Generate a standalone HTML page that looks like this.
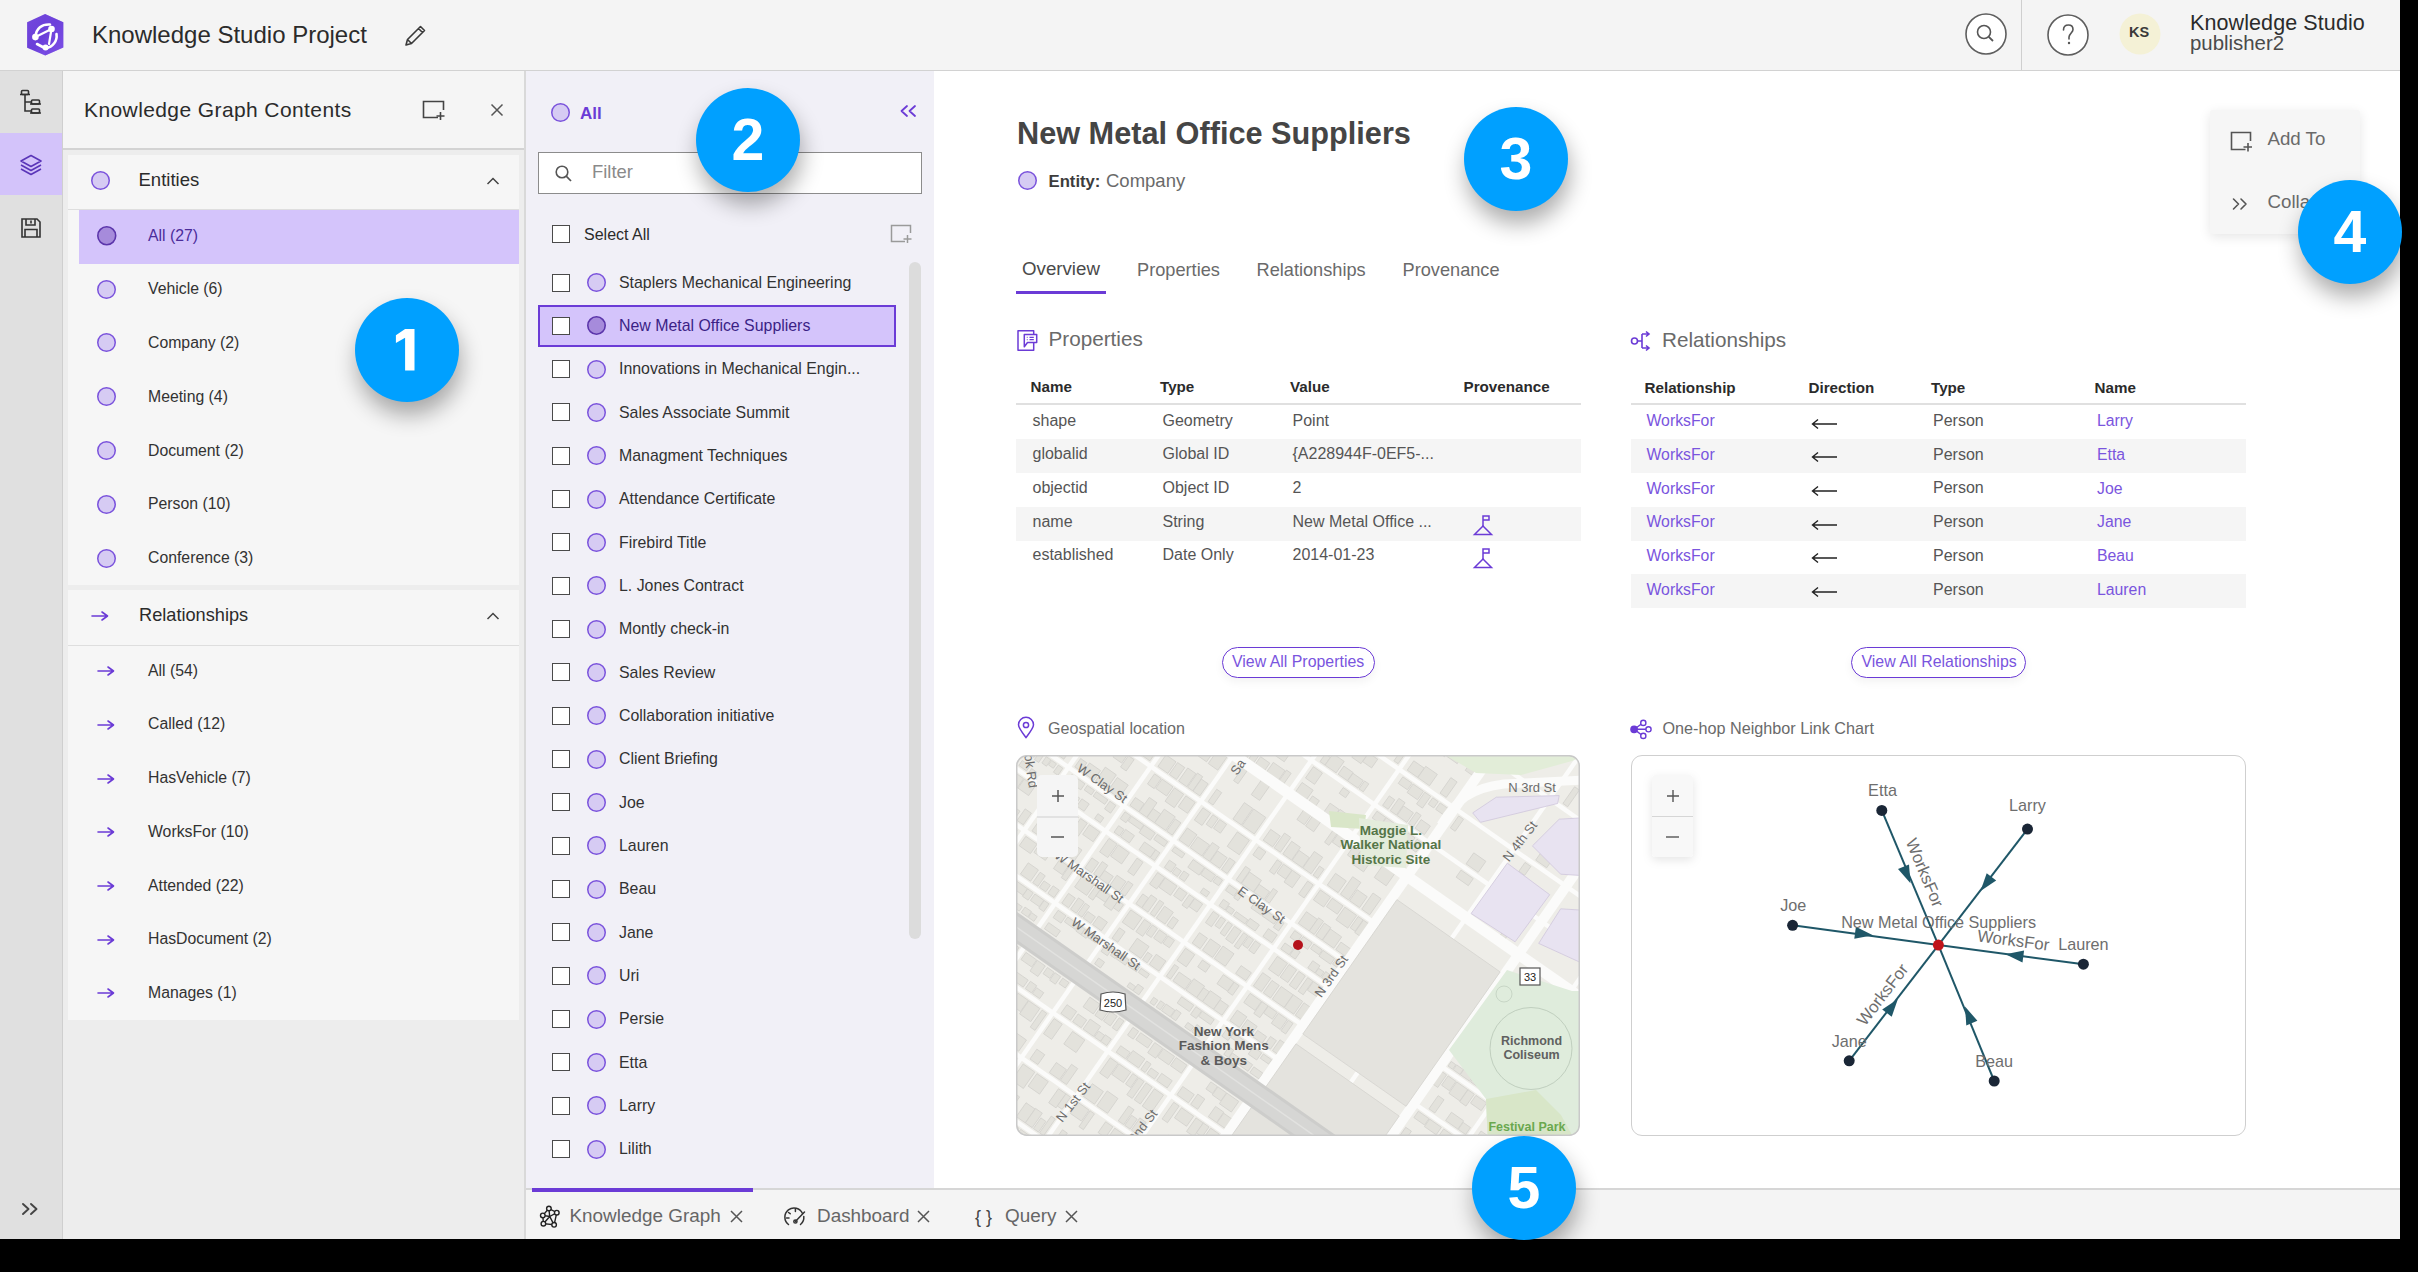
<!DOCTYPE html>
<html><head><meta charset="utf-8">
<style>
*{box-sizing:border-box;margin:0;padding:0}
html,body{width:2418px;height:1272px;overflow:hidden;background:#000;font-family:"Liberation Sans",sans-serif;color:#323232}
.a{position:absolute}
.t{position:absolute;white-space:nowrap;line-height:1}
svg.a{overflow:visible}
#app{position:absolute;left:0;top:0;width:2400px;height:1239px;background:#fff;overflow:hidden}
.badge{position:absolute;width:104px;height:104px;border-radius:52px;background:#00a0ff;color:#fff;font-weight:bold;font-size:59px;text-align:center;line-height:105px;box-shadow:2px 13px 22px rgba(0,0,0,.32)}
</style></head><body>
<div id="app">

<div class="a" style="left:0px;top:0px;width:2400px;height:70px;background:#f4f4f4;"></div>
<div class="a" style="left:0px;top:70px;width:2400px;height:1px;background:#d2d2d2;"></div>
<div class="a" style="left:0px;top:71px;width:62px;height:1168px;background:#e0e0e0;"></div>
<div class="a" style="left:62px;top:71px;width:1px;height:1168px;background:#cfcfcf;"></div>
<div class="a" style="left:63px;top:71px;width:461px;height:1168px;background:#ededed;"></div>
<div class="a" style="left:524px;top:71px;width:2px;height:1168px;background:#d9d9d9;"></div>
<div class="a" style="left:526px;top:71px;width:408px;height:1117px;background:#f1f0f7;"></div>
<div class="a" style="left:526px;top:1188px;width:1874px;height:2px;background:#d6d6d6;"></div>
<div class="a" style="left:526px;top:1190px;width:1874px;height:49px;background:#f4f4f4;"></div>
<svg class="a" style="left:26px;top:13px;" width="39" height="45" viewBox="0 0 39 45"><defs><linearGradient id="lg" x1="0" y1="0" x2="1" y2="1"><stop offset="0" stop-color="#7448dc"/><stop offset="0.5" stop-color="#6a3fd9"/><stop offset="1" stop-color="#8a5cf2"/></linearGradient></defs>
<polygon points="19,0.9 37.3,9.2 37.3,34.4 19.2,42.6 1.1,34.8 1.1,9.2" fill="url(#lg)"/>
<polygon points="19,0.9 37.3,9.2 37.3,34.4 19.2,42.6 19.2,12" fill="#6f44dc" opacity="0.5"/>
<path d="M9.5,24 C10,15 16,11 24,11.5" stroke="#fff" stroke-width="2.6" fill="none" stroke-linecap="round"/>
<path d="M30.5,21 C31.5,28 27,34 19.6,35.5 L11,31" stroke="#fff" stroke-width="2.6" fill="none" stroke-linecap="round" stroke-linejoin="round"/>
<path d="M9.5,24 L25.5,16 L23,31" stroke="#fff" stroke-width="2.2" fill="none" stroke-linecap="round" stroke-linejoin="round"/>
<circle cx="9.4" cy="24.1" r="3.3" fill="#fff"/><circle cx="25.5" cy="16" r="3.3" fill="#fff"/><circle cx="19.6" cy="34.6" r="3" fill="#fff"/></svg>
<div class="t" style="left:92.0px;top:22.5px;font-size:24px;color:#2b2b2b">Knowledge Studio Project</div>
<svg class="a" style="left:403px;top:24px;" width="24" height="24" viewBox="0 0 24 24"><path d="M3,21 L4.5,15.5 L17.5,2.5 L21.5,6.5 L8.5,19.5 Z M4.5,15.5 L8.5,19.5 M15.5,4.5 L19.5,8.5" stroke="#3a3a3a" stroke-width="1.6" fill="none" stroke-linejoin="round"/></svg>
<svg class="a" style="left:1964px;top:12px;" width="44" height="44" viewBox="0 0 44 44"><circle cx="22" cy="22" r="20" fill="#fff" stroke="#5e5e5e" stroke-width="1.6"/><circle cx="20" cy="20" r="6.5" fill="none" stroke="#555" stroke-width="1.6"/><path d="M24.8,24.8 L29,29" stroke="#555" stroke-width="1.8"/></svg>
<div class="a" style="left:2021px;top:0px;width:1px;height:70px;background:#cfcfcf;"></div>
<svg class="a" style="left:2046px;top:13px;" width="44" height="44" viewBox="0 0 44 44"><circle cx="22" cy="22" r="20" fill="#fff" stroke="#5e5e5e" stroke-width="1.6"/><path d="M17.5,17 C17.5,13.5 20,12 22.5,12 C25.5,12 27,14 27,16.5 C27,19.5 23.5,20.5 23,24 L23,26" stroke="#555" stroke-width="1.6" fill="none" stroke-linecap="round"/><circle cx="23" cy="30" r="1.2" fill="#555"/></svg>
<svg class="a" style="left:2119px;top:13px;" width="42" height="42" viewBox="0 0 42 42"><circle cx="21" cy="21" r="20.5" fill="#f4f1d6"/></svg>
<div class="t" style="left:2129.0px;top:25.0px;font-size:14.5px;color:#3a3a3a;font-weight:700">KS</div>
<div class="t" style="left:2190.0px;top:12.5px;font-size:21.5px;color:#2b2b2b;letter-spacing:0.1px">Knowledge Studio</div>
<div class="t" style="left:2190.0px;top:32.9px;font-size:20.4px;color:#4a4a4a">publisher2</div>
<svg class="a" style="left:18px;top:88px;" width="28" height="28" viewBox="0 0 28 28"><g stroke="#333" stroke-width="1.6" fill="none"><rect x="3.5" y="2.5" width="7" height="4" rx="1"/><rect x="13.5" y="12" width="8" height="4" rx="1"/><rect x="13.5" y="21" width="8" height="4" rx="1"/><path d="M7,6.5 V23 H13.5 M7,14 H13.5"/><path d="M2,6.5 H12 M12,16 H23 M12,25 H23"/></g></svg>
<div class="a" style="left:0px;top:133px;width:62px;height:62px;background:#d3c3fa;"></div>
<svg class="a" style="left:17px;top:151px;" width="28" height="28" viewBox="0 0 28 28"><g stroke="#5a35b8" stroke-width="1.6" fill="none" stroke-linejoin="round"><path d="M14,4.5 L24,10 L14,15.5 L4,10 Z"/><path d="M4,14 L14,19.5 L24,14"/><path d="M4,18 L14,23.5 L24,18"/></g></svg>
<svg class="a" style="left:20px;top:217px;" width="22" height="22" viewBox="0 0 22 22"><g stroke="#333" stroke-width="1.6" fill="none"><path d="M2,2 H17 L20,5 V20 H2 Z"/><path d="M6,2 V8 H15 V2"/><path d="M11,3.5 V6.5"/><path d="M5,20 V12.5 H17 V20"/></g></svg>
<svg class="a" style="left:20px;top:1201px;" width="22" height="16" viewBox="0 0 22 16"><path d="M3,3 L8.5,8 L3,13 M11,3 L16.5,8 L11,13" stroke="#444" stroke-width="1.9" fill="none" stroke-linecap="round" stroke-linejoin="round"/></svg>
<div class="a" style="left:63px;top:71px;width:461px;height:78px;background:#f5f5f5;"></div>
<div class="a" style="left:63px;top:148px;width:461px;height:2px;background:#d3d3d3;"></div>
<div class="t" style="left:84.0px;top:98.8px;font-size:21px;color:#2b2b2b;letter-spacing:0.4px">Knowledge Graph Contents</div>
<svg class="a" style="left:421px;top:99px;" width="26" height="22" viewBox="0 0 26 22"><g stroke="#444" stroke-width="1.6" fill="none"><path d="M17,18.5 H2.5 V2.5 H22.5 V11"/><path d="M19.5,13 V21 M15.5,17 H23.5"/></g></svg>
<svg class="a" style="left:490px;top:103px;" width="14" height="14" viewBox="0 0 14 14"><path d="M1.5,1.5 L12.5,12.5 M12.5,1.5 L1.5,12.5" stroke="#555" stroke-width="1.5"/></svg>
<div class="a" style="left:68px;top:155px;width:451px;height:430px;background:#f6f6f6;"></div>
<div class="a" style="left:68px;top:209px;width:451px;height:1px;background:#dedede;"></div>
<svg class="a" style="left:89.5px;top:170.0px;" width="21" height="21" viewBox="0 0 21 21"><circle cx="10.5" cy="10.5" r="8.75" fill="#d6cbf3" stroke="#7a52dc" stroke-width="1.5"/></svg>
<div class="t" style="left:138.5px;top:170.9px;font-size:18.5px;color:#2b2b2b">Entities</div>
<svg class="a" style="left:486px;top:176px;" width="14" height="10" viewBox="0 0 14 10"><path d="M1.5,8 L7,2.5 L12.5,8" stroke="#444" stroke-width="1.5" fill="none"/></svg>
<div class="a" style="left:79px;top:210px;width:440px;height:54px;background:#d4c4fb;"></div>
<svg class="a" style="left:95.75px;top:224.85px;" width="21.5" height="21.5" viewBox="0 0 21.5 21.5"><circle cx="10.75" cy="10.75" r="8.95" fill="#a68bdb" stroke="#5b35ab" stroke-width="1.6"/></svg>
<div class="t" style="left:148.0px;top:227.6px;font-size:15.8px;color:#4b2c9a">All (27)</div>
<svg class="a" style="left:96.0px;top:278.5px;" width="21" height="21" viewBox="0 0 21 21"><circle cx="10.5" cy="10.5" r="8.75" fill="#d6cbf3" stroke="#7a52dc" stroke-width="1.5"/></svg>
<div class="t" style="left:148.0px;top:281.2px;font-size:15.8px;color:#323232">Vehicle (6)</div>
<svg class="a" style="left:96.0px;top:332.3px;" width="21" height="21" viewBox="0 0 21 21"><circle cx="10.5" cy="10.5" r="8.75" fill="#d6cbf3" stroke="#7a52dc" stroke-width="1.5"/></svg>
<div class="t" style="left:148.0px;top:335.0px;font-size:15.8px;color:#323232">Company (2)</div>
<svg class="a" style="left:96.0px;top:386.1px;" width="21" height="21" viewBox="0 0 21 21"><circle cx="10.5" cy="10.5" r="8.75" fill="#d6cbf3" stroke="#7a52dc" stroke-width="1.5"/></svg>
<div class="t" style="left:148.0px;top:388.8px;font-size:15.8px;color:#323232">Meeting (4)</div>
<svg class="a" style="left:96.0px;top:439.9px;" width="21" height="21" viewBox="0 0 21 21"><circle cx="10.5" cy="10.5" r="8.75" fill="#d6cbf3" stroke="#7a52dc" stroke-width="1.5"/></svg>
<div class="t" style="left:148.0px;top:442.6px;font-size:15.8px;color:#323232">Document (2)</div>
<svg class="a" style="left:96.0px;top:493.7px;" width="21" height="21" viewBox="0 0 21 21"><circle cx="10.5" cy="10.5" r="8.75" fill="#d6cbf3" stroke="#7a52dc" stroke-width="1.5"/></svg>
<div class="t" style="left:148.0px;top:496.4px;font-size:15.8px;color:#323232">Person (10)</div>
<svg class="a" style="left:96.0px;top:547.5px;" width="21" height="21" viewBox="0 0 21 21"><circle cx="10.5" cy="10.5" r="8.75" fill="#d6cbf3" stroke="#7a52dc" stroke-width="1.5"/></svg>
<div class="t" style="left:148.0px;top:550.2px;font-size:15.8px;color:#323232">Conference (3)</div>
<div class="a" style="left:68px;top:590px;width:451px;height:430px;background:#f6f6f6;"></div>
<div class="a" style="left:68px;top:645px;width:451px;height:1px;background:#dedede;"></div>
<svg class="a" style="left:91px;top:609.5px;" width="19" height="12" viewBox="0 0 19 12"><path d="M1,6 H16.5 M11,2 L16.5,6 L11,10" stroke="#6b3bd6" stroke-width="1.6" fill="none" stroke-linecap="round" stroke-linejoin="round"/></svg>
<div class="t" style="left:139.0px;top:606.3px;font-size:18.2px;color:#2b2b2b">Relationships</div>
<svg class="a" style="left:486px;top:611px;" width="14" height="10" viewBox="0 0 14 10"><path d="M1.5,8 L7,2.5 L12.5,8" stroke="#444" stroke-width="1.5" fill="none"/></svg>
<svg class="a" style="left:97.2px;top:665.1px;" width="19" height="12" viewBox="0 0 19 12"><path d="M1,6 H16.5 M11,2 L16.5,6 L11,10" stroke="#6b3bd6" stroke-width="1.6" fill="none" stroke-linecap="round" stroke-linejoin="round"/></svg>
<div class="t" style="left:148.0px;top:662.7px;font-size:15.8px;color:#323232">All (54)</div>
<svg class="a" style="left:97.2px;top:718.8000000000001px;" width="19" height="12" viewBox="0 0 19 12"><path d="M1,6 H16.5 M11,2 L16.5,6 L11,10" stroke="#6b3bd6" stroke-width="1.6" fill="none" stroke-linecap="round" stroke-linejoin="round"/></svg>
<div class="t" style="left:148.0px;top:716.4px;font-size:15.8px;color:#323232">Called (12)</div>
<svg class="a" style="left:97.2px;top:772.5px;" width="19" height="12" viewBox="0 0 19 12"><path d="M1,6 H16.5 M11,2 L16.5,6 L11,10" stroke="#6b3bd6" stroke-width="1.6" fill="none" stroke-linecap="round" stroke-linejoin="round"/></svg>
<div class="t" style="left:148.0px;top:770.1px;font-size:15.8px;color:#323232">HasVehicle (7)</div>
<svg class="a" style="left:97.2px;top:826.2px;" width="19" height="12" viewBox="0 0 19 12"><path d="M1,6 H16.5 M11,2 L16.5,6 L11,10" stroke="#6b3bd6" stroke-width="1.6" fill="none" stroke-linecap="round" stroke-linejoin="round"/></svg>
<div class="t" style="left:148.0px;top:823.8px;font-size:15.8px;color:#323232">WorksFor (10)</div>
<svg class="a" style="left:97.2px;top:879.9px;" width="19" height="12" viewBox="0 0 19 12"><path d="M1,6 H16.5 M11,2 L16.5,6 L11,10" stroke="#6b3bd6" stroke-width="1.6" fill="none" stroke-linecap="round" stroke-linejoin="round"/></svg>
<div class="t" style="left:148.0px;top:877.5px;font-size:15.8px;color:#323232">Attended (22)</div>
<svg class="a" style="left:97.2px;top:933.6px;" width="19" height="12" viewBox="0 0 19 12"><path d="M1,6 H16.5 M11,2 L16.5,6 L11,10" stroke="#6b3bd6" stroke-width="1.6" fill="none" stroke-linecap="round" stroke-linejoin="round"/></svg>
<div class="t" style="left:148.0px;top:931.2px;font-size:15.8px;color:#323232">HasDocument (2)</div>
<svg class="a" style="left:97.2px;top:987.3000000000001px;" width="19" height="12" viewBox="0 0 19 12"><path d="M1,6 H16.5 M11,2 L16.5,6 L11,10" stroke="#6b3bd6" stroke-width="1.6" fill="none" stroke-linecap="round" stroke-linejoin="round"/></svg>
<div class="t" style="left:148.0px;top:984.9px;font-size:15.8px;color:#323232">Manages (1)</div>
<svg class="a" style="left:549.5px;top:101.8px;" width="21" height="21" viewBox="0 0 21 21"><circle cx="10.5" cy="10.5" r="8.75" fill="#d6cbf3" stroke="#7a52dc" stroke-width="1.5"/></svg>
<div class="t" style="left:580.0px;top:104.6px;font-size:17px;color:#6b3bd6;font-weight:700">All</div>
<svg class="a" style="left:898px;top:103px;" width="20" height="16" viewBox="0 0 20 16"><path d="M9,3 L3.5,8 L9,13 M17,3 L11.5,8 L17,13" stroke="#6b3bd6" stroke-width="1.8" fill="none" stroke-linecap="round" stroke-linejoin="round"/></svg>
<div class="a" style="left:538px;top:152px;width:384px;height:42px;background:#fff;border:1.3px solid #8c8c8c"></div>
<svg class="a" style="left:554px;top:164px;" width="20" height="20" viewBox="0 0 20 20"><circle cx="8" cy="8" r="5.8" fill="none" stroke="#555" stroke-width="1.6"/><path d="M12.2,12.2 L17,17" stroke="#555" stroke-width="1.7"/></svg>
<div class="t" style="left:592.0px;top:163.4px;font-size:18.4px;color:#8a8a8a">Filter</div>
<div class="a" style="left:552px;top:225px;width:18px;height:18px;background:#fff;border:1.6px solid #4a4a4a"></div>
<div class="t" style="left:584.0px;top:226.5px;font-size:16px;color:#2b2b2b">Select All</div>
<svg class="a" style="left:889px;top:223px;" width="26" height="22" viewBox="0 0 26 22"><g stroke="#9a9a9a" stroke-width="1.5" fill="none"><path d="M16,18.5 H2.5 V2.5 H21.5 V10"/><path d="M18.5,12 V20 M14.5,16 H22.5"/></g></svg>
<div class="a" style="left:909px;top:262px;width:12px;height:677px;background:#dcdcdc;border-radius:6px"></div>
<div class="a" style="left:552px;top:273.5px;width:18px;height:18px;background:#fff;border:1.6px solid #4a4a4a"></div>
<svg class="a" style="left:585.5px;top:272.0px;" width="21" height="21" viewBox="0 0 21 21"><circle cx="10.5" cy="10.5" r="8.75" fill="#d6cbf3" stroke="#7a52dc" stroke-width="1.5"/></svg>
<div class="t" style="left:619.0px;top:274.5px;font-size:15.9px;color:#323232">Staplers Mechanical Engineering</div>
<div class="a" style="left:538px;top:305px;width:358px;height:42px;background:#d4c4fb;border:2.4px solid #6b3bd6"></div>
<div class="a" style="left:552px;top:316.83px;width:18px;height:18px;background:#fff;border:1.6px solid #4a4a4a"></div>
<svg class="a" style="left:585.5px;top:315.33px;" width="21" height="21" viewBox="0 0 21 21"><circle cx="10.5" cy="10.5" r="8.7" fill="#a68bdb" stroke="#5b35ab" stroke-width="1.6"/></svg>
<div class="t" style="left:619.0px;top:317.9px;font-size:15.9px;color:#3b1f86">New Metal Office Suppliers</div>
<div class="a" style="left:552px;top:360.15999999999997px;width:18px;height:18px;background:#fff;border:1.6px solid #4a4a4a"></div>
<svg class="a" style="left:585.5px;top:358.65999999999997px;" width="21" height="21" viewBox="0 0 21 21"><circle cx="10.5" cy="10.5" r="8.75" fill="#d6cbf3" stroke="#7a52dc" stroke-width="1.5"/></svg>
<div class="t" style="left:619.0px;top:361.2px;font-size:15.9px;color:#323232">Innovations in Mechanical Engin...</div>
<div class="a" style="left:552px;top:403.49px;width:18px;height:18px;background:#fff;border:1.6px solid #4a4a4a"></div>
<svg class="a" style="left:585.5px;top:401.99px;" width="21" height="21" viewBox="0 0 21 21"><circle cx="10.5" cy="10.5" r="8.75" fill="#d6cbf3" stroke="#7a52dc" stroke-width="1.5"/></svg>
<div class="t" style="left:619.0px;top:404.5px;font-size:15.9px;color:#323232">Sales Associate Summit</div>
<div class="a" style="left:552px;top:446.82px;width:18px;height:18px;background:#fff;border:1.6px solid #4a4a4a"></div>
<svg class="a" style="left:585.5px;top:445.32px;" width="21" height="21" viewBox="0 0 21 21"><circle cx="10.5" cy="10.5" r="8.75" fill="#d6cbf3" stroke="#7a52dc" stroke-width="1.5"/></svg>
<div class="t" style="left:619.0px;top:447.9px;font-size:15.9px;color:#323232">Managment Techniques</div>
<div class="a" style="left:552px;top:490.15px;width:18px;height:18px;background:#fff;border:1.6px solid #4a4a4a"></div>
<svg class="a" style="left:585.5px;top:488.65px;" width="21" height="21" viewBox="0 0 21 21"><circle cx="10.5" cy="10.5" r="8.75" fill="#d6cbf3" stroke="#7a52dc" stroke-width="1.5"/></svg>
<div class="t" style="left:619.0px;top:491.2px;font-size:15.9px;color:#323232">Attendance Certificate</div>
<div class="a" style="left:552px;top:533.48px;width:18px;height:18px;background:#fff;border:1.6px solid #4a4a4a"></div>
<svg class="a" style="left:585.5px;top:531.98px;" width="21" height="21" viewBox="0 0 21 21"><circle cx="10.5" cy="10.5" r="8.75" fill="#d6cbf3" stroke="#7a52dc" stroke-width="1.5"/></svg>
<div class="t" style="left:619.0px;top:534.5px;font-size:15.9px;color:#323232">Firebird Title</div>
<div class="a" style="left:552px;top:576.81px;width:18px;height:18px;background:#fff;border:1.6px solid #4a4a4a"></div>
<svg class="a" style="left:585.5px;top:575.31px;" width="21" height="21" viewBox="0 0 21 21"><circle cx="10.5" cy="10.5" r="8.75" fill="#d6cbf3" stroke="#7a52dc" stroke-width="1.5"/></svg>
<div class="t" style="left:619.0px;top:577.9px;font-size:15.9px;color:#323232">L. Jones Contract</div>
<div class="a" style="left:552px;top:620.14px;width:18px;height:18px;background:#fff;border:1.6px solid #4a4a4a"></div>
<svg class="a" style="left:585.5px;top:618.64px;" width="21" height="21" viewBox="0 0 21 21"><circle cx="10.5" cy="10.5" r="8.75" fill="#d6cbf3" stroke="#7a52dc" stroke-width="1.5"/></svg>
<div class="t" style="left:619.0px;top:621.2px;font-size:15.9px;color:#323232">Montly check-in</div>
<div class="a" style="left:552px;top:663.47px;width:18px;height:18px;background:#fff;border:1.6px solid #4a4a4a"></div>
<svg class="a" style="left:585.5px;top:661.97px;" width="21" height="21" viewBox="0 0 21 21"><circle cx="10.5" cy="10.5" r="8.75" fill="#d6cbf3" stroke="#7a52dc" stroke-width="1.5"/></svg>
<div class="t" style="left:619.0px;top:664.5px;font-size:15.9px;color:#323232">Sales Review</div>
<div class="a" style="left:552px;top:706.8px;width:18px;height:18px;background:#fff;border:1.6px solid #4a4a4a"></div>
<svg class="a" style="left:585.5px;top:705.3px;" width="21" height="21" viewBox="0 0 21 21"><circle cx="10.5" cy="10.5" r="8.75" fill="#d6cbf3" stroke="#7a52dc" stroke-width="1.5"/></svg>
<div class="t" style="left:619.0px;top:707.8px;font-size:15.9px;color:#323232">Collaboration initiative</div>
<div class="a" style="left:552px;top:750.13px;width:18px;height:18px;background:#fff;border:1.6px solid #4a4a4a"></div>
<svg class="a" style="left:585.5px;top:748.63px;" width="21" height="21" viewBox="0 0 21 21"><circle cx="10.5" cy="10.5" r="8.75" fill="#d6cbf3" stroke="#7a52dc" stroke-width="1.5"/></svg>
<div class="t" style="left:619.0px;top:751.2px;font-size:15.9px;color:#323232">Client Briefing</div>
<div class="a" style="left:552px;top:793.46px;width:18px;height:18px;background:#fff;border:1.6px solid #4a4a4a"></div>
<svg class="a" style="left:585.5px;top:791.96px;" width="21" height="21" viewBox="0 0 21 21"><circle cx="10.5" cy="10.5" r="8.75" fill="#d6cbf3" stroke="#7a52dc" stroke-width="1.5"/></svg>
<div class="t" style="left:619.0px;top:794.5px;font-size:15.9px;color:#323232">Joe</div>
<div class="a" style="left:552px;top:836.79px;width:18px;height:18px;background:#fff;border:1.6px solid #4a4a4a"></div>
<svg class="a" style="left:585.5px;top:835.29px;" width="21" height="21" viewBox="0 0 21 21"><circle cx="10.5" cy="10.5" r="8.75" fill="#d6cbf3" stroke="#7a52dc" stroke-width="1.5"/></svg>
<div class="t" style="left:619.0px;top:837.8px;font-size:15.9px;color:#323232">Lauren</div>
<div class="a" style="left:552px;top:880.12px;width:18px;height:18px;background:#fff;border:1.6px solid #4a4a4a"></div>
<svg class="a" style="left:585.5px;top:878.62px;" width="21" height="21" viewBox="0 0 21 21"><circle cx="10.5" cy="10.5" r="8.75" fill="#d6cbf3" stroke="#7a52dc" stroke-width="1.5"/></svg>
<div class="t" style="left:619.0px;top:881.2px;font-size:15.9px;color:#323232">Beau</div>
<div class="a" style="left:552px;top:923.4499999999999px;width:18px;height:18px;background:#fff;border:1.6px solid #4a4a4a"></div>
<svg class="a" style="left:585.5px;top:921.9499999999999px;" width="21" height="21" viewBox="0 0 21 21"><circle cx="10.5" cy="10.5" r="8.75" fill="#d6cbf3" stroke="#7a52dc" stroke-width="1.5"/></svg>
<div class="t" style="left:619.0px;top:924.5px;font-size:15.9px;color:#323232">Jane</div>
<div class="a" style="left:552px;top:966.78px;width:18px;height:18px;background:#fff;border:1.6px solid #4a4a4a"></div>
<svg class="a" style="left:585.5px;top:965.28px;" width="21" height="21" viewBox="0 0 21 21"><circle cx="10.5" cy="10.5" r="8.75" fill="#d6cbf3" stroke="#7a52dc" stroke-width="1.5"/></svg>
<div class="t" style="left:619.0px;top:967.8px;font-size:15.9px;color:#323232">Uri</div>
<div class="a" style="left:552px;top:1010.11px;width:18px;height:18px;background:#fff;border:1.6px solid #4a4a4a"></div>
<svg class="a" style="left:585.5px;top:1008.61px;" width="21" height="21" viewBox="0 0 21 21"><circle cx="10.5" cy="10.5" r="8.75" fill="#d6cbf3" stroke="#7a52dc" stroke-width="1.5"/></svg>
<div class="t" style="left:619.0px;top:1011.2px;font-size:15.9px;color:#323232">Persie</div>
<div class="a" style="left:552px;top:1053.44px;width:18px;height:18px;background:#fff;border:1.6px solid #4a4a4a"></div>
<svg class="a" style="left:585.5px;top:1051.94px;" width="21" height="21" viewBox="0 0 21 21"><circle cx="10.5" cy="10.5" r="8.75" fill="#d6cbf3" stroke="#7a52dc" stroke-width="1.5"/></svg>
<div class="t" style="left:619.0px;top:1054.5px;font-size:15.9px;color:#323232">Etta</div>
<div class="a" style="left:552px;top:1096.77px;width:18px;height:18px;background:#fff;border:1.6px solid #4a4a4a"></div>
<svg class="a" style="left:585.5px;top:1095.27px;" width="21" height="21" viewBox="0 0 21 21"><circle cx="10.5" cy="10.5" r="8.75" fill="#d6cbf3" stroke="#7a52dc" stroke-width="1.5"/></svg>
<div class="t" style="left:619.0px;top:1097.8px;font-size:15.9px;color:#323232">Larry</div>
<div class="a" style="left:552px;top:1140.1px;width:18px;height:18px;background:#fff;border:1.6px solid #4a4a4a"></div>
<svg class="a" style="left:585.5px;top:1138.6px;" width="21" height="21" viewBox="0 0 21 21"><circle cx="10.5" cy="10.5" r="8.75" fill="#d6cbf3" stroke="#7a52dc" stroke-width="1.5"/></svg>
<div class="t" style="left:619.0px;top:1141.1px;font-size:15.9px;color:#323232">Lilith</div>
<div class="a" style="left:532px;top:1188px;width:221px;height:4px;background:#6b3bd6;"></div>
<svg class="a" style="left:538px;top:1205px;" width="24" height="24" viewBox="0 0 24 24"><g stroke="#222" stroke-width="1.4" fill="#f4f4f4"><path d="M10.9,3.5 L18.8,7.7 L16.1,19.8 L5.4,18.7 L4.8,10.4 Z M10.9,3.5 L11.7,11.5 L18.8,7.7 M4.8,10.4 L11.7,11.5 L16.1,19.8 M5.4,18.7 L11.7,11.5" fill="none"/><circle cx="10.9" cy="3.5" r="2.3"/><circle cx="18.8" cy="7.7" r="2.3"/><circle cx="4.8" cy="10.4" r="2.3"/><circle cx="5.4" cy="18.7" r="2.3"/><circle cx="16.1" cy="19.8" r="2.3"/></g></svg>
<div class="t" style="left:569.5px;top:1206.6px;font-size:18.9px;color:#666">Knowledge Graph</div>
<svg class="a" style="left:729px;top:1209px;" width="16" height="16" viewBox="0 0 16 16"><path d="M2,2 L13,13 M13,2 L2,13" stroke="#555" stroke-width="1.5"/></svg>
<svg class="a" style="left:784px;top:1204px;" width="24" height="24" viewBox="0 0 24 24"><g stroke="#333" stroke-width="1.5" fill="none" stroke-linecap="round"><path d="M4.5,20.5 A9.2,9.2 0 1 1 18.5,9.5"/><path d="M19.8,12.5 A9.2,9.2 0 0 1 16.5,20.5"/><path d="M11.4,4.8 V7.5 M4.5,8.5 L6.2,9.7 M2.5,14 H5"/><path d="M11.4,17.5 L20.5,8"/><circle cx="11.4" cy="17.5" r="1.6"/></g></svg>
<div class="t" style="left:817.0px;top:1206.6px;font-size:18.9px;color:#666">Dashboard</div>
<svg class="a" style="left:916px;top:1209px;" width="16" height="16" viewBox="0 0 16 16"><path d="M2,2 L13,13 M13,2 L2,13" stroke="#555" stroke-width="1.5"/></svg>
<div class="t" style="left:975.0px;top:1207.8px;font-size:18px;color:#444">{ }</div>
<div class="t" style="left:1005.0px;top:1206.6px;font-size:18.9px;color:#666">Query</div>
<svg class="a" style="left:1064px;top:1209px;" width="16" height="16" viewBox="0 0 16 16"><path d="M2,2 L13,13 M13,2 L2,13" stroke="#555" stroke-width="1.5"/></svg>
<div class="t" style="left:1017.0px;top:119.0px;font-size:30.7px;color:#454545;font-weight:700">New Metal Office Suppliers</div>
<svg class="a" style="left:1016.5px;top:170.0px;" width="21" height="21" viewBox="0 0 21 21"><circle cx="10.5" cy="10.5" r="8.75" fill="#d6cbf3" stroke="#7a52dc" stroke-width="1.5"/></svg>
<div class="t" style="left:1048.5px;top:173.9px;font-size:16.7px;color:#3c3c3c;font-weight:700">Entity:</div>
<div class="t" style="left:1106.0px;top:172.3px;font-size:18.5px;color:#6a6a6a">Company</div>
<div class="t" style="left:1022.0px;top:260.4px;font-size:18.7px;color:#4a4a4a">Overview</div>
<div class="t" style="left:1137.0px;top:260.8px;font-size:18.2px;color:#6a6a6a">Properties</div>
<div class="t" style="left:1256.5px;top:260.8px;font-size:18.2px;color:#6a6a6a">Relationships</div>
<div class="t" style="left:1402.5px;top:260.8px;font-size:18.2px;color:#6a6a6a">Provenance</div>
<div class="a" style="left:1016px;top:291px;width:90px;height:3px;background:#6b3bd6;"></div>
<svg class="a" style="left:1015px;top:328px;" width="24" height="24" viewBox="0 0 24 24"><g stroke="#6b3bd6" stroke-width="1.5" fill="none" stroke-linejoin="round"><path d="M18.7,6.5 V2.8 H3 V22.3 H18.7 V14.5"/><path d="M9.3,6.5 H21.7 V14.5 H12.5 L9.3,18.8 Z" fill="#fff"/><path d="M14.5,9.3 H18.8 M14.5,11.6 H18.8 M11.8,9.3 H12.6 M11.8,11.6 H12.6" stroke-width="1.3"/></g></svg>
<div class="t" style="left:1048.5px;top:329.3px;font-size:20.7px;color:#6a6a6a">Properties</div>
<div class="t" style="left:1030.5px;top:379.3px;font-size:15.2px;color:#2b2b2b;font-weight:700">Name</div>
<div class="t" style="left:1160.0px;top:379.3px;font-size:15.2px;color:#2b2b2b;font-weight:700">Type</div>
<div class="t" style="left:1290.0px;top:379.3px;font-size:15.2px;color:#2b2b2b;font-weight:700">Value</div>
<div class="t" style="left:1463.5px;top:379.3px;font-size:15.2px;color:#2b2b2b;font-weight:700">Provenance</div>
<div class="a" style="left:1016px;top:403px;width:565px;height:2px;background:#e0e0e0;"></div>
<div class="t" style="left:1032.5px;top:412.5px;font-size:16px;color:#555">shape</div>
<div class="t" style="left:1162.5px;top:412.5px;font-size:16px;color:#555">Geometry</div>
<div class="t" style="left:1292.5px;top:412.5px;font-size:16px;color:#555">Point</div>
<div class="a" style="left:1016px;top:439px;width:565px;height:34px;background:#f5f5f5;"></div>
<div class="t" style="left:1032.5px;top:446.2px;font-size:16px;color:#555">globalid</div>
<div class="t" style="left:1162.5px;top:446.2px;font-size:16px;color:#555">Global ID</div>
<div class="t" style="left:1292.5px;top:446.2px;font-size:16px;color:#555">{A228944F-0EF5-...</div>
<div class="t" style="left:1032.5px;top:479.9px;font-size:16px;color:#555">objectid</div>
<div class="t" style="left:1162.5px;top:479.9px;font-size:16px;color:#555">Object ID</div>
<div class="t" style="left:1292.5px;top:479.9px;font-size:16px;color:#555">2</div>
<div class="a" style="left:1016px;top:507px;width:565px;height:34px;background:#f5f5f5;"></div>
<div class="t" style="left:1032.5px;top:513.6px;font-size:16px;color:#555">name</div>
<div class="t" style="left:1162.5px;top:513.6px;font-size:16px;color:#555">String</div>
<div class="t" style="left:1292.5px;top:513.6px;font-size:16px;color:#555">New Metal Office ...</div>
<svg class="a" style="left:1472px;top:513.6px;" width="22" height="22" viewBox="0 0 22 22"><g stroke="#6b3bd6" stroke-width="1.5" fill="none"><path d="M11,12 L11,2 H17 V6 H11"/><path d="M11,12 L2.5,20.5 H19.5 Z"/></g></svg>
<div class="t" style="left:1032.5px;top:547.3px;font-size:16px;color:#555">established</div>
<div class="t" style="left:1162.5px;top:547.3px;font-size:16px;color:#555">Date Only</div>
<div class="t" style="left:1292.5px;top:547.3px;font-size:16px;color:#555">2014-01-23</div>
<svg class="a" style="left:1472px;top:547.3px;" width="22" height="22" viewBox="0 0 22 22"><g stroke="#6b3bd6" stroke-width="1.5" fill="none"><path d="M11,12 L11,2 H17 V6 H11"/><path d="M11,12 L2.5,20.5 H19.5 Z"/></g></svg>
<div class="a" style="left:1222px;top:647px;width:153px;height:31px;border:1.6px solid #6b3bd6;border-radius:16px;background:#fff;box-shadow:0 4px 10px rgba(0,0,0,.05)"></div>
<div class="t" style="left:1232.0px;top:653.5px;font-size:15.9px;color:#7a55de">View All Properties</div>
<svg class="a" style="left:1630px;top:330px;" width="24" height="22" viewBox="0 0 24 22"><g stroke="#6b3bd6" stroke-width="1.6" fill="none"><circle cx="4.5" cy="11" r="3"/><path d="M7.5,11 H12 M12,4 V18 M12,4 H19 M12,18 H19 M16,1.5 L19,4 L16,6.5 M16,15.5 L19,18 L16,20.5"/></g></svg>
<div class="t" style="left:1662.0px;top:330.2px;font-size:20.7px;color:#6a6a6a">Relationships</div>
<div class="t" style="left:1644.5px;top:379.9px;font-size:15.2px;color:#2b2b2b;font-weight:700">Relationship</div>
<div class="t" style="left:1808.5px;top:379.9px;font-size:15.2px;color:#2b2b2b;font-weight:700">Direction</div>
<div class="t" style="left:1931.0px;top:379.9px;font-size:15.2px;color:#2b2b2b;font-weight:700">Type</div>
<div class="t" style="left:2094.5px;top:379.9px;font-size:15.2px;color:#2b2b2b;font-weight:700">Name</div>
<div class="a" style="left:1631px;top:403px;width:615px;height:2px;background:#e0e0e0;"></div>
<div class="t" style="left:1646.5px;top:413.1px;font-size:15.8px;color:#7a55de">WorksFor</div>
<svg class="a" style="left:1810px;top:416.5px;" width="28" height="12" viewBox="0 0 28 12"><path d="M27,7 H3 M8,2.5 L2.5,7 L8,11.5" stroke="#222" stroke-width="1.4" fill="none"/></svg>
<div class="t" style="left:1933.0px;top:413.0px;font-size:16px;color:#555">Person</div>
<div class="t" style="left:2097.0px;top:413.1px;font-size:15.8px;color:#7a55de">Larry</div>
<div class="a" style="left:1631px;top:439px;width:615px;height:34px;background:#f5f5f5;"></div>
<div class="t" style="left:1646.5px;top:446.8px;font-size:15.8px;color:#7a55de">WorksFor</div>
<svg class="a" style="left:1810px;top:450.2px;" width="28" height="12" viewBox="0 0 28 12"><path d="M27,7 H3 M8,2.5 L2.5,7 L8,11.5" stroke="#222" stroke-width="1.4" fill="none"/></svg>
<div class="t" style="left:1933.0px;top:446.7px;font-size:16px;color:#555">Person</div>
<div class="t" style="left:2097.0px;top:446.8px;font-size:15.8px;color:#7a55de">Etta</div>
<div class="t" style="left:1646.5px;top:480.5px;font-size:15.8px;color:#7a55de">WorksFor</div>
<svg class="a" style="left:1810px;top:483.9px;" width="28" height="12" viewBox="0 0 28 12"><path d="M27,7 H3 M8,2.5 L2.5,7 L8,11.5" stroke="#222" stroke-width="1.4" fill="none"/></svg>
<div class="t" style="left:1933.0px;top:480.4px;font-size:16px;color:#555">Person</div>
<div class="t" style="left:2097.0px;top:480.5px;font-size:15.8px;color:#7a55de">Joe</div>
<div class="a" style="left:1631px;top:507px;width:615px;height:34px;background:#f5f5f5;"></div>
<div class="t" style="left:1646.5px;top:514.2px;font-size:15.8px;color:#7a55de">WorksFor</div>
<svg class="a" style="left:1810px;top:517.6px;" width="28" height="12" viewBox="0 0 28 12"><path d="M27,7 H3 M8,2.5 L2.5,7 L8,11.5" stroke="#222" stroke-width="1.4" fill="none"/></svg>
<div class="t" style="left:1933.0px;top:514.1px;font-size:16px;color:#555">Person</div>
<div class="t" style="left:2097.0px;top:514.2px;font-size:15.8px;color:#7a55de">Jane</div>
<div class="t" style="left:1646.5px;top:547.9px;font-size:15.8px;color:#7a55de">WorksFor</div>
<svg class="a" style="left:1810px;top:551.3px;" width="28" height="12" viewBox="0 0 28 12"><path d="M27,7 H3 M8,2.5 L2.5,7 L8,11.5" stroke="#222" stroke-width="1.4" fill="none"/></svg>
<div class="t" style="left:1933.0px;top:547.8px;font-size:16px;color:#555">Person</div>
<div class="t" style="left:2097.0px;top:547.9px;font-size:15.8px;color:#7a55de">Beau</div>
<div class="a" style="left:1631px;top:574px;width:615px;height:34px;background:#f5f5f5;"></div>
<div class="t" style="left:1646.5px;top:581.6px;font-size:15.8px;color:#7a55de">WorksFor</div>
<svg class="a" style="left:1810px;top:585.0px;" width="28" height="12" viewBox="0 0 28 12"><path d="M27,7 H3 M8,2.5 L2.5,7 L8,11.5" stroke="#222" stroke-width="1.4" fill="none"/></svg>
<div class="t" style="left:1933.0px;top:581.5px;font-size:16px;color:#555">Person</div>
<div class="t" style="left:2097.0px;top:581.6px;font-size:15.8px;color:#7a55de">Lauren</div>
<div class="a" style="left:1851px;top:647px;width:175px;height:31px;border:1.6px solid #6b3bd6;border-radius:16px;background:#fff;box-shadow:0 4px 10px rgba(0,0,0,.05)"></div>
<div class="t" style="left:1861.5px;top:653.5px;font-size:15.9px;color:#7a55de">View All Relationships</div>
<svg class="a" style="left:1016px;top:717px;" width="20" height="22" viewBox="0 0 20 22"><g stroke="#6b3bd6" stroke-width="1.5" fill="none"><path d="M10,20.5 C5,14 2.5,11 2.5,7.8 A7.5,7.5 0 0 1 17.5,7.8 C17.5,11 15,14 10,20.5 Z"/><circle cx="10" cy="8" r="2.6"/></g></svg>
<div class="t" style="left:1048.0px;top:720.0px;font-size:16.1px;color:#6a6a6a">Geospatial location</div>
<svg class="a" style="left:1629px;top:717px;" width="26" height="24" viewBox="0 0 26 24"><g stroke="#6b3bd6" stroke-width="1.4" fill="none"><circle cx="5.1" cy="12.3" r="3.2" fill="#6b3bd6"/><circle cx="14.3" cy="5.9" r="2.6"/><circle cx="19.5" cy="12.3" r="2.6"/><circle cx="14.3" cy="18.9" r="2.6"/><path d="M7,11 L12,7.2 M7,12.3 H16.9 M7,13.6 L12,17.5"/></g></svg>
<div class="t" style="left:1662.5px;top:719.9px;font-size:16.2px;color:#6a6a6a">One-hop Neighbor Link Chart</div>
<svg class="a" style="left:1016px;top:755px" width="564" height="381" viewBox="0 0 564 381">
<defs><clipPath id="mc"><rect x="0.5" y="0.5" width="563" height="380" rx="10" ry="10"/></clipPath></defs>
<g clip-path="url(#mc)">
<rect width="564" height="381" fill="#eeede8"/>
<g transform="rotate(35)">
<rect x="-34.7" y="-326.0" width="6.5" height="18.2" fill="#e3e2dc" stroke="#d4d3ce" stroke-width="0.8"/>
<rect x="-26.6" y="-326.0" width="8.7" height="11.6" fill="#e3e2dc" stroke="#d4d3ce" stroke-width="0.8"/>
<rect x="-17.8" y="-326.0" width="9.3" height="11.8" fill="#e3e2dc" stroke="#d4d3ce" stroke-width="0.8"/>
<rect x="-7.2" y="-326.0" width="13.3" height="12.4" fill="#e3e2dc" stroke="#d4d3ce" stroke-width="0.8"/>
<rect x="7.9" y="-326.0" width="14.5" height="17.3" fill="#e3e2dc" stroke="#d4d3ce" stroke-width="0.8"/>
<rect x="25.3" y="-326.0" width="5.5" height="20.4" fill="#e3e2dc" stroke="#d4d3ce" stroke-width="0.8"/>
<rect x="31.2" y="-326.0" width="6.2" height="14.4" fill="#e3e2dc" stroke="#d4d3ce" stroke-width="0.8"/>
<rect x="38.0" y="-326.0" width="8.0" height="18.0" fill="#e3e2dc" stroke="#d4d3ce" stroke-width="0.8"/>
<rect x="-35.7" y="-287.3" width="5.6" height="13.3" fill="#e3e2dc" stroke="#d4d3ce" stroke-width="0.8"/>
<rect x="-28.9" y="-291.4" width="8.1" height="17.4" fill="#e3e2dc" stroke="#d4d3ce" stroke-width="0.8"/>
<rect x="-19.8" y="-292.7" width="12.9" height="18.7" fill="#e3e2dc" stroke="#d4d3ce" stroke-width="0.8"/>
<rect x="-5.2" y="-294.6" width="10.3" height="20.6" fill="#e3e2dc" stroke="#d4d3ce" stroke-width="0.8"/>
<rect x="6.0" y="-286.3" width="14.8" height="12.3" fill="#e3e2dc" stroke="#d4d3ce" stroke-width="0.8"/>
<rect x="23.0" y="-290.4" width="6.5" height="16.4" fill="#e3e2dc" stroke="#d4d3ce" stroke-width="0.8"/>
<rect x="56.8" y="-326.0" width="10.9" height="17.4" fill="#e3e2dc" stroke="#d4d3ce" stroke-width="0.8"/>
<rect x="70.2" y="-326.0" width="14.4" height="16.2" fill="#e3e2dc" stroke="#d4d3ce" stroke-width="0.8"/>
<rect x="99.4" y="-326.0" width="7.8" height="15.2" fill="#e3e2dc" stroke="#d4d3ce" stroke-width="0.8"/>
<rect x="107.3" y="-326.0" width="5.7" height="12.8" fill="#e3e2dc" stroke="#d4d3ce" stroke-width="0.8"/>
<rect x="57.1" y="-287.7" width="6.3" height="13.7" fill="#e3e2dc" stroke="#d4d3ce" stroke-width="0.8"/>
<rect x="66.0" y="-289.9" width="5.8" height="15.9" fill="#e3e2dc" stroke="#d4d3ce" stroke-width="0.8"/>
<rect x="74.4" y="-294.5" width="13.2" height="20.5" fill="#e3e2dc" stroke="#d4d3ce" stroke-width="0.8"/>
<rect x="97.9" y="-287.6" width="6.8" height="13.6" fill="#e3e2dc" stroke="#d4d3ce" stroke-width="0.8"/>
<rect x="106.1" y="-287.9" width="6.9" height="13.9" fill="#e3e2dc" stroke="#d4d3ce" stroke-width="0.8"/>
<rect x="122.5" y="-326.0" width="10.7" height="21.5" fill="#e3e2dc" stroke="#d4d3ce" stroke-width="0.8"/>
<rect x="134.7" y="-326.0" width="11.2" height="18.4" fill="#e3e2dc" stroke="#d4d3ce" stroke-width="0.8"/>
<rect x="148.6" y="-326.0" width="12.8" height="20.6" fill="#e3e2dc" stroke="#d4d3ce" stroke-width="0.8"/>
<rect x="162.5" y="-326.0" width="9.0" height="12.1" fill="#e3e2dc" stroke="#d4d3ce" stroke-width="0.8"/>
<rect x="121.3" y="-286.8" width="7.1" height="12.8" fill="#e3e2dc" stroke="#d4d3ce" stroke-width="0.8"/>
<rect x="128.5" y="-286.7" width="5.0" height="12.7" fill="#e3e2dc" stroke="#d4d3ce" stroke-width="0.8"/>
<rect x="134.6" y="-294.6" width="5.3" height="20.6" fill="#e3e2dc" stroke="#d4d3ce" stroke-width="0.8"/>
<rect x="140.3" y="-288.8" width="7.5" height="14.8" fill="#e3e2dc" stroke="#d4d3ce" stroke-width="0.8"/>
<rect x="148.2" y="-295.9" width="13.5" height="21.9" fill="#e3e2dc" stroke="#d4d3ce" stroke-width="0.8"/>
<rect x="163.1" y="-286.1" width="5.9" height="12.1" fill="#e3e2dc" stroke="#d4d3ce" stroke-width="0.8"/>
<rect x="193.5" y="-326.0" width="6.5" height="17.0" fill="#e3e2dc" stroke="#d4d3ce" stroke-width="0.8"/>
<rect x="201.6" y="-326.0" width="14.8" height="20.5" fill="#e3e2dc" stroke="#d4d3ce" stroke-width="0.8"/>
<rect x="217.1" y="-326.0" width="8.7" height="12.8" fill="#e3e2dc" stroke="#d4d3ce" stroke-width="0.8"/>
<rect x="227.4" y="-326.0" width="12.8" height="14.6" fill="#e3e2dc" stroke="#d4d3ce" stroke-width="0.8"/>
<rect x="185.9" y="-293.9" width="13.5" height="19.9" fill="#e3e2dc" stroke="#d4d3ce" stroke-width="0.8"/>
<rect x="201.7" y="-290.7" width="7.3" height="16.7" fill="#e3e2dc" stroke="#d4d3ce" stroke-width="0.8"/>
<rect x="209.0" y="-288.1" width="5.3" height="14.1" fill="#e3e2dc" stroke="#d4d3ce" stroke-width="0.8"/>
<rect x="233.9" y="-289.0" width="7.1" height="15.0" fill="#e3e2dc" stroke="#d4d3ce" stroke-width="0.8"/>
<rect x="259.4" y="-326.0" width="9.8" height="18.2" fill="#e3e2dc" stroke="#d4d3ce" stroke-width="0.8"/>
<rect x="269.4" y="-326.0" width="11.6" height="21.0" fill="#e3e2dc" stroke="#d4d3ce" stroke-width="0.8"/>
<rect x="283.3" y="-326.0" width="9.8" height="13.0" fill="#e3e2dc" stroke="#d4d3ce" stroke-width="0.8"/>
<rect x="294.0" y="-326.0" width="13.0" height="21.7" fill="#e3e2dc" stroke="#d4d3ce" stroke-width="0.8"/>
<rect x="308.2" y="-326.0" width="9.8" height="19.0" fill="#e3e2dc" stroke="#d4d3ce" stroke-width="0.8"/>
<rect x="249.6" y="-293.9" width="14.0" height="19.9" fill="#e3e2dc" stroke="#d4d3ce" stroke-width="0.8"/>
<rect x="266.1" y="-292.2" width="14.8" height="18.2" fill="#e3e2dc" stroke="#d4d3ce" stroke-width="0.8"/>
<rect x="290.8" y="-295.3" width="10.3" height="21.3" fill="#e3e2dc" stroke="#d4d3ce" stroke-width="0.8"/>
<rect x="303.7" y="-287.3" width="13.3" height="13.3" fill="#e3e2dc" stroke="#d4d3ce" stroke-width="0.8"/>
<rect x="327.0" y="-326.0" width="10.9" height="13.9" fill="#e3e2dc" stroke="#d4d3ce" stroke-width="0.8"/>
<rect x="338.2" y="-326.0" width="14.1" height="14.9" fill="#e3e2dc" stroke="#d4d3ce" stroke-width="0.8"/>
<rect x="369.6" y="-326.0" width="10.3" height="16.8" fill="#e3e2dc" stroke="#d4d3ce" stroke-width="0.8"/>
<rect x="326.7" y="-293.8" width="5.0" height="19.8" fill="#e3e2dc" stroke="#d4d3ce" stroke-width="0.8"/>
<rect x="333.2" y="-291.1" width="12.3" height="17.1" fill="#e3e2dc" stroke="#d4d3ce" stroke-width="0.8"/>
<rect x="347.0" y="-293.6" width="10.6" height="19.6" fill="#e3e2dc" stroke="#d4d3ce" stroke-width="0.8"/>
<rect x="359.2" y="-288.0" width="7.5" height="14.0" fill="#e3e2dc" stroke="#d4d3ce" stroke-width="0.8"/>
<rect x="380.2" y="-290.6" width="5.8" height="16.6" fill="#e3e2dc" stroke="#d4d3ce" stroke-width="0.8"/>
<rect x="516.3" y="-326.0" width="5.7" height="12.0" fill="#e3e2dc" stroke="#d4d3ce" stroke-width="0.8"/>
<rect x="475.8" y="-294.4" width="5.8" height="20.4" fill="#e3e2dc" stroke="#d4d3ce" stroke-width="0.8"/>
<rect x="505.0" y="-286.8" width="6.1" height="12.8" fill="#e3e2dc" stroke="#d4d3ce" stroke-width="0.8"/>
<rect x="532.0" y="-326.0" width="6.8" height="14.8" fill="#e3e2dc" stroke="#d4d3ce" stroke-width="0.8"/>
<rect x="545.3" y="-326.0" width="9.7" height="21.3" fill="#e3e2dc" stroke="#d4d3ce" stroke-width="0.8"/>
<rect x="531.4" y="-286.4" width="5.5" height="12.4" fill="#e3e2dc" stroke="#d4d3ce" stroke-width="0.8"/>
<rect x="539.2" y="-286.8" width="7.6" height="12.8" fill="#e3e2dc" stroke="#d4d3ce" stroke-width="0.8"/>
<rect x="629.4" y="-326.0" width="9.0" height="11.5" fill="#e3e2dc" stroke="#d4d3ce" stroke-width="0.8"/>
<rect x="706.6" y="-326.0" width="9.4" height="16.4" fill="#e3e2dc" stroke="#d4d3ce" stroke-width="0.8"/>
<rect x="667.2" y="-287.8" width="12.4" height="13.8" fill="#e3e2dc" stroke="#d4d3ce" stroke-width="0.8"/>
<rect x="-35.4" y="-266.0" width="7.5" height="19.2" fill="#e3e2dc" stroke="#d4d3ce" stroke-width="0.8"/>
<rect x="-26.2" y="-266.0" width="5.1" height="11.7" fill="#e3e2dc" stroke="#d4d3ce" stroke-width="0.8"/>
<rect x="-19.0" y="-266.0" width="11.9" height="18.4" fill="#e3e2dc" stroke="#d4d3ce" stroke-width="0.8"/>
<rect x="-5.6" y="-266.0" width="9.6" height="16.1" fill="#e3e2dc" stroke="#d4d3ce" stroke-width="0.8"/>
<rect x="33.1" y="-266.0" width="10.8" height="12.6" fill="#e3e2dc" stroke="#d4d3ce" stroke-width="0.8"/>
<rect x="-20.2" y="-232.9" width="7.3" height="20.9" fill="#e3e2dc" stroke="#d4d3ce" stroke-width="0.8"/>
<rect x="-12.8" y="-228.4" width="5.0" height="16.4" fill="#e3e2dc" stroke="#d4d3ce" stroke-width="0.8"/>
<rect x="-6.8" y="-226.8" width="6.4" height="14.8" fill="#e3e2dc" stroke="#d4d3ce" stroke-width="0.8"/>
<rect x="2.1" y="-231.3" width="5.0" height="19.3" fill="#e3e2dc" stroke="#d4d3ce" stroke-width="0.8"/>
<rect x="33.1" y="-227.7" width="8.6" height="15.7" fill="#e3e2dc" stroke="#d4d3ce" stroke-width="0.8"/>
<rect x="68.5" y="-266.0" width="7.7" height="16.6" fill="#e3e2dc" stroke="#d4d3ce" stroke-width="0.8"/>
<rect x="77.3" y="-266.0" width="14.6" height="20.7" fill="#e3e2dc" stroke="#d4d3ce" stroke-width="0.8"/>
<rect x="93.7" y="-266.0" width="14.1" height="21.3" fill="#e3e2dc" stroke="#d4d3ce" stroke-width="0.8"/>
<rect x="54.2" y="-228.0" width="12.3" height="16.0" fill="#e3e2dc" stroke="#d4d3ce" stroke-width="0.8"/>
<rect x="76.7" y="-226.8" width="9.7" height="14.8" fill="#e3e2dc" stroke="#d4d3ce" stroke-width="0.8"/>
<rect x="88.6" y="-225.9" width="14.8" height="13.9" fill="#e3e2dc" stroke="#d4d3ce" stroke-width="0.8"/>
<rect x="104.3" y="-227.3" width="8.7" height="15.3" fill="#e3e2dc" stroke="#d4d3ce" stroke-width="0.8"/>
<rect x="121.8" y="-266.0" width="14.1" height="16.5" fill="#e3e2dc" stroke="#d4d3ce" stroke-width="0.8"/>
<rect x="138.6" y="-266.0" width="15.0" height="15.9" fill="#e3e2dc" stroke="#d4d3ce" stroke-width="0.8"/>
<rect x="154.2" y="-266.0" width="5.9" height="14.8" fill="#e3e2dc" stroke="#d4d3ce" stroke-width="0.8"/>
<rect x="122.7" y="-228.8" width="9.1" height="16.8" fill="#e3e2dc" stroke="#d4d3ce" stroke-width="0.8"/>
<rect x="149.5" y="-225.7" width="7.7" height="13.7" fill="#e3e2dc" stroke="#d4d3ce" stroke-width="0.8"/>
<rect x="182.1" y="-266.0" width="12.1" height="20.9" fill="#e3e2dc" stroke="#d4d3ce" stroke-width="0.8"/>
<rect x="203.5" y="-266.0" width="13.6" height="21.7" fill="#e3e2dc" stroke="#d4d3ce" stroke-width="0.8"/>
<rect x="217.3" y="-266.0" width="6.5" height="16.7" fill="#e3e2dc" stroke="#d4d3ce" stroke-width="0.8"/>
<rect x="226.7" y="-266.0" width="12.2" height="18.1" fill="#e3e2dc" stroke="#d4d3ce" stroke-width="0.8"/>
<rect x="184.2" y="-231.6" width="5.4" height="19.6" fill="#e3e2dc" stroke="#d4d3ce" stroke-width="0.8"/>
<rect x="192.4" y="-226.3" width="11.5" height="14.3" fill="#e3e2dc" stroke="#d4d3ce" stroke-width="0.8"/>
<rect x="204.6" y="-230.7" width="11.4" height="18.7" fill="#e3e2dc" stroke="#d4d3ce" stroke-width="0.8"/>
<rect x="216.1" y="-229.4" width="10.2" height="17.4" fill="#e3e2dc" stroke="#d4d3ce" stroke-width="0.8"/>
<rect x="227.1" y="-223.1" width="11.0" height="11.1" fill="#e3e2dc" stroke="#d4d3ce" stroke-width="0.8"/>
<rect x="252.8" y="-266.0" width="11.4" height="20.7" fill="#e3e2dc" stroke="#d4d3ce" stroke-width="0.8"/>
<rect x="265.0" y="-266.0" width="7.5" height="21.6" fill="#e3e2dc" stroke="#d4d3ce" stroke-width="0.8"/>
<rect x="273.4" y="-266.0" width="5.2" height="16.5" fill="#e3e2dc" stroke="#d4d3ce" stroke-width="0.8"/>
<rect x="288.1" y="-266.0" width="5.3" height="14.7" fill="#e3e2dc" stroke="#d4d3ce" stroke-width="0.8"/>
<rect x="295.5" y="-266.0" width="7.0" height="19.8" fill="#e3e2dc" stroke="#d4d3ce" stroke-width="0.8"/>
<rect x="304.0" y="-266.0" width="7.1" height="21.7" fill="#e3e2dc" stroke="#d4d3ce" stroke-width="0.8"/>
<rect x="249.9" y="-231.4" width="7.2" height="19.4" fill="#e3e2dc" stroke="#d4d3ce" stroke-width="0.8"/>
<rect x="260.0" y="-225.1" width="10.0" height="13.1" fill="#e3e2dc" stroke="#d4d3ce" stroke-width="0.8"/>
<rect x="271.2" y="-233.4" width="11.7" height="21.4" fill="#e3e2dc" stroke="#d4d3ce" stroke-width="0.8"/>
<rect x="284.0" y="-233.7" width="7.1" height="21.7" fill="#e3e2dc" stroke="#d4d3ce" stroke-width="0.8"/>
<rect x="312.9" y="-233.3" width="5.1" height="21.3" fill="#e3e2dc" stroke="#d4d3ce" stroke-width="0.8"/>
<rect x="328.7" y="-266.0" width="8.8" height="15.1" fill="#e3e2dc" stroke="#d4d3ce" stroke-width="0.8"/>
<rect x="338.0" y="-266.0" width="5.0" height="14.1" fill="#e3e2dc" stroke="#d4d3ce" stroke-width="0.8"/>
<rect x="345.8" y="-266.0" width="6.2" height="21.6" fill="#e3e2dc" stroke="#d4d3ce" stroke-width="0.8"/>
<rect x="353.2" y="-266.0" width="13.2" height="20.0" fill="#e3e2dc" stroke="#d4d3ce" stroke-width="0.8"/>
<rect x="376.8" y="-266.0" width="8.6" height="20.9" fill="#e3e2dc" stroke="#d4d3ce" stroke-width="0.8"/>
<rect x="329.2" y="-223.4" width="12.7" height="11.4" fill="#e3e2dc" stroke="#d4d3ce" stroke-width="0.8"/>
<rect x="342.1" y="-225.8" width="14.2" height="13.8" fill="#e3e2dc" stroke="#d4d3ce" stroke-width="0.8"/>
<rect x="369.2" y="-230.9" width="7.6" height="18.9" fill="#e3e2dc" stroke="#d4d3ce" stroke-width="0.8"/>
<rect x="486.0" y="-233.1" width="13.4" height="21.1" fill="#e3e2dc" stroke="#d4d3ce" stroke-width="0.8"/>
<rect x="531.0" y="-266.0" width="12.8" height="21.4" fill="#e3e2dc" stroke="#d4d3ce" stroke-width="0.8"/>
<rect x="702.5" y="-266.0" width="5.4" height="20.2" fill="#e3e2dc" stroke="#d4d3ce" stroke-width="0.8"/>
<rect x="-34.0" y="-204.0" width="5.5" height="11.7" fill="#e3e2dc" stroke="#d4d3ce" stroke-width="0.8"/>
<rect x="-2.4" y="-204.0" width="14.6" height="14.8" fill="#e3e2dc" stroke="#d4d3ce" stroke-width="0.8"/>
<rect x="14.6" y="-204.0" width="14.3" height="8.3" fill="#e3e2dc" stroke="#d4d3ce" stroke-width="0.8"/>
<rect x="31.1" y="-204.0" width="6.6" height="14.7" fill="#e3e2dc" stroke="#d4d3ce" stroke-width="0.8"/>
<rect x="-34.9" y="-179.2" width="10.1" height="10.2" fill="#e3e2dc" stroke="#d4d3ce" stroke-width="0.8"/>
<rect x="-24.3" y="-184.0" width="6.6" height="15.0" fill="#e3e2dc" stroke="#d4d3ce" stroke-width="0.8"/>
<rect x="-15.0" y="-182.8" width="6.7" height="13.8" fill="#e3e2dc" stroke="#d4d3ce" stroke-width="0.8"/>
<rect x="6.3" y="-183.6" width="10.8" height="14.6" fill="#e3e2dc" stroke="#d4d3ce" stroke-width="0.8"/>
<rect x="20.0" y="-179.8" width="11.3" height="10.8" fill="#e3e2dc" stroke="#d4d3ce" stroke-width="0.8"/>
<rect x="32.1" y="-181.2" width="13.9" height="12.2" fill="#e3e2dc" stroke="#d4d3ce" stroke-width="0.8"/>
<rect x="55.8" y="-204.0" width="6.8" height="13.5" fill="#e3e2dc" stroke="#d4d3ce" stroke-width="0.8"/>
<rect x="74.3" y="-204.0" width="11.6" height="10.2" fill="#e3e2dc" stroke="#d4d3ce" stroke-width="0.8"/>
<rect x="86.0" y="-204.0" width="6.5" height="12.5" fill="#e3e2dc" stroke="#d4d3ce" stroke-width="0.8"/>
<rect x="94.1" y="-204.0" width="14.0" height="8.8" fill="#e3e2dc" stroke="#d4d3ce" stroke-width="0.8"/>
<rect x="54.1" y="-179.5" width="5.0" height="10.5" fill="#e3e2dc" stroke="#d4d3ce" stroke-width="0.8"/>
<rect x="60.2" y="-181.3" width="7.2" height="12.3" fill="#e3e2dc" stroke="#d4d3ce" stroke-width="0.8"/>
<rect x="68.0" y="-180.4" width="11.2" height="11.4" fill="#e3e2dc" stroke="#d4d3ce" stroke-width="0.8"/>
<rect x="82.1" y="-177.9" width="7.4" height="8.9" fill="#e3e2dc" stroke="#d4d3ce" stroke-width="0.8"/>
<rect x="91.4" y="-182.8" width="13.7" height="13.8" fill="#e3e2dc" stroke="#d4d3ce" stroke-width="0.8"/>
<rect x="105.9" y="-181.7" width="5.1" height="12.7" fill="#e3e2dc" stroke="#d4d3ce" stroke-width="0.8"/>
<rect x="123.6" y="-204.0" width="9.4" height="15.0" fill="#e3e2dc" stroke="#d4d3ce" stroke-width="0.8"/>
<rect x="133.8" y="-204.0" width="14.0" height="8.1" fill="#e3e2dc" stroke="#d4d3ce" stroke-width="0.8"/>
<rect x="149.0" y="-204.0" width="7.4" height="8.2" fill="#e3e2dc" stroke="#d4d3ce" stroke-width="0.8"/>
<rect x="156.4" y="-204.0" width="10.5" height="15.0" fill="#e3e2dc" stroke="#d4d3ce" stroke-width="0.8"/>
<rect x="167.5" y="-204.0" width="6.5" height="11.7" fill="#e3e2dc" stroke="#d4d3ce" stroke-width="0.8"/>
<rect x="121.7" y="-179.1" width="8.1" height="10.1" fill="#e3e2dc" stroke="#d4d3ce" stroke-width="0.8"/>
<rect x="132.5" y="-182.3" width="12.8" height="13.3" fill="#e3e2dc" stroke="#d4d3ce" stroke-width="0.8"/>
<rect x="147.8" y="-180.4" width="12.5" height="11.4" fill="#e3e2dc" stroke="#d4d3ce" stroke-width="0.8"/>
<rect x="161.6" y="-177.6" width="7.3" height="8.6" fill="#e3e2dc" stroke="#d4d3ce" stroke-width="0.8"/>
<rect x="183.3" y="-204.0" width="12.5" height="13.1" fill="#e3e2dc" stroke="#d4d3ce" stroke-width="0.8"/>
<rect x="198.0" y="-204.0" width="7.7" height="12.0" fill="#e3e2dc" stroke="#d4d3ce" stroke-width="0.8"/>
<rect x="208.0" y="-204.0" width="10.2" height="9.8" fill="#e3e2dc" stroke="#d4d3ce" stroke-width="0.8"/>
<rect x="221.1" y="-204.0" width="7.2" height="14.6" fill="#e3e2dc" stroke="#d4d3ce" stroke-width="0.8"/>
<rect x="183.3" y="-179.3" width="13.8" height="10.3" fill="#e3e2dc" stroke="#d4d3ce" stroke-width="0.8"/>
<rect x="199.8" y="-182.1" width="11.3" height="13.1" fill="#e3e2dc" stroke="#d4d3ce" stroke-width="0.8"/>
<rect x="214.1" y="-183.3" width="9.7" height="14.3" fill="#e3e2dc" stroke="#d4d3ce" stroke-width="0.8"/>
<rect x="226.3" y="-182.4" width="9.4" height="13.4" fill="#e3e2dc" stroke="#d4d3ce" stroke-width="0.8"/>
<rect x="267.8" y="-204.0" width="6.4" height="8.0" fill="#e3e2dc" stroke="#d4d3ce" stroke-width="0.8"/>
<rect x="276.3" y="-204.0" width="11.3" height="13.2" fill="#e3e2dc" stroke="#d4d3ce" stroke-width="0.8"/>
<rect x="287.8" y="-204.0" width="10.9" height="10.6" fill="#e3e2dc" stroke="#d4d3ce" stroke-width="0.8"/>
<rect x="252.8" y="-178.3" width="6.1" height="9.3" fill="#e3e2dc" stroke="#d4d3ce" stroke-width="0.8"/>
<rect x="259.0" y="-183.0" width="13.5" height="14.0" fill="#e3e2dc" stroke="#d4d3ce" stroke-width="0.8"/>
<rect x="274.9" y="-179.0" width="11.3" height="10.0" fill="#e3e2dc" stroke="#d4d3ce" stroke-width="0.8"/>
<rect x="286.5" y="-178.3" width="12.6" height="9.3" fill="#e3e2dc" stroke="#d4d3ce" stroke-width="0.8"/>
<rect x="300.4" y="-178.7" width="5.2" height="9.7" fill="#e3e2dc" stroke="#d4d3ce" stroke-width="0.8"/>
<rect x="329.4" y="-204.0" width="11.2" height="8.0" fill="#e3e2dc" stroke="#d4d3ce" stroke-width="0.8"/>
<rect x="341.9" y="-204.0" width="12.7" height="10.4" fill="#e3e2dc" stroke="#d4d3ce" stroke-width="0.8"/>
<rect x="356.2" y="-204.0" width="7.2" height="14.4" fill="#e3e2dc" stroke="#d4d3ce" stroke-width="0.8"/>
<rect x="365.9" y="-204.0" width="6.7" height="7.8" fill="#e3e2dc" stroke="#d4d3ce" stroke-width="0.8"/>
<rect x="374.9" y="-204.0" width="11.1" height="7.8" fill="#e3e2dc" stroke="#d4d3ce" stroke-width="0.8"/>
<rect x="329.2" y="-180.6" width="6.8" height="11.6" fill="#e3e2dc" stroke="#d4d3ce" stroke-width="0.8"/>
<rect x="338.5" y="-184.1" width="7.6" height="15.1" fill="#e3e2dc" stroke="#d4d3ce" stroke-width="0.8"/>
<rect x="346.8" y="-180.6" width="12.0" height="11.6" fill="#e3e2dc" stroke="#d4d3ce" stroke-width="0.8"/>
<rect x="360.7" y="-182.9" width="5.8" height="13.9" fill="#e3e2dc" stroke="#d4d3ce" stroke-width="0.8"/>
<rect x="368.9" y="-179.5" width="11.3" height="10.5" fill="#e3e2dc" stroke="#d4d3ce" stroke-width="0.8"/>
<rect x="397.6" y="-204.0" width="5.9" height="14.6" fill="#e3e2dc" stroke="#d4d3ce" stroke-width="0.8"/>
<rect x="431.1" y="-182.4" width="14.8" height="13.4" fill="#e3e2dc" stroke="#d4d3ce" stroke-width="0.8"/>
<rect x="478.6" y="-204.0" width="7.1" height="10.8" fill="#e3e2dc" stroke="#d4d3ce" stroke-width="0.8"/>
<rect x="576.5" y="-179.8" width="7.7" height="10.8" fill="#e3e2dc" stroke="#d4d3ce" stroke-width="0.8"/>
<rect x="-34.2" y="-161.0" width="13.8" height="10.9" fill="#e3e2dc" stroke="#d4d3ce" stroke-width="0.8"/>
<rect x="-19.7" y="-161.0" width="6.4" height="10.5" fill="#e3e2dc" stroke="#d4d3ce" stroke-width="0.8"/>
<rect x="-11.9" y="-161.0" width="6.4" height="10.4" fill="#e3e2dc" stroke="#d4d3ce" stroke-width="0.8"/>
<rect x="-3.9" y="-161.0" width="13.6" height="7.0" fill="#e3e2dc" stroke="#d4d3ce" stroke-width="0.8"/>
<rect x="11.2" y="-161.0" width="10.6" height="11.7" fill="#e3e2dc" stroke="#d4d3ce" stroke-width="0.8"/>
<rect x="22.9" y="-161.0" width="9.2" height="13.7" fill="#e3e2dc" stroke="#d4d3ce" stroke-width="0.8"/>
<rect x="34.0" y="-161.0" width="11.4" height="7.2" fill="#e3e2dc" stroke="#d4d3ce" stroke-width="0.8"/>
<rect x="-32.3" y="-142.9" width="8.3" height="13.9" fill="#e3e2dc" stroke="#d4d3ce" stroke-width="0.8"/>
<rect x="-22.5" y="-136.2" width="14.0" height="7.2" fill="#e3e2dc" stroke="#d4d3ce" stroke-width="0.8"/>
<rect x="-6.7" y="-142.0" width="8.4" height="13.0" fill="#e3e2dc" stroke="#d4d3ce" stroke-width="0.8"/>
<rect x="3.1" y="-141.4" width="10.3" height="12.4" fill="#e3e2dc" stroke="#d4d3ce" stroke-width="0.8"/>
<rect x="14.7" y="-139.9" width="9.2" height="10.9" fill="#e3e2dc" stroke="#d4d3ce" stroke-width="0.8"/>
<rect x="24.8" y="-138.8" width="13.3" height="9.8" fill="#e3e2dc" stroke="#d4d3ce" stroke-width="0.8"/>
<rect x="38.9" y="-142.8" width="7.1" height="13.8" fill="#e3e2dc" stroke="#d4d3ce" stroke-width="0.8"/>
<rect x="55.3" y="-161.0" width="8.2" height="9.1" fill="#e3e2dc" stroke="#d4d3ce" stroke-width="0.8"/>
<rect x="65.4" y="-161.0" width="12.8" height="7.3" fill="#e3e2dc" stroke="#d4d3ce" stroke-width="0.8"/>
<rect x="80.9" y="-161.0" width="10.5" height="7.3" fill="#e3e2dc" stroke="#d4d3ce" stroke-width="0.8"/>
<rect x="91.4" y="-161.0" width="6.9" height="13.5" fill="#e3e2dc" stroke="#d4d3ce" stroke-width="0.8"/>
<rect x="100.2" y="-161.0" width="12.8" height="13.4" fill="#e3e2dc" stroke="#d4d3ce" stroke-width="0.8"/>
<rect x="56.5" y="-140.2" width="12.0" height="11.2" fill="#e3e2dc" stroke="#d4d3ce" stroke-width="0.8"/>
<rect x="69.1" y="-139.2" width="11.7" height="10.2" fill="#e3e2dc" stroke="#d4d3ce" stroke-width="0.8"/>
<rect x="81.1" y="-136.3" width="6.8" height="7.3" fill="#e3e2dc" stroke="#d4d3ce" stroke-width="0.8"/>
<rect x="90.6" y="-138.6" width="11.6" height="9.6" fill="#e3e2dc" stroke="#d4d3ce" stroke-width="0.8"/>
<rect x="104.6" y="-137.8" width="8.4" height="8.8" fill="#e3e2dc" stroke="#d4d3ce" stroke-width="0.8"/>
<rect x="131.7" y="-161.0" width="10.7" height="7.3" fill="#e3e2dc" stroke="#d4d3ce" stroke-width="0.8"/>
<rect x="144.9" y="-161.0" width="10.8" height="13.4" fill="#e3e2dc" stroke="#d4d3ce" stroke-width="0.8"/>
<rect x="167.5" y="-161.0" width="6.5" height="9.9" fill="#e3e2dc" stroke="#d4d3ce" stroke-width="0.8"/>
<rect x="121.8" y="-136.1" width="6.5" height="7.1" fill="#e3e2dc" stroke="#d4d3ce" stroke-width="0.8"/>
<rect x="130.4" y="-142.8" width="6.2" height="13.8" fill="#e3e2dc" stroke="#d4d3ce" stroke-width="0.8"/>
<rect x="139.2" y="-136.1" width="6.3" height="7.1" fill="#e3e2dc" stroke="#d4d3ce" stroke-width="0.8"/>
<rect x="146.3" y="-137.3" width="12.3" height="8.3" fill="#e3e2dc" stroke="#d4d3ce" stroke-width="0.8"/>
<rect x="160.9" y="-142.0" width="12.1" height="13.0" fill="#e3e2dc" stroke="#d4d3ce" stroke-width="0.8"/>
<rect x="197.4" y="-161.0" width="14.6" height="12.0" fill="#e3e2dc" stroke="#d4d3ce" stroke-width="0.8"/>
<rect x="212.1" y="-161.0" width="11.5" height="12.7" fill="#e3e2dc" stroke="#d4d3ce" stroke-width="0.8"/>
<rect x="182.2" y="-140.0" width="8.7" height="11.0" fill="#e3e2dc" stroke="#d4d3ce" stroke-width="0.8"/>
<rect x="192.9" y="-141.6" width="6.4" height="12.6" fill="#e3e2dc" stroke="#d4d3ce" stroke-width="0.8"/>
<rect x="201.3" y="-138.9" width="11.3" height="9.9" fill="#e3e2dc" stroke="#d4d3ce" stroke-width="0.8"/>
<rect x="215.0" y="-141.5" width="14.4" height="12.5" fill="#e3e2dc" stroke="#d4d3ce" stroke-width="0.8"/>
<rect x="230.3" y="-142.8" width="5.6" height="13.8" fill="#e3e2dc" stroke="#d4d3ce" stroke-width="0.8"/>
<rect x="250.3" y="-161.0" width="11.1" height="13.8" fill="#e3e2dc" stroke="#d4d3ce" stroke-width="0.8"/>
<rect x="286.7" y="-161.0" width="7.8" height="7.0" fill="#e3e2dc" stroke="#d4d3ce" stroke-width="0.8"/>
<rect x="250.1" y="-141.6" width="13.5" height="12.6" fill="#e3e2dc" stroke="#d4d3ce" stroke-width="0.8"/>
<rect x="266.3" y="-136.6" width="8.5" height="7.6" fill="#e3e2dc" stroke="#d4d3ce" stroke-width="0.8"/>
<rect x="284.9" y="-140.7" width="11.1" height="11.7" fill="#e3e2dc" stroke="#d4d3ce" stroke-width="0.8"/>
<rect x="296.6" y="-141.3" width="7.5" height="12.3" fill="#e3e2dc" stroke="#d4d3ce" stroke-width="0.8"/>
<rect x="305.5" y="-141.6" width="5.9" height="12.6" fill="#e3e2dc" stroke="#d4d3ce" stroke-width="0.8"/>
<rect x="327.9" y="-161.0" width="10.9" height="8.3" fill="#e3e2dc" stroke="#d4d3ce" stroke-width="0.8"/>
<rect x="339.3" y="-161.0" width="12.0" height="9.5" fill="#e3e2dc" stroke="#d4d3ce" stroke-width="0.8"/>
<rect x="352.6" y="-161.0" width="10.2" height="8.0" fill="#e3e2dc" stroke="#d4d3ce" stroke-width="0.8"/>
<rect x="365.7" y="-161.0" width="8.7" height="7.7" fill="#e3e2dc" stroke="#d4d3ce" stroke-width="0.8"/>
<rect x="376.8" y="-161.0" width="6.6" height="11.2" fill="#e3e2dc" stroke="#d4d3ce" stroke-width="0.8"/>
<rect x="332.9" y="-137.8" width="10.7" height="8.8" fill="#e3e2dc" stroke="#d4d3ce" stroke-width="0.8"/>
<rect x="344.8" y="-141.4" width="14.5" height="12.4" fill="#e3e2dc" stroke="#d4d3ce" stroke-width="0.8"/>
<rect x="362.2" y="-136.3" width="7.5" height="7.3" fill="#e3e2dc" stroke="#d4d3ce" stroke-width="0.8"/>
<rect x="370.3" y="-136.4" width="5.8" height="7.4" fill="#e3e2dc" stroke="#d4d3ce" stroke-width="0.8"/>
<rect x="430.6" y="-161.0" width="14.9" height="8.6" fill="#e3e2dc" stroke="#d4d3ce" stroke-width="0.8"/>
<rect x="500.1" y="-142.9" width="6.1" height="13.9" fill="#e3e2dc" stroke="#d4d3ce" stroke-width="0.8"/>
<rect x="596.8" y="-141.3" width="8.8" height="12.3" fill="#e3e2dc" stroke="#d4d3ce" stroke-width="0.8"/>
<rect x="697.8" y="-141.9" width="13.2" height="12.9" fill="#e3e2dc" stroke="#d4d3ce" stroke-width="0.8"/>
<rect x="-32.2" y="-121.0" width="14.3" height="13.7" fill="#e3e2dc" stroke="#d4d3ce" stroke-width="0.8"/>
<rect x="-15.9" y="-121.0" width="8.6" height="16.8" fill="#e3e2dc" stroke="#d4d3ce" stroke-width="0.8"/>
<rect x="-6.0" y="-121.0" width="10.0" height="11.2" fill="#e3e2dc" stroke="#d4d3ce" stroke-width="0.8"/>
<rect x="7.0" y="-121.0" width="12.8" height="21.3" fill="#e3e2dc" stroke="#d4d3ce" stroke-width="0.8"/>
<rect x="22.2" y="-121.0" width="13.8" height="20.7" fill="#e3e2dc" stroke="#d4d3ce" stroke-width="0.8"/>
<rect x="37.9" y="-121.0" width="7.7" height="18.5" fill="#e3e2dc" stroke="#d4d3ce" stroke-width="0.8"/>
<rect x="-32.3" y="-85.8" width="11.2" height="13.8" fill="#e3e2dc" stroke="#d4d3ce" stroke-width="0.8"/>
<rect x="-19.8" y="-86.2" width="14.5" height="14.2" fill="#e3e2dc" stroke="#d4d3ce" stroke-width="0.8"/>
<rect x="4.4" y="-88.1" width="7.7" height="16.1" fill="#e3e2dc" stroke="#d4d3ce" stroke-width="0.8"/>
<rect x="12.5" y="-84.4" width="6.2" height="12.4" fill="#e3e2dc" stroke="#d4d3ce" stroke-width="0.8"/>
<rect x="20.0" y="-85.7" width="7.9" height="13.7" fill="#e3e2dc" stroke="#d4d3ce" stroke-width="0.8"/>
<rect x="29.5" y="-89.7" width="13.4" height="17.7" fill="#e3e2dc" stroke="#d4d3ce" stroke-width="0.8"/>
<rect x="54.8" y="-121.0" width="12.1" height="16.1" fill="#e3e2dc" stroke="#d4d3ce" stroke-width="0.8"/>
<rect x="68.7" y="-121.0" width="9.7" height="14.4" fill="#e3e2dc" stroke="#d4d3ce" stroke-width="0.8"/>
<rect x="79.1" y="-121.0" width="10.1" height="15.2" fill="#e3e2dc" stroke="#d4d3ce" stroke-width="0.8"/>
<rect x="89.3" y="-121.0" width="8.5" height="20.5" fill="#e3e2dc" stroke="#d4d3ce" stroke-width="0.8"/>
<rect x="65.0" y="-87.3" width="5.6" height="15.3" fill="#e3e2dc" stroke="#d4d3ce" stroke-width="0.8"/>
<rect x="81.1" y="-86.7" width="6.5" height="14.7" fill="#e3e2dc" stroke="#d4d3ce" stroke-width="0.8"/>
<rect x="89.7" y="-92.3" width="11.2" height="20.3" fill="#e3e2dc" stroke="#d4d3ce" stroke-width="0.8"/>
<rect x="102.4" y="-91.2" width="10.6" height="19.2" fill="#e3e2dc" stroke="#d4d3ce" stroke-width="0.8"/>
<rect x="124.1" y="-121.0" width="12.1" height="21.1" fill="#e3e2dc" stroke="#d4d3ce" stroke-width="0.8"/>
<rect x="138.8" y="-121.0" width="5.0" height="19.4" fill="#e3e2dc" stroke="#d4d3ce" stroke-width="0.8"/>
<rect x="145.4" y="-121.0" width="14.6" height="17.3" fill="#e3e2dc" stroke="#d4d3ce" stroke-width="0.8"/>
<rect x="162.4" y="-121.0" width="11.6" height="17.7" fill="#e3e2dc" stroke="#d4d3ce" stroke-width="0.8"/>
<rect x="122.8" y="-86.2" width="12.2" height="14.2" fill="#e3e2dc" stroke="#d4d3ce" stroke-width="0.8"/>
<rect x="136.7" y="-86.5" width="8.8" height="14.5" fill="#e3e2dc" stroke="#d4d3ce" stroke-width="0.8"/>
<rect x="148.1" y="-87.9" width="10.0" height="15.9" fill="#e3e2dc" stroke="#d4d3ce" stroke-width="0.8"/>
<rect x="159.0" y="-89.3" width="6.4" height="17.3" fill="#e3e2dc" stroke="#d4d3ce" stroke-width="0.8"/>
<rect x="165.7" y="-86.6" width="8.3" height="14.6" fill="#e3e2dc" stroke="#d4d3ce" stroke-width="0.8"/>
<rect x="192.9" y="-121.0" width="5.5" height="17.2" fill="#e3e2dc" stroke="#d4d3ce" stroke-width="0.8"/>
<rect x="215.4" y="-121.0" width="10.2" height="18.5" fill="#e3e2dc" stroke="#d4d3ce" stroke-width="0.8"/>
<rect x="184.1" y="-87.1" width="6.0" height="15.1" fill="#e3e2dc" stroke="#d4d3ce" stroke-width="0.8"/>
<rect x="214.4" y="-92.0" width="10.3" height="20.0" fill="#e3e2dc" stroke="#d4d3ce" stroke-width="0.8"/>
<rect x="225.7" y="-92.1" width="14.8" height="20.1" fill="#e3e2dc" stroke="#d4d3ce" stroke-width="0.8"/>
<rect x="267.1" y="-121.0" width="9.2" height="12.7" fill="#e3e2dc" stroke="#d4d3ce" stroke-width="0.8"/>
<rect x="277.9" y="-121.0" width="10.0" height="13.1" fill="#e3e2dc" stroke="#d4d3ce" stroke-width="0.8"/>
<rect x="302.8" y="-121.0" width="5.4" height="15.5" fill="#e3e2dc" stroke="#d4d3ce" stroke-width="0.8"/>
<rect x="309.1" y="-121.0" width="8.9" height="11.0" fill="#e3e2dc" stroke="#d4d3ce" stroke-width="0.8"/>
<rect x="251.3" y="-85.2" width="11.7" height="13.2" fill="#e3e2dc" stroke="#d4d3ce" stroke-width="0.8"/>
<rect x="264.7" y="-90.1" width="7.7" height="18.1" fill="#e3e2dc" stroke="#d4d3ce" stroke-width="0.8"/>
<rect x="275.3" y="-87.5" width="10.7" height="15.5" fill="#e3e2dc" stroke="#d4d3ce" stroke-width="0.8"/>
<rect x="286.6" y="-84.2" width="12.6" height="12.2" fill="#e3e2dc" stroke="#d4d3ce" stroke-width="0.8"/>
<rect x="299.7" y="-92.1" width="10.2" height="20.1" fill="#e3e2dc" stroke="#d4d3ce" stroke-width="0.8"/>
<rect x="312.3" y="-83.1" width="5.6" height="11.1" fill="#e3e2dc" stroke="#d4d3ce" stroke-width="0.8"/>
<rect x="328.9" y="-121.0" width="8.5" height="12.9" fill="#e3e2dc" stroke="#d4d3ce" stroke-width="0.8"/>
<rect x="337.7" y="-121.0" width="14.0" height="17.4" fill="#e3e2dc" stroke="#d4d3ce" stroke-width="0.8"/>
<rect x="363.7" y="-121.0" width="14.6" height="15.8" fill="#e3e2dc" stroke="#d4d3ce" stroke-width="0.8"/>
<rect x="329.6" y="-86.3" width="13.2" height="14.3" fill="#e3e2dc" stroke="#d4d3ce" stroke-width="0.8"/>
<rect x="345.6" y="-93.4" width="10.0" height="21.4" fill="#e3e2dc" stroke="#d4d3ce" stroke-width="0.8"/>
<rect x="356.8" y="-85.4" width="12.2" height="13.4" fill="#e3e2dc" stroke="#d4d3ce" stroke-width="0.8"/>
<rect x="371.6" y="-91.7" width="9.8" height="19.7" fill="#e3e2dc" stroke="#d4d3ce" stroke-width="0.8"/>
<rect x="628.8" y="-86.0" width="6.3" height="14.0" fill="#e3e2dc" stroke="#d4d3ce" stroke-width="0.8"/>
<rect x="675.2" y="-121.0" width="12.1" height="11.4" fill="#e3e2dc" stroke="#d4d3ce" stroke-width="0.8"/>
<rect x="677.2" y="-85.7" width="5.5" height="13.7" fill="#e3e2dc" stroke="#d4d3ce" stroke-width="0.8"/>
<rect x="-32.3" y="-64.0" width="11.9" height="15.6" fill="#e3e2dc" stroke="#d4d3ce" stroke-width="0.8"/>
<rect x="-18.5" y="-64.0" width="9.5" height="9.5" fill="#e3e2dc" stroke="#d4d3ce" stroke-width="0.8"/>
<rect x="-7.7" y="-64.0" width="10.1" height="17.4" fill="#e3e2dc" stroke="#d4d3ce" stroke-width="0.8"/>
<rect x="4.7" y="-64.0" width="5.4" height="15.3" fill="#e3e2dc" stroke="#d4d3ce" stroke-width="0.8"/>
<rect x="11.0" y="-64.0" width="10.5" height="17.7" fill="#e3e2dc" stroke="#d4d3ce" stroke-width="0.8"/>
<rect x="23.1" y="-64.0" width="7.5" height="9.5" fill="#e3e2dc" stroke="#d4d3ce" stroke-width="0.8"/>
<rect x="31.8" y="-64.0" width="7.0" height="11.8" fill="#e3e2dc" stroke="#d4d3ce" stroke-width="0.8"/>
<rect x="40.9" y="-64.0" width="5.1" height="11.1" fill="#e3e2dc" stroke="#d4d3ce" stroke-width="0.8"/>
<rect x="-34.2" y="-36.2" width="14.4" height="12.2" fill="#e3e2dc" stroke="#d4d3ce" stroke-width="0.8"/>
<rect x="-17.2" y="-38.1" width="6.4" height="14.1" fill="#e3e2dc" stroke="#d4d3ce" stroke-width="0.8"/>
<rect x="-8.3" y="-39.8" width="10.5" height="15.8" fill="#e3e2dc" stroke="#d4d3ce" stroke-width="0.8"/>
<rect x="4.1" y="-37.2" width="11.0" height="13.2" fill="#e3e2dc" stroke="#d4d3ce" stroke-width="0.8"/>
<rect x="17.6" y="-35.6" width="6.1" height="11.6" fill="#e3e2dc" stroke="#d4d3ce" stroke-width="0.8"/>
<rect x="24.4" y="-35.5" width="5.6" height="11.5" fill="#e3e2dc" stroke="#d4d3ce" stroke-width="0.8"/>
<rect x="32.1" y="-34.0" width="9.5" height="10.0" fill="#e3e2dc" stroke="#d4d3ce" stroke-width="0.8"/>
<rect x="55.5" y="-64.0" width="6.7" height="9.6" fill="#e3e2dc" stroke="#d4d3ce" stroke-width="0.8"/>
<rect x="65.1" y="-64.0" width="12.5" height="9.8" fill="#e3e2dc" stroke="#d4d3ce" stroke-width="0.8"/>
<rect x="80.6" y="-64.0" width="10.6" height="10.0" fill="#e3e2dc" stroke="#d4d3ce" stroke-width="0.8"/>
<rect x="92.5" y="-64.0" width="6.9" height="13.9" fill="#e3e2dc" stroke="#d4d3ce" stroke-width="0.8"/>
<rect x="55.0" y="-34.2" width="7.5" height="10.2" fill="#e3e2dc" stroke="#d4d3ce" stroke-width="0.8"/>
<rect x="64.8" y="-35.7" width="13.4" height="11.7" fill="#e3e2dc" stroke="#d4d3ce" stroke-width="0.8"/>
<rect x="80.1" y="-41.3" width="13.5" height="17.3" fill="#e3e2dc" stroke="#d4d3ce" stroke-width="0.8"/>
<rect x="95.9" y="-39.7" width="13.3" height="15.7" fill="#e3e2dc" stroke="#d4d3ce" stroke-width="0.8"/>
<rect x="124.3" y="-64.0" width="8.2" height="12.3" fill="#e3e2dc" stroke="#d4d3ce" stroke-width="0.8"/>
<rect x="133.6" y="-64.0" width="13.3" height="11.2" fill="#e3e2dc" stroke="#d4d3ce" stroke-width="0.8"/>
<rect x="148.6" y="-64.0" width="11.3" height="16.4" fill="#e3e2dc" stroke="#d4d3ce" stroke-width="0.8"/>
<rect x="162.6" y="-64.0" width="11.4" height="13.4" fill="#e3e2dc" stroke="#d4d3ce" stroke-width="0.8"/>
<rect x="122.2" y="-33.7" width="10.8" height="9.7" fill="#e3e2dc" stroke="#d4d3ce" stroke-width="0.8"/>
<rect x="133.5" y="-41.7" width="9.4" height="17.7" fill="#e3e2dc" stroke="#d4d3ce" stroke-width="0.8"/>
<rect x="143.1" y="-34.7" width="9.4" height="10.7" fill="#e3e2dc" stroke="#d4d3ce" stroke-width="0.8"/>
<rect x="152.5" y="-40.7" width="13.4" height="16.7" fill="#e3e2dc" stroke="#d4d3ce" stroke-width="0.8"/>
<rect x="167.1" y="-39.0" width="6.9" height="15.0" fill="#e3e2dc" stroke="#d4d3ce" stroke-width="0.8"/>
<rect x="183.4" y="-64.0" width="9.4" height="15.0" fill="#e3e2dc" stroke="#d4d3ce" stroke-width="0.8"/>
<rect x="195.5" y="-64.0" width="6.6" height="11.7" fill="#e3e2dc" stroke="#d4d3ce" stroke-width="0.8"/>
<rect x="203.8" y="-64.0" width="8.5" height="10.8" fill="#e3e2dc" stroke="#d4d3ce" stroke-width="0.8"/>
<rect x="225.4" y="-64.0" width="14.7" height="17.7" fill="#e3e2dc" stroke="#d4d3ce" stroke-width="0.8"/>
<rect x="182.2" y="-38.5" width="11.8" height="14.5" fill="#e3e2dc" stroke="#d4d3ce" stroke-width="0.8"/>
<rect x="195.7" y="-37.3" width="14.5" height="13.3" fill="#e3e2dc" stroke="#d4d3ce" stroke-width="0.8"/>
<rect x="211.1" y="-41.0" width="8.4" height="17.0" fill="#e3e2dc" stroke="#d4d3ce" stroke-width="0.8"/>
<rect x="220.1" y="-37.0" width="11.8" height="13.0" fill="#e3e2dc" stroke="#d4d3ce" stroke-width="0.8"/>
<rect x="233.9" y="-38.2" width="7.1" height="14.2" fill="#e3e2dc" stroke="#d4d3ce" stroke-width="0.8"/>
<rect x="251.3" y="-64.0" width="9.0" height="10.0" fill="#e3e2dc" stroke="#d4d3ce" stroke-width="0.8"/>
<rect x="274.1" y="-64.0" width="5.9" height="13.8" fill="#e3e2dc" stroke="#d4d3ce" stroke-width="0.8"/>
<rect x="281.6" y="-64.0" width="10.5" height="11.0" fill="#e3e2dc" stroke="#d4d3ce" stroke-width="0.8"/>
<rect x="292.4" y="-64.0" width="10.1" height="14.3" fill="#e3e2dc" stroke="#d4d3ce" stroke-width="0.8"/>
<rect x="311.2" y="-64.0" width="6.8" height="15.8" fill="#e3e2dc" stroke="#d4d3ce" stroke-width="0.8"/>
<rect x="251.9" y="-40.5" width="6.0" height="16.5" fill="#e3e2dc" stroke="#d4d3ce" stroke-width="0.8"/>
<rect x="258.4" y="-38.1" width="14.6" height="14.1" fill="#e3e2dc" stroke="#d4d3ce" stroke-width="0.8"/>
<rect x="273.4" y="-33.5" width="12.8" height="9.5" fill="#e3e2dc" stroke="#d4d3ce" stroke-width="0.8"/>
<rect x="287.3" y="-38.3" width="5.2" height="14.3" fill="#e3e2dc" stroke="#d4d3ce" stroke-width="0.8"/>
<rect x="326.7" y="-64.0" width="12.5" height="12.1" fill="#e3e2dc" stroke="#d4d3ce" stroke-width="0.8"/>
<rect x="341.2" y="-64.0" width="13.3" height="10.1" fill="#e3e2dc" stroke="#d4d3ce" stroke-width="0.8"/>
<rect x="356.6" y="-64.0" width="14.5" height="15.5" fill="#e3e2dc" stroke="#d4d3ce" stroke-width="0.8"/>
<rect x="372.9" y="-64.0" width="6.0" height="13.9" fill="#e3e2dc" stroke="#d4d3ce" stroke-width="0.8"/>
<rect x="379.3" y="-64.0" width="6.7" height="15.1" fill="#e3e2dc" stroke="#d4d3ce" stroke-width="0.8"/>
<rect x="327.8" y="-38.2" width="13.4" height="14.2" fill="#e3e2dc" stroke="#d4d3ce" stroke-width="0.8"/>
<rect x="341.2" y="-40.2" width="6.1" height="16.2" fill="#e3e2dc" stroke="#d4d3ce" stroke-width="0.8"/>
<rect x="349.0" y="-39.2" width="7.9" height="15.2" fill="#e3e2dc" stroke="#d4d3ce" stroke-width="0.8"/>
<rect x="357.3" y="-37.8" width="13.8" height="13.8" fill="#e3e2dc" stroke="#d4d3ce" stroke-width="0.8"/>
<rect x="373.5" y="-33.1" width="12.5" height="9.1" fill="#e3e2dc" stroke="#d4d3ce" stroke-width="0.8"/>
<rect x="532.0" y="-64.0" width="13.7" height="16.2" fill="#e3e2dc" stroke="#d4d3ce" stroke-width="0.8"/>
<rect x="546.3" y="-64.0" width="13.2" height="15.1" fill="#e3e2dc" stroke="#d4d3ce" stroke-width="0.8"/>
<rect x="560.9" y="-64.0" width="6.6" height="16.6" fill="#e3e2dc" stroke="#d4d3ce" stroke-width="0.8"/>
<rect x="570.1" y="-64.0" width="11.1" height="9.7" fill="#e3e2dc" stroke="#d4d3ce" stroke-width="0.8"/>
<rect x="533.6" y="-33.4" width="10.9" height="9.4" fill="#e3e2dc" stroke="#d4d3ce" stroke-width="0.8"/>
<rect x="545.6" y="-38.2" width="9.7" height="14.2" fill="#e3e2dc" stroke="#d4d3ce" stroke-width="0.8"/>
<rect x="556.3" y="-38.2" width="5.1" height="14.2" fill="#e3e2dc" stroke="#d4d3ce" stroke-width="0.8"/>
<rect x="561.4" y="-41.9" width="9.6" height="17.9" fill="#e3e2dc" stroke="#d4d3ce" stroke-width="0.8"/>
<rect x="571.4" y="-35.5" width="11.7" height="11.5" fill="#e3e2dc" stroke="#d4d3ce" stroke-width="0.8"/>
<rect x="608.7" y="-64.0" width="5.3" height="14.0" fill="#e3e2dc" stroke="#d4d3ce" stroke-width="0.8"/>
<rect x="616.7" y="-64.0" width="12.7" height="14.7" fill="#e3e2dc" stroke="#d4d3ce" stroke-width="0.8"/>
<rect x="596.7" y="-39.9" width="8.0" height="15.9" fill="#e3e2dc" stroke="#d4d3ce" stroke-width="0.8"/>
<rect x="606.3" y="-36.2" width="11.4" height="12.2" fill="#e3e2dc" stroke="#d4d3ce" stroke-width="0.8"/>
<rect x="618.9" y="-36.0" width="5.6" height="12.0" fill="#e3e2dc" stroke="#d4d3ce" stroke-width="0.8"/>
<rect x="627.4" y="-36.3" width="9.8" height="12.3" fill="#e3e2dc" stroke="#d4d3ce" stroke-width="0.8"/>
<rect x="638.0" y="-34.2" width="8.0" height="10.2" fill="#e3e2dc" stroke="#d4d3ce" stroke-width="0.8"/>
<rect x="655.8" y="-64.0" width="9.5" height="14.1" fill="#e3e2dc" stroke="#d4d3ce" stroke-width="0.8"/>
<rect x="665.8" y="-64.0" width="5.7" height="11.7" fill="#e3e2dc" stroke="#d4d3ce" stroke-width="0.8"/>
<rect x="673.6" y="-64.0" width="10.5" height="17.4" fill="#e3e2dc" stroke="#d4d3ce" stroke-width="0.8"/>
<rect x="686.9" y="-64.0" width="10.8" height="9.7" fill="#e3e2dc" stroke="#d4d3ce" stroke-width="0.8"/>
<rect x="699.5" y="-64.0" width="14.9" height="12.2" fill="#e3e2dc" stroke="#d4d3ce" stroke-width="0.8"/>
<rect x="664.0" y="-33.2" width="7.6" height="9.2" fill="#e3e2dc" stroke="#d4d3ce" stroke-width="0.8"/>
<rect x="672.4" y="-35.0" width="12.0" height="11.0" fill="#e3e2dc" stroke="#d4d3ce" stroke-width="0.8"/>
<rect x="685.0" y="-40.8" width="11.0" height="16.8" fill="#e3e2dc" stroke="#d4d3ce" stroke-width="0.8"/>
<rect x="696.6" y="-41.7" width="12.3" height="17.7" fill="#e3e2dc" stroke="#d4d3ce" stroke-width="0.8"/>
<rect x="709.2" y="-40.9" width="6.8" height="16.9" fill="#e3e2dc" stroke="#d4d3ce" stroke-width="0.8"/>
<rect x="-35.2" y="-16.0" width="10.4" height="8.9" fill="#e3e2dc" stroke="#d4d3ce" stroke-width="0.8"/>
<rect x="-22.1" y="-16.0" width="7.1" height="6.3" fill="#e3e2dc" stroke="#d4d3ce" stroke-width="0.8"/>
<rect x="-13.0" y="-16.0" width="9.1" height="8.0" fill="#e3e2dc" stroke="#d4d3ce" stroke-width="0.8"/>
<rect x="-3.8" y="-16.0" width="9.1" height="5.0" fill="#e3e2dc" stroke="#d4d3ce" stroke-width="0.8"/>
<rect x="6.3" y="-16.0" width="9.9" height="7.6" fill="#e3e2dc" stroke="#d4d3ce" stroke-width="0.8"/>
<rect x="17.7" y="-16.0" width="5.1" height="9.1" fill="#e3e2dc" stroke="#d4d3ce" stroke-width="0.8"/>
<rect x="25.8" y="-16.0" width="5.6" height="7.7" fill="#e3e2dc" stroke="#d4d3ce" stroke-width="0.8"/>
<rect x="32.3" y="-16.0" width="5.9" height="5.5" fill="#e3e2dc" stroke="#d4d3ce" stroke-width="0.8"/>
<rect x="40.5" y="-16.0" width="5.5" height="8.6" fill="#e3e2dc" stroke="#d4d3ce" stroke-width="0.8"/>
<rect x="-33.6" y="-0.9" width="10.5" height="7.9" fill="#e3e2dc" stroke="#d4d3ce" stroke-width="0.8"/>
<rect x="-22.1" y="1.0" width="12.4" height="6.0" fill="#e3e2dc" stroke="#d4d3ce" stroke-width="0.8"/>
<rect x="-7.4" y="0.8" width="12.8" height="6.2" fill="#e3e2dc" stroke="#d4d3ce" stroke-width="0.8"/>
<rect x="8.3" y="0.9" width="9.5" height="6.1" fill="#e3e2dc" stroke="#d4d3ce" stroke-width="0.8"/>
<rect x="20.6" y="2.2" width="6.3" height="4.8" fill="#e3e2dc" stroke="#d4d3ce" stroke-width="0.8"/>
<rect x="57.0" y="-16.0" width="5.9" height="4.9" fill="#e3e2dc" stroke="#d4d3ce" stroke-width="0.8"/>
<rect x="63.1" y="-16.0" width="10.0" height="7.4" fill="#e3e2dc" stroke="#d4d3ce" stroke-width="0.8"/>
<rect x="75.9" y="-16.0" width="8.7" height="5.5" fill="#e3e2dc" stroke="#d4d3ce" stroke-width="0.8"/>
<rect x="86.8" y="-16.0" width="14.2" height="5.5" fill="#e3e2dc" stroke="#d4d3ce" stroke-width="0.8"/>
<rect x="103.4" y="-16.0" width="7.4" height="9.4" fill="#e3e2dc" stroke="#d4d3ce" stroke-width="0.8"/>
<rect x="55.4" y="0.1" width="13.0" height="6.9" fill="#e3e2dc" stroke="#d4d3ce" stroke-width="0.8"/>
<rect x="71.1" y="-1.2" width="6.1" height="8.2" fill="#e3e2dc" stroke="#d4d3ce" stroke-width="0.8"/>
<rect x="79.1" y="-1.9" width="9.0" height="8.9" fill="#e3e2dc" stroke="#d4d3ce" stroke-width="0.8"/>
<rect x="100.8" y="1.1" width="7.2" height="5.9" fill="#e3e2dc" stroke="#d4d3ce" stroke-width="0.8"/>
<rect x="121.9" y="-16.0" width="7.0" height="8.4" fill="#e3e2dc" stroke="#d4d3ce" stroke-width="0.8"/>
<rect x="129.9" y="-16.0" width="14.9" height="5.8" fill="#e3e2dc" stroke="#d4d3ce" stroke-width="0.8"/>
<rect x="145.3" y="-16.0" width="13.6" height="8.9" fill="#e3e2dc" stroke="#d4d3ce" stroke-width="0.8"/>
<rect x="161.2" y="-16.0" width="12.8" height="6.1" fill="#e3e2dc" stroke="#d4d3ce" stroke-width="0.8"/>
<rect x="124.6" y="-1.0" width="6.6" height="8.0" fill="#e3e2dc" stroke="#d4d3ce" stroke-width="0.8"/>
<rect x="132.5" y="-1.9" width="10.8" height="8.9" fill="#e3e2dc" stroke="#d4d3ce" stroke-width="0.8"/>
<rect x="155.1" y="-2.5" width="13.6" height="9.5" fill="#e3e2dc" stroke="#d4d3ce" stroke-width="0.8"/>
<rect x="168.8" y="-2.4" width="5.2" height="9.4" fill="#e3e2dc" stroke="#d4d3ce" stroke-width="0.8"/>
<rect x="182.6" y="-16.0" width="12.4" height="5.2" fill="#e3e2dc" stroke="#d4d3ce" stroke-width="0.8"/>
<rect x="205.1" y="-16.0" width="13.8" height="9.4" fill="#e3e2dc" stroke="#d4d3ce" stroke-width="0.8"/>
<rect x="219.6" y="-16.0" width="12.9" height="8.0" fill="#e3e2dc" stroke="#d4d3ce" stroke-width="0.8"/>
<rect x="234.0" y="-16.0" width="7.0" height="6.8" fill="#e3e2dc" stroke="#d4d3ce" stroke-width="0.8"/>
<rect x="186.0" y="-1.9" width="8.2" height="8.9" fill="#e3e2dc" stroke="#d4d3ce" stroke-width="0.8"/>
<rect x="195.6" y="0.2" width="6.4" height="6.8" fill="#e3e2dc" stroke="#d4d3ce" stroke-width="0.8"/>
<rect x="204.0" y="-1.3" width="6.5" height="8.3" fill="#e3e2dc" stroke="#d4d3ce" stroke-width="0.8"/>
<rect x="229.8" y="1.4" width="7.7" height="5.6" fill="#e3e2dc" stroke="#d4d3ce" stroke-width="0.8"/>
<rect x="249.2" y="-16.0" width="10.1" height="6.7" fill="#e3e2dc" stroke="#d4d3ce" stroke-width="0.8"/>
<rect x="260.3" y="-16.0" width="5.1" height="8.0" fill="#e3e2dc" stroke="#d4d3ce" stroke-width="0.8"/>
<rect x="280.2" y="-16.0" width="12.2" height="6.6" fill="#e3e2dc" stroke="#d4d3ce" stroke-width="0.8"/>
<rect x="293.6" y="-16.0" width="14.7" height="6.6" fill="#e3e2dc" stroke="#d4d3ce" stroke-width="0.8"/>
<rect x="309.6" y="-16.0" width="6.4" height="9.5" fill="#e3e2dc" stroke="#d4d3ce" stroke-width="0.8"/>
<rect x="252.7" y="-0.7" width="7.5" height="7.7" fill="#e3e2dc" stroke="#d4d3ce" stroke-width="0.8"/>
<rect x="261.0" y="1.7" width="7.0" height="5.3" fill="#e3e2dc" stroke="#d4d3ce" stroke-width="0.8"/>
<rect x="270.3" y="2.0" width="14.1" height="5.0" fill="#e3e2dc" stroke="#d4d3ce" stroke-width="0.8"/>
<rect x="285.4" y="-0.4" width="11.5" height="7.4" fill="#e3e2dc" stroke="#d4d3ce" stroke-width="0.8"/>
<rect x="306.3" y="-2.5" width="10.9" height="9.5" fill="#e3e2dc" stroke="#d4d3ce" stroke-width="0.8"/>
<rect x="329.0" y="-16.0" width="8.8" height="8.1" fill="#e3e2dc" stroke="#d4d3ce" stroke-width="0.8"/>
<rect x="339.3" y="-16.0" width="11.1" height="8.0" fill="#e3e2dc" stroke="#d4d3ce" stroke-width="0.8"/>
<rect x="352.4" y="-16.0" width="10.4" height="5.8" fill="#e3e2dc" stroke="#d4d3ce" stroke-width="0.8"/>
<rect x="363.6" y="-16.0" width="14.1" height="7.0" fill="#e3e2dc" stroke="#d4d3ce" stroke-width="0.8"/>
<rect x="379.2" y="-16.0" width="6.8" height="5.8" fill="#e3e2dc" stroke="#d4d3ce" stroke-width="0.8"/>
<rect x="328.1" y="-0.3" width="10.2" height="7.3" fill="#e3e2dc" stroke="#d4d3ce" stroke-width="0.8"/>
<rect x="339.1" y="-1.7" width="6.7" height="8.7" fill="#e3e2dc" stroke="#d4d3ce" stroke-width="0.8"/>
<rect x="361.1" y="-1.7" width="8.8" height="8.7" fill="#e3e2dc" stroke="#d4d3ce" stroke-width="0.8"/>
<rect x="370.3" y="1.1" width="6.5" height="5.9" fill="#e3e2dc" stroke="#d4d3ce" stroke-width="0.8"/>
<rect x="377.9" y="-0.2" width="8.1" height="7.2" fill="#e3e2dc" stroke="#d4d3ce" stroke-width="0.8"/>
<rect x="531.6" y="-16.0" width="15.0" height="8.1" fill="#e3e2dc" stroke="#d4d3ce" stroke-width="0.8"/>
<rect x="548.0" y="-16.0" width="13.0" height="8.4" fill="#e3e2dc" stroke="#d4d3ce" stroke-width="0.8"/>
<rect x="563.0" y="-16.0" width="8.7" height="7.2" fill="#e3e2dc" stroke="#d4d3ce" stroke-width="0.8"/>
<rect x="572.8" y="-16.0" width="8.4" height="6.6" fill="#e3e2dc" stroke="#d4d3ce" stroke-width="0.8"/>
<rect x="532.3" y="1.4" width="5.6" height="5.6" fill="#e3e2dc" stroke="#d4d3ce" stroke-width="0.8"/>
<rect x="538.7" y="1.1" width="8.2" height="5.9" fill="#e3e2dc" stroke="#d4d3ce" stroke-width="0.8"/>
<rect x="547.2" y="-1.8" width="11.4" height="8.8" fill="#e3e2dc" stroke="#d4d3ce" stroke-width="0.8"/>
<rect x="559.8" y="-0.7" width="12.9" height="7.7" fill="#e3e2dc" stroke="#d4d3ce" stroke-width="0.8"/>
<rect x="572.9" y="0.5" width="9.4" height="6.5" fill="#e3e2dc" stroke="#d4d3ce" stroke-width="0.8"/>
<rect x="595.6" y="-16.0" width="11.5" height="8.6" fill="#e3e2dc" stroke="#d4d3ce" stroke-width="0.8"/>
<rect x="608.3" y="-16.0" width="10.8" height="9.1" fill="#e3e2dc" stroke="#d4d3ce" stroke-width="0.8"/>
<rect x="622.0" y="-16.0" width="12.1" height="6.5" fill="#e3e2dc" stroke="#d4d3ce" stroke-width="0.8"/>
<rect x="635.1" y="-16.0" width="5.7" height="8.3" fill="#e3e2dc" stroke="#d4d3ce" stroke-width="0.8"/>
<rect x="596.0" y="-1.3" width="14.0" height="8.3" fill="#e3e2dc" stroke="#d4d3ce" stroke-width="0.8"/>
<rect x="611.8" y="0.1" width="9.6" height="6.9" fill="#e3e2dc" stroke="#d4d3ce" stroke-width="0.8"/>
<rect x="622.6" y="-2.0" width="9.7" height="9.0" fill="#e3e2dc" stroke="#d4d3ce" stroke-width="0.8"/>
<rect x="633.9" y="-1.7" width="10.1" height="8.7" fill="#e3e2dc" stroke="#d4d3ce" stroke-width="0.8"/>
<rect x="655.6" y="-16.0" width="5.4" height="8.0" fill="#e3e2dc" stroke="#d4d3ce" stroke-width="0.8"/>
<rect x="663.3" y="-16.0" width="12.7" height="5.3" fill="#e3e2dc" stroke="#d4d3ce" stroke-width="0.8"/>
<rect x="676.3" y="-16.0" width="13.2" height="5.2" fill="#e3e2dc" stroke="#d4d3ce" stroke-width="0.8"/>
<rect x="691.7" y="-16.0" width="10.6" height="5.0" fill="#e3e2dc" stroke="#d4d3ce" stroke-width="0.8"/>
<rect x="704.5" y="-16.0" width="9.8" height="5.0" fill="#e3e2dc" stroke="#d4d3ce" stroke-width="0.8"/>
<rect x="671.8" y="-0.2" width="8.3" height="7.2" fill="#e3e2dc" stroke="#d4d3ce" stroke-width="0.8"/>
<rect x="683.1" y="1.0" width="7.7" height="6.0" fill="#e3e2dc" stroke="#d4d3ce" stroke-width="0.8"/>
<rect x="691.6" y="-0.4" width="13.6" height="7.4" fill="#e3e2dc" stroke="#d4d3ce" stroke-width="0.8"/>
<rect x="-32.6" y="15.0" width="7.6" height="10.2" fill="#e3e2dc" stroke="#d4d3ce" stroke-width="0.8"/>
<rect x="-23.4" y="15.0" width="8.7" height="12.4" fill="#e3e2dc" stroke="#d4d3ce" stroke-width="0.8"/>
<rect x="-12.9" y="15.0" width="8.7" height="15.3" fill="#e3e2dc" stroke="#d4d3ce" stroke-width="0.8"/>
<rect x="-1.5" y="15.0" width="10.6" height="8.9" fill="#e3e2dc" stroke="#d4d3ce" stroke-width="0.8"/>
<rect x="10.7" y="15.0" width="9.1" height="13.3" fill="#e3e2dc" stroke="#d4d3ce" stroke-width="0.8"/>
<rect x="20.6" y="15.0" width="13.0" height="11.0" fill="#e3e2dc" stroke="#d4d3ce" stroke-width="0.8"/>
<rect x="-32.5" y="40.8" width="5.6" height="12.2" fill="#e3e2dc" stroke="#d4d3ce" stroke-width="0.8"/>
<rect x="-26.8" y="43.9" width="13.6" height="9.1" fill="#e3e2dc" stroke="#d4d3ce" stroke-width="0.8"/>
<rect x="-12.6" y="39.7" width="14.2" height="13.3" fill="#e3e2dc" stroke="#d4d3ce" stroke-width="0.8"/>
<rect x="3.1" y="38.8" width="11.7" height="14.2" fill="#e3e2dc" stroke="#d4d3ce" stroke-width="0.8"/>
<rect x="29.5" y="43.7" width="6.0" height="9.3" fill="#e3e2dc" stroke="#d4d3ce" stroke-width="0.8"/>
<rect x="38.4" y="38.9" width="7.6" height="14.1" fill="#e3e2dc" stroke="#d4d3ce" stroke-width="0.8"/>
<rect x="56.7" y="15.0" width="6.5" height="9.0" fill="#e3e2dc" stroke="#d4d3ce" stroke-width="0.8"/>
<rect x="63.4" y="15.0" width="13.4" height="11.0" fill="#e3e2dc" stroke="#d4d3ce" stroke-width="0.8"/>
<rect x="78.5" y="15.0" width="8.2" height="13.3" fill="#e3e2dc" stroke="#d4d3ce" stroke-width="0.8"/>
<rect x="89.4" y="15.0" width="8.2" height="15.7" fill="#e3e2dc" stroke="#d4d3ce" stroke-width="0.8"/>
<rect x="100.1" y="15.0" width="12.9" height="11.8" fill="#e3e2dc" stroke="#d4d3ce" stroke-width="0.8"/>
<rect x="56.6" y="39.9" width="7.2" height="13.1" fill="#e3e2dc" stroke="#d4d3ce" stroke-width="0.8"/>
<rect x="65.2" y="40.8" width="12.3" height="12.2" fill="#e3e2dc" stroke="#d4d3ce" stroke-width="0.8"/>
<rect x="94.1" y="40.0" width="14.4" height="13.0" fill="#e3e2dc" stroke="#d4d3ce" stroke-width="0.8"/>
<rect x="124.0" y="15.0" width="10.0" height="16.4" fill="#e3e2dc" stroke="#d4d3ce" stroke-width="0.8"/>
<rect x="135.4" y="15.0" width="13.6" height="13.6" fill="#e3e2dc" stroke="#d4d3ce" stroke-width="0.8"/>
<rect x="158.3" y="15.0" width="7.3" height="16.4" fill="#e3e2dc" stroke="#d4d3ce" stroke-width="0.8"/>
<rect x="121.2" y="40.7" width="8.3" height="12.3" fill="#e3e2dc" stroke="#d4d3ce" stroke-width="0.8"/>
<rect x="131.8" y="37.8" width="6.8" height="15.2" fill="#e3e2dc" stroke="#d4d3ce" stroke-width="0.8"/>
<rect x="138.8" y="43.7" width="10.6" height="9.3" fill="#e3e2dc" stroke="#d4d3ce" stroke-width="0.8"/>
<rect x="151.7" y="40.6" width="11.0" height="12.4" fill="#e3e2dc" stroke="#d4d3ce" stroke-width="0.8"/>
<rect x="164.2" y="39.0" width="6.0" height="14.0" fill="#e3e2dc" stroke="#d4d3ce" stroke-width="0.8"/>
<rect x="183.4" y="15.0" width="8.7" height="14.1" fill="#e3e2dc" stroke="#d4d3ce" stroke-width="0.8"/>
<rect x="192.7" y="15.0" width="14.4" height="11.3" fill="#e3e2dc" stroke="#d4d3ce" stroke-width="0.8"/>
<rect x="209.7" y="15.0" width="9.8" height="9.8" fill="#e3e2dc" stroke="#d4d3ce" stroke-width="0.8"/>
<rect x="222.1" y="15.0" width="6.2" height="12.7" fill="#e3e2dc" stroke="#d4d3ce" stroke-width="0.8"/>
<rect x="228.7" y="15.0" width="9.7" height="9.9" fill="#e3e2dc" stroke="#d4d3ce" stroke-width="0.8"/>
<rect x="183.5" y="41.1" width="7.0" height="11.9" fill="#e3e2dc" stroke="#d4d3ce" stroke-width="0.8"/>
<rect x="190.8" y="37.1" width="7.4" height="15.9" fill="#e3e2dc" stroke="#d4d3ce" stroke-width="0.8"/>
<rect x="200.9" y="36.5" width="5.2" height="16.5" fill="#e3e2dc" stroke="#d4d3ce" stroke-width="0.8"/>
<rect x="208.4" y="38.6" width="10.7" height="14.4" fill="#e3e2dc" stroke="#d4d3ce" stroke-width="0.8"/>
<rect x="221.4" y="42.3" width="6.5" height="10.7" fill="#e3e2dc" stroke="#d4d3ce" stroke-width="0.8"/>
<rect x="251.3" y="15.0" width="7.3" height="13.6" fill="#e3e2dc" stroke="#d4d3ce" stroke-width="0.8"/>
<rect x="260.8" y="15.0" width="5.6" height="10.6" fill="#e3e2dc" stroke="#d4d3ce" stroke-width="0.8"/>
<rect x="269.4" y="15.0" width="5.4" height="13.8" fill="#e3e2dc" stroke="#d4d3ce" stroke-width="0.8"/>
<rect x="277.2" y="15.0" width="8.4" height="15.4" fill="#e3e2dc" stroke="#d4d3ce" stroke-width="0.8"/>
<rect x="288.4" y="15.0" width="5.1" height="16.5" fill="#e3e2dc" stroke="#d4d3ce" stroke-width="0.8"/>
<rect x="294.7" y="15.0" width="5.9" height="10.6" fill="#e3e2dc" stroke="#d4d3ce" stroke-width="0.8"/>
<rect x="302.6" y="15.0" width="6.5" height="11.4" fill="#e3e2dc" stroke="#d4d3ce" stroke-width="0.8"/>
<rect x="252.2" y="40.3" width="9.8" height="12.7" fill="#e3e2dc" stroke="#d4d3ce" stroke-width="0.8"/>
<rect x="264.7" y="39.1" width="12.5" height="13.9" fill="#e3e2dc" stroke="#d4d3ce" stroke-width="0.8"/>
<rect x="279.1" y="37.8" width="13.5" height="15.2" fill="#e3e2dc" stroke="#d4d3ce" stroke-width="0.8"/>
<rect x="305.2" y="43.4" width="12.5" height="9.6" fill="#e3e2dc" stroke="#d4d3ce" stroke-width="0.8"/>
<rect x="329.6" y="15.0" width="12.4" height="15.6" fill="#e3e2dc" stroke="#d4d3ce" stroke-width="0.8"/>
<rect x="343.8" y="15.0" width="9.4" height="15.5" fill="#e3e2dc" stroke="#d4d3ce" stroke-width="0.8"/>
<rect x="355.8" y="15.0" width="8.0" height="16.7" fill="#e3e2dc" stroke="#d4d3ce" stroke-width="0.8"/>
<rect x="366.6" y="15.0" width="6.2" height="16.7" fill="#e3e2dc" stroke="#d4d3ce" stroke-width="0.8"/>
<rect x="373.5" y="15.0" width="12.5" height="10.5" fill="#e3e2dc" stroke="#d4d3ce" stroke-width="0.8"/>
<rect x="326.9" y="36.8" width="9.9" height="16.2" fill="#e3e2dc" stroke="#d4d3ce" stroke-width="0.8"/>
<rect x="339.0" y="37.8" width="8.9" height="15.2" fill="#e3e2dc" stroke="#d4d3ce" stroke-width="0.8"/>
<rect x="350.0" y="37.5" width="14.4" height="15.5" fill="#e3e2dc" stroke="#d4d3ce" stroke-width="0.8"/>
<rect x="364.7" y="37.4" width="11.5" height="15.6" fill="#e3e2dc" stroke="#d4d3ce" stroke-width="0.8"/>
<rect x="378.0" y="37.8" width="8.0" height="15.2" fill="#e3e2dc" stroke="#d4d3ce" stroke-width="0.8"/>
<rect x="530.1" y="15.0" width="6.1" height="15.4" fill="#e3e2dc" stroke="#d4d3ce" stroke-width="0.8"/>
<rect x="538.0" y="15.0" width="9.6" height="11.4" fill="#e3e2dc" stroke="#d4d3ce" stroke-width="0.8"/>
<rect x="548.6" y="15.0" width="13.4" height="13.8" fill="#e3e2dc" stroke="#d4d3ce" stroke-width="0.8"/>
<rect x="562.3" y="15.0" width="7.7" height="14.5" fill="#e3e2dc" stroke="#d4d3ce" stroke-width="0.8"/>
<rect x="572.0" y="15.0" width="13.1" height="9.5" fill="#e3e2dc" stroke="#d4d3ce" stroke-width="0.8"/>
<rect x="541.2" y="36.9" width="7.2" height="16.1" fill="#e3e2dc" stroke="#d4d3ce" stroke-width="0.8"/>
<rect x="561.6" y="42.9" width="14.9" height="10.1" fill="#e3e2dc" stroke="#d4d3ce" stroke-width="0.8"/>
<rect x="577.0" y="44.5" width="9.0" height="8.5" fill="#e3e2dc" stroke="#d4d3ce" stroke-width="0.8"/>
<rect x="595.8" y="15.0" width="13.1" height="10.6" fill="#e3e2dc" stroke="#d4d3ce" stroke-width="0.8"/>
<rect x="609.2" y="15.0" width="10.5" height="15.8" fill="#e3e2dc" stroke="#d4d3ce" stroke-width="0.8"/>
<rect x="620.9" y="15.0" width="14.3" height="16.1" fill="#e3e2dc" stroke="#d4d3ce" stroke-width="0.8"/>
<rect x="596.6" y="41.3" width="11.3" height="11.7" fill="#e3e2dc" stroke="#d4d3ce" stroke-width="0.8"/>
<rect x="610.0" y="40.3" width="14.1" height="12.7" fill="#e3e2dc" stroke="#d4d3ce" stroke-width="0.8"/>
<rect x="627.0" y="37.4" width="5.6" height="15.6" fill="#e3e2dc" stroke="#d4d3ce" stroke-width="0.8"/>
<rect x="657.0" y="15.0" width="5.4" height="11.3" fill="#e3e2dc" stroke="#d4d3ce" stroke-width="0.8"/>
<rect x="665.2" y="15.0" width="13.9" height="9.7" fill="#e3e2dc" stroke="#d4d3ce" stroke-width="0.8"/>
<rect x="680.9" y="15.0" width="5.5" height="11.8" fill="#e3e2dc" stroke="#d4d3ce" stroke-width="0.8"/>
<rect x="688.2" y="15.0" width="7.8" height="15.0" fill="#e3e2dc" stroke="#d4d3ce" stroke-width="0.8"/>
<rect x="697.7" y="15.0" width="9.2" height="16.8" fill="#e3e2dc" stroke="#d4d3ce" stroke-width="0.8"/>
<rect x="656.8" y="43.1" width="7.8" height="9.9" fill="#e3e2dc" stroke="#d4d3ce" stroke-width="0.8"/>
<rect x="667.0" y="41.5" width="12.9" height="11.5" fill="#e3e2dc" stroke="#d4d3ce" stroke-width="0.8"/>
<rect x="681.5" y="43.1" width="13.8" height="9.9" fill="#e3e2dc" stroke="#d4d3ce" stroke-width="0.8"/>
<rect x="695.8" y="44.0" width="8.1" height="9.0" fill="#e3e2dc" stroke="#d4d3ce" stroke-width="0.8"/>
<rect x="705.1" y="36.3" width="10.9" height="16.7" fill="#e3e2dc" stroke="#d4d3ce" stroke-width="0.8"/>
<rect x="-32.2" y="61.0" width="7.0" height="9.9" fill="#e3e2dc" stroke="#d4d3ce" stroke-width="0.8"/>
<rect x="-24.9" y="61.0" width="7.6" height="10.5" fill="#e3e2dc" stroke="#d4d3ce" stroke-width="0.8"/>
<rect x="-5.4" y="61.0" width="13.4" height="12.3" fill="#e3e2dc" stroke="#d4d3ce" stroke-width="0.8"/>
<rect x="8.9" y="61.0" width="6.5" height="13.2" fill="#e3e2dc" stroke="#d4d3ce" stroke-width="0.8"/>
<rect x="17.1" y="61.0" width="11.7" height="13.1" fill="#e3e2dc" stroke="#d4d3ce" stroke-width="0.8"/>
<rect x="29.9" y="61.0" width="14.2" height="11.5" fill="#e3e2dc" stroke="#d4d3ce" stroke-width="0.8"/>
<rect x="-35.0" y="87.2" width="12.7" height="7.8" fill="#e3e2dc" stroke="#d4d3ce" stroke-width="0.8"/>
<rect x="-20.5" y="80.5" width="8.5" height="14.5" fill="#e3e2dc" stroke="#d4d3ce" stroke-width="0.8"/>
<rect x="-11.3" y="83.4" width="5.7" height="11.6" fill="#e3e2dc" stroke="#d4d3ce" stroke-width="0.8"/>
<rect x="-3.5" y="81.4" width="9.1" height="13.6" fill="#e3e2dc" stroke="#d4d3ce" stroke-width="0.8"/>
<rect x="6.5" y="80.2" width="11.4" height="14.8" fill="#e3e2dc" stroke="#d4d3ce" stroke-width="0.8"/>
<rect x="35.0" y="84.6" width="8.4" height="10.4" fill="#e3e2dc" stroke="#d4d3ce" stroke-width="0.8"/>
<rect x="54.7" y="61.0" width="13.7" height="11.5" fill="#e3e2dc" stroke="#d4d3ce" stroke-width="0.8"/>
<rect x="70.5" y="61.0" width="14.0" height="8.5" fill="#e3e2dc" stroke="#d4d3ce" stroke-width="0.8"/>
<rect x="95.8" y="61.0" width="10.8" height="10.5" fill="#e3e2dc" stroke="#d4d3ce" stroke-width="0.8"/>
<rect x="107.4" y="61.0" width="5.6" height="13.4" fill="#e3e2dc" stroke="#d4d3ce" stroke-width="0.8"/>
<rect x="71.9" y="81.3" width="12.4" height="13.7" fill="#e3e2dc" stroke="#d4d3ce" stroke-width="0.8"/>
<rect x="87.0" y="82.2" width="6.3" height="12.8" fill="#e3e2dc" stroke="#d4d3ce" stroke-width="0.8"/>
<rect x="95.1" y="87.0" width="7.8" height="8.0" fill="#e3e2dc" stroke="#d4d3ce" stroke-width="0.8"/>
<rect x="105.4" y="85.9" width="7.6" height="9.1" fill="#e3e2dc" stroke="#d4d3ce" stroke-width="0.8"/>
<rect x="123.7" y="61.0" width="14.7" height="13.5" fill="#e3e2dc" stroke="#d4d3ce" stroke-width="0.8"/>
<rect x="140.6" y="61.0" width="5.7" height="13.8" fill="#e3e2dc" stroke="#d4d3ce" stroke-width="0.8"/>
<rect x="146.3" y="61.0" width="11.3" height="8.5" fill="#e3e2dc" stroke="#d4d3ce" stroke-width="0.8"/>
<rect x="157.8" y="61.0" width="9.5" height="11.7" fill="#e3e2dc" stroke="#d4d3ce" stroke-width="0.8"/>
<rect x="167.3" y="61.0" width="6.7" height="8.3" fill="#e3e2dc" stroke="#d4d3ce" stroke-width="0.8"/>
<rect x="122.4" y="83.2" width="8.3" height="11.8" fill="#e3e2dc" stroke="#d4d3ce" stroke-width="0.8"/>
<rect x="133.1" y="81.2" width="7.1" height="13.8" fill="#e3e2dc" stroke="#d4d3ce" stroke-width="0.8"/>
<rect x="141.8" y="81.7" width="5.3" height="13.3" fill="#e3e2dc" stroke="#d4d3ce" stroke-width="0.8"/>
<rect x="148.6" y="87.0" width="9.2" height="8.0" fill="#e3e2dc" stroke="#d4d3ce" stroke-width="0.8"/>
<rect x="160.0" y="84.5" width="10.8" height="10.5" fill="#e3e2dc" stroke="#d4d3ce" stroke-width="0.8"/>
<rect x="182.9" y="61.0" width="13.7" height="15.0" fill="#e3e2dc" stroke="#d4d3ce" stroke-width="0.8"/>
<rect x="199.5" y="61.0" width="8.3" height="14.9" fill="#e3e2dc" stroke="#d4d3ce" stroke-width="0.8"/>
<rect x="209.2" y="61.0" width="6.3" height="10.9" fill="#e3e2dc" stroke="#d4d3ce" stroke-width="0.8"/>
<rect x="217.7" y="61.0" width="9.5" height="10.1" fill="#e3e2dc" stroke="#d4d3ce" stroke-width="0.8"/>
<rect x="228.4" y="61.0" width="7.8" height="9.0" fill="#e3e2dc" stroke="#d4d3ce" stroke-width="0.8"/>
<rect x="183.8" y="82.2" width="7.0" height="12.8" fill="#e3e2dc" stroke="#d4d3ce" stroke-width="0.8"/>
<rect x="204.4" y="80.6" width="14.5" height="14.4" fill="#e3e2dc" stroke="#d4d3ce" stroke-width="0.8"/>
<rect x="221.0" y="86.0" width="5.6" height="9.0" fill="#e3e2dc" stroke="#d4d3ce" stroke-width="0.8"/>
<rect x="229.2" y="82.8" width="11.8" height="12.2" fill="#e3e2dc" stroke="#d4d3ce" stroke-width="0.8"/>
<rect x="249.7" y="61.0" width="11.3" height="14.9" fill="#e3e2dc" stroke="#d4d3ce" stroke-width="0.8"/>
<rect x="270.3" y="61.0" width="9.6" height="8.3" fill="#e3e2dc" stroke="#d4d3ce" stroke-width="0.8"/>
<rect x="295.8" y="61.0" width="12.9" height="11.1" fill="#e3e2dc" stroke="#d4d3ce" stroke-width="0.8"/>
<rect x="309.1" y="61.0" width="6.1" height="11.7" fill="#e3e2dc" stroke="#d4d3ce" stroke-width="0.8"/>
<rect x="250.0" y="80.7" width="5.2" height="14.3" fill="#e3e2dc" stroke="#d4d3ce" stroke-width="0.8"/>
<rect x="258.1" y="84.2" width="14.8" height="10.8" fill="#e3e2dc" stroke="#d4d3ce" stroke-width="0.8"/>
<rect x="274.0" y="81.2" width="13.1" height="13.8" fill="#e3e2dc" stroke="#d4d3ce" stroke-width="0.8"/>
<rect x="287.2" y="83.1" width="7.1" height="11.9" fill="#e3e2dc" stroke="#d4d3ce" stroke-width="0.8"/>
<rect x="294.3" y="81.6" width="13.3" height="13.4" fill="#e3e2dc" stroke="#d4d3ce" stroke-width="0.8"/>
<rect x="307.8" y="83.5" width="10.2" height="11.5" fill="#e3e2dc" stroke="#d4d3ce" stroke-width="0.8"/>
<rect x="328.5" y="61.0" width="13.9" height="11.1" fill="#e3e2dc" stroke="#d4d3ce" stroke-width="0.8"/>
<rect x="343.0" y="61.0" width="7.4" height="14.3" fill="#e3e2dc" stroke="#d4d3ce" stroke-width="0.8"/>
<rect x="350.7" y="61.0" width="10.9" height="8.4" fill="#e3e2dc" stroke="#d4d3ce" stroke-width="0.8"/>
<rect x="363.0" y="61.0" width="10.9" height="12.3" fill="#e3e2dc" stroke="#d4d3ce" stroke-width="0.8"/>
<rect x="375.2" y="61.0" width="5.7" height="12.9" fill="#e3e2dc" stroke="#d4d3ce" stroke-width="0.8"/>
<rect x="327.6" y="82.1" width="11.7" height="12.9" fill="#e3e2dc" stroke="#d4d3ce" stroke-width="0.8"/>
<rect x="341.3" y="84.0" width="11.9" height="11.0" fill="#e3e2dc" stroke="#d4d3ce" stroke-width="0.8"/>
<rect x="355.9" y="87.0" width="11.0" height="8.0" fill="#e3e2dc" stroke="#d4d3ce" stroke-width="0.8"/>
<rect x="369.9" y="84.6" width="7.3" height="10.4" fill="#e3e2dc" stroke="#d4d3ce" stroke-width="0.8"/>
<rect x="379.6" y="81.9" width="6.4" height="13.1" fill="#e3e2dc" stroke="#d4d3ce" stroke-width="0.8"/>
<rect x="533.9" y="61.0" width="13.0" height="7.8" fill="#e3e2dc" stroke="#d4d3ce" stroke-width="0.8"/>
<rect x="547.7" y="61.0" width="14.3" height="9.1" fill="#e3e2dc" stroke="#d4d3ce" stroke-width="0.8"/>
<rect x="564.8" y="61.0" width="11.4" height="14.4" fill="#e3e2dc" stroke="#d4d3ce" stroke-width="0.8"/>
<rect x="576.6" y="61.0" width="5.2" height="13.2" fill="#e3e2dc" stroke="#d4d3ce" stroke-width="0.8"/>
<rect x="532.8" y="81.4" width="6.9" height="13.6" fill="#e3e2dc" stroke="#d4d3ce" stroke-width="0.8"/>
<rect x="550.1" y="81.1" width="5.0" height="13.9" fill="#e3e2dc" stroke="#d4d3ce" stroke-width="0.8"/>
<rect x="557.5" y="82.9" width="10.0" height="12.1" fill="#e3e2dc" stroke="#d4d3ce" stroke-width="0.8"/>
<rect x="570.0" y="87.1" width="5.8" height="7.9" fill="#e3e2dc" stroke="#d4d3ce" stroke-width="0.8"/>
<rect x="576.6" y="87.4" width="9.0" height="7.6" fill="#e3e2dc" stroke="#d4d3ce" stroke-width="0.8"/>
<rect x="597.3" y="61.0" width="13.1" height="10.9" fill="#e3e2dc" stroke="#d4d3ce" stroke-width="0.8"/>
<rect x="612.4" y="61.0" width="7.1" height="10.7" fill="#e3e2dc" stroke="#d4d3ce" stroke-width="0.8"/>
<rect x="622.4" y="61.0" width="10.5" height="10.1" fill="#e3e2dc" stroke="#d4d3ce" stroke-width="0.8"/>
<rect x="635.0" y="61.0" width="11.0" height="13.9" fill="#e3e2dc" stroke="#d4d3ce" stroke-width="0.8"/>
<rect x="595.2" y="86.4" width="12.6" height="8.6" fill="#e3e2dc" stroke="#d4d3ce" stroke-width="0.8"/>
<rect x="610.8" y="87.4" width="12.7" height="7.6" fill="#e3e2dc" stroke="#d4d3ce" stroke-width="0.8"/>
<rect x="623.8" y="83.0" width="11.9" height="12.0" fill="#e3e2dc" stroke="#d4d3ce" stroke-width="0.8"/>
<rect x="637.1" y="82.9" width="8.9" height="12.1" fill="#e3e2dc" stroke="#d4d3ce" stroke-width="0.8"/>
<rect x="656.9" y="61.0" width="13.0" height="14.3" fill="#e3e2dc" stroke="#d4d3ce" stroke-width="0.8"/>
<rect x="672.0" y="61.0" width="5.3" height="12.6" fill="#e3e2dc" stroke="#d4d3ce" stroke-width="0.8"/>
<rect x="693.8" y="61.0" width="12.1" height="9.4" fill="#e3e2dc" stroke="#d4d3ce" stroke-width="0.8"/>
<rect x="706.9" y="61.0" width="8.2" height="8.2" fill="#e3e2dc" stroke="#d4d3ce" stroke-width="0.8"/>
<rect x="656.6" y="81.8" width="14.3" height="13.2" fill="#e3e2dc" stroke="#d4d3ce" stroke-width="0.8"/>
<rect x="673.9" y="85.4" width="12.5" height="9.6" fill="#e3e2dc" stroke="#d4d3ce" stroke-width="0.8"/>
<rect x="695.7" y="81.7" width="8.3" height="13.3" fill="#e3e2dc" stroke="#d4d3ce" stroke-width="0.8"/>
<rect x="706.6" y="83.5" width="9.4" height="11.5" fill="#e3e2dc" stroke="#d4d3ce" stroke-width="0.8"/>
<rect x="-34.7" y="103.0" width="11.3" height="6.5" fill="#e3e2dc" stroke="#d4d3ce" stroke-width="0.8"/>
<rect x="-20.6" y="103.0" width="6.6" height="7.3" fill="#e3e2dc" stroke="#d4d3ce" stroke-width="0.8"/>
<rect x="4.1" y="103.0" width="14.7" height="5.2" fill="#e3e2dc" stroke="#d4d3ce" stroke-width="0.8"/>
<rect x="19.6" y="103.0" width="14.1" height="4.8" fill="#e3e2dc" stroke="#d4d3ce" stroke-width="0.8"/>
<rect x="35.8" y="103.0" width="10.2" height="5.6" fill="#e3e2dc" stroke="#d4d3ce" stroke-width="0.8"/>
<rect x="-33.2" y="117.7" width="12.5" height="8.3" fill="#e3e2dc" stroke="#d4d3ce" stroke-width="0.8"/>
<rect x="-20.0" y="118.0" width="5.3" height="8.0" fill="#e3e2dc" stroke="#d4d3ce" stroke-width="0.8"/>
<rect x="-14.0" y="118.2" width="14.6" height="7.8" fill="#e3e2dc" stroke="#d4d3ce" stroke-width="0.8"/>
<rect x="2.7" y="117.9" width="11.0" height="8.1" fill="#e3e2dc" stroke="#d4d3ce" stroke-width="0.8"/>
<rect x="13.8" y="121.2" width="5.7" height="4.8" fill="#e3e2dc" stroke="#d4d3ce" stroke-width="0.8"/>
<rect x="28.1" y="117.6" width="7.7" height="8.4" fill="#e3e2dc" stroke="#d4d3ce" stroke-width="0.8"/>
<rect x="36.2" y="119.3" width="8.0" height="6.7" fill="#e3e2dc" stroke="#d4d3ce" stroke-width="0.8"/>
<rect x="56.9" y="103.0" width="5.9" height="9.2" fill="#e3e2dc" stroke="#d4d3ce" stroke-width="0.8"/>
<rect x="65.4" y="103.0" width="5.3" height="8.7" fill="#e3e2dc" stroke="#d4d3ce" stroke-width="0.8"/>
<rect x="73.2" y="103.0" width="13.0" height="7.9" fill="#e3e2dc" stroke="#d4d3ce" stroke-width="0.8"/>
<rect x="86.3" y="103.0" width="6.9" height="9.0" fill="#e3e2dc" stroke="#d4d3ce" stroke-width="0.8"/>
<rect x="95.2" y="103.0" width="10.9" height="7.9" fill="#e3e2dc" stroke="#d4d3ce" stroke-width="0.8"/>
<rect x="106.5" y="103.0" width="6.0" height="9.4" fill="#e3e2dc" stroke="#d4d3ce" stroke-width="0.8"/>
<rect x="56.3" y="120.9" width="7.2" height="5.1" fill="#e3e2dc" stroke="#d4d3ce" stroke-width="0.8"/>
<rect x="66.1" y="116.7" width="6.3" height="9.3" fill="#e3e2dc" stroke="#d4d3ce" stroke-width="0.8"/>
<rect x="74.5" y="117.5" width="6.4" height="8.5" fill="#e3e2dc" stroke="#d4d3ce" stroke-width="0.8"/>
<rect x="82.0" y="120.7" width="10.2" height="5.3" fill="#e3e2dc" stroke="#d4d3ce" stroke-width="0.8"/>
<rect x="94.6" y="119.4" width="7.9" height="6.6" fill="#e3e2dc" stroke="#d4d3ce" stroke-width="0.8"/>
<rect x="103.2" y="120.2" width="6.9" height="5.8" fill="#e3e2dc" stroke="#d4d3ce" stroke-width="0.8"/>
<rect x="123.6" y="103.0" width="9.7" height="8.9" fill="#e3e2dc" stroke="#d4d3ce" stroke-width="0.8"/>
<rect x="135.3" y="103.0" width="13.4" height="5.9" fill="#e3e2dc" stroke="#d4d3ce" stroke-width="0.8"/>
<rect x="150.0" y="103.0" width="6.2" height="6.9" fill="#e3e2dc" stroke="#d4d3ce" stroke-width="0.8"/>
<rect x="156.4" y="103.0" width="6.2" height="7.0" fill="#e3e2dc" stroke="#d4d3ce" stroke-width="0.8"/>
<rect x="163.3" y="103.0" width="9.4" height="5.3" fill="#e3e2dc" stroke="#d4d3ce" stroke-width="0.8"/>
<rect x="122.9" y="118.6" width="14.4" height="7.4" fill="#e3e2dc" stroke="#d4d3ce" stroke-width="0.8"/>
<rect x="182.3" y="103.0" width="7.7" height="9.1" fill="#e3e2dc" stroke="#d4d3ce" stroke-width="0.8"/>
<rect x="192.2" y="103.0" width="5.7" height="6.9" fill="#e3e2dc" stroke="#d4d3ce" stroke-width="0.8"/>
<rect x="198.5" y="103.0" width="11.6" height="6.5" fill="#e3e2dc" stroke="#d4d3ce" stroke-width="0.8"/>
<rect x="213.1" y="103.0" width="9.8" height="5.6" fill="#e3e2dc" stroke="#d4d3ce" stroke-width="0.8"/>
<rect x="224.9" y="103.0" width="10.1" height="4.9" fill="#e3e2dc" stroke="#d4d3ce" stroke-width="0.8"/>
<rect x="184.1" y="118.9" width="7.3" height="7.1" fill="#e3e2dc" stroke="#d4d3ce" stroke-width="0.8"/>
<rect x="223.7" y="121.1" width="7.2" height="4.9" fill="#e3e2dc" stroke="#d4d3ce" stroke-width="0.8"/>
<rect x="231.3" y="117.7" width="6.9" height="8.3" fill="#e3e2dc" stroke="#d4d3ce" stroke-width="0.8"/>
<rect x="274.3" y="103.0" width="14.9" height="7.7" fill="#e3e2dc" stroke="#d4d3ce" stroke-width="0.8"/>
<rect x="291.8" y="103.0" width="7.0" height="9.5" fill="#e3e2dc" stroke="#d4d3ce" stroke-width="0.8"/>
<rect x="299.5" y="103.0" width="14.6" height="6.3" fill="#e3e2dc" stroke="#d4d3ce" stroke-width="0.8"/>
<rect x="251.7" y="119.5" width="5.2" height="6.5" fill="#e3e2dc" stroke="#d4d3ce" stroke-width="0.8"/>
<rect x="259.4" y="118.4" width="5.0" height="7.6" fill="#e3e2dc" stroke="#d4d3ce" stroke-width="0.8"/>
<rect x="265.8" y="117.9" width="10.6" height="8.1" fill="#e3e2dc" stroke="#d4d3ce" stroke-width="0.8"/>
<rect x="277.1" y="116.7" width="6.2" height="9.3" fill="#e3e2dc" stroke="#d4d3ce" stroke-width="0.8"/>
<rect x="294.1" y="120.5" width="7.3" height="5.5" fill="#e3e2dc" stroke="#d4d3ce" stroke-width="0.8"/>
<rect x="302.8" y="117.0" width="9.1" height="9.0" fill="#e3e2dc" stroke="#d4d3ce" stroke-width="0.8"/>
<rect x="329.8" y="103.0" width="7.7" height="9.2" fill="#e3e2dc" stroke="#d4d3ce" stroke-width="0.8"/>
<rect x="337.7" y="103.0" width="14.1" height="5.2" fill="#e3e2dc" stroke="#d4d3ce" stroke-width="0.8"/>
<rect x="361.8" y="103.0" width="10.3" height="8.8" fill="#e3e2dc" stroke="#d4d3ce" stroke-width="0.8"/>
<rect x="374.1" y="103.0" width="10.1" height="5.3" fill="#e3e2dc" stroke="#d4d3ce" stroke-width="0.8"/>
<rect x="341.9" y="117.0" width="5.8" height="9.0" fill="#e3e2dc" stroke="#d4d3ce" stroke-width="0.8"/>
<rect x="348.2" y="120.0" width="11.9" height="6.0" fill="#e3e2dc" stroke="#d4d3ce" stroke-width="0.8"/>
<rect x="361.3" y="118.0" width="10.2" height="8.0" fill="#e3e2dc" stroke="#d4d3ce" stroke-width="0.8"/>
<rect x="373.7" y="119.0" width="11.2" height="7.0" fill="#e3e2dc" stroke="#d4d3ce" stroke-width="0.8"/>
<rect x="530.0" y="103.0" width="9.8" height="8.0" fill="#e3e2dc" stroke="#d4d3ce" stroke-width="0.8"/>
<rect x="541.7" y="103.0" width="6.8" height="9.3" fill="#e3e2dc" stroke="#d4d3ce" stroke-width="0.8"/>
<rect x="549.2" y="103.0" width="9.3" height="9.3" fill="#e3e2dc" stroke="#d4d3ce" stroke-width="0.8"/>
<rect x="559.8" y="103.0" width="14.6" height="9.0" fill="#e3e2dc" stroke="#d4d3ce" stroke-width="0.8"/>
<rect x="576.6" y="103.0" width="8.6" height="7.9" fill="#e3e2dc" stroke="#d4d3ce" stroke-width="0.8"/>
<rect x="530.9" y="120.0" width="7.1" height="6.0" fill="#e3e2dc" stroke="#d4d3ce" stroke-width="0.8"/>
<rect x="538.4" y="119.3" width="9.1" height="6.7" fill="#e3e2dc" stroke="#d4d3ce" stroke-width="0.8"/>
<rect x="549.3" y="118.5" width="14.4" height="7.5" fill="#e3e2dc" stroke="#d4d3ce" stroke-width="0.8"/>
<rect x="565.8" y="120.4" width="9.4" height="5.6" fill="#e3e2dc" stroke="#d4d3ce" stroke-width="0.8"/>
<rect x="575.2" y="120.5" width="10.8" height="5.5" fill="#e3e2dc" stroke="#d4d3ce" stroke-width="0.8"/>
<rect x="597.1" y="103.0" width="13.4" height="7.8" fill="#e3e2dc" stroke="#d4d3ce" stroke-width="0.8"/>
<rect x="612.5" y="103.0" width="14.7" height="5.7" fill="#e3e2dc" stroke="#d4d3ce" stroke-width="0.8"/>
<rect x="628.1" y="103.0" width="7.6" height="8.7" fill="#e3e2dc" stroke="#d4d3ce" stroke-width="0.8"/>
<rect x="638.2" y="103.0" width="7.8" height="7.5" fill="#e3e2dc" stroke="#d4d3ce" stroke-width="0.8"/>
<rect x="596.1" y="120.0" width="12.3" height="6.0" fill="#e3e2dc" stroke="#d4d3ce" stroke-width="0.8"/>
<rect x="608.4" y="117.9" width="6.7" height="8.1" fill="#e3e2dc" stroke="#d4d3ce" stroke-width="0.8"/>
<rect x="630.1" y="118.8" width="8.4" height="7.2" fill="#e3e2dc" stroke="#d4d3ce" stroke-width="0.8"/>
<rect x="639.7" y="120.0" width="6.3" height="6.0" fill="#e3e2dc" stroke="#d4d3ce" stroke-width="0.8"/>
<rect x="654.6" y="103.0" width="5.9" height="7.7" fill="#e3e2dc" stroke="#d4d3ce" stroke-width="0.8"/>
<rect x="661.4" y="103.0" width="12.9" height="8.2" fill="#e3e2dc" stroke="#d4d3ce" stroke-width="0.8"/>
<rect x="675.7" y="103.0" width="6.9" height="9.2" fill="#e3e2dc" stroke="#d4d3ce" stroke-width="0.8"/>
<rect x="682.8" y="103.0" width="6.5" height="8.0" fill="#e3e2dc" stroke="#d4d3ce" stroke-width="0.8"/>
<rect x="691.5" y="103.0" width="7.3" height="8.5" fill="#e3e2dc" stroke="#d4d3ce" stroke-width="0.8"/>
<rect x="699.1" y="103.0" width="10.9" height="5.7" fill="#e3e2dc" stroke="#d4d3ce" stroke-width="0.8"/>
<rect x="657.2" y="120.8" width="7.3" height="5.2" fill="#e3e2dc" stroke="#d4d3ce" stroke-width="0.8"/>
<rect x="666.2" y="120.3" width="6.4" height="5.7" fill="#e3e2dc" stroke="#d4d3ce" stroke-width="0.8"/>
<rect x="672.9" y="120.1" width="11.3" height="5.9" fill="#e3e2dc" stroke="#d4d3ce" stroke-width="0.8"/>
<rect x="685.5" y="117.8" width="10.3" height="8.2" fill="#e3e2dc" stroke="#d4d3ce" stroke-width="0.8"/>
<rect x="698.0" y="119.9" width="7.2" height="6.1" fill="#e3e2dc" stroke="#d4d3ce" stroke-width="0.8"/>
<rect x="707.3" y="117.0" width="8.7" height="9.0" fill="#e3e2dc" stroke="#d4d3ce" stroke-width="0.8"/>
<rect x="-33.3" y="156.0" width="7.6" height="7.5" fill="#e3e2dc" stroke="#d4d3ce" stroke-width="0.8"/>
<rect x="-7.8" y="156.0" width="8.1" height="8.6" fill="#e3e2dc" stroke="#d4d3ce" stroke-width="0.8"/>
<rect x="0.5" y="156.0" width="11.1" height="7.1" fill="#e3e2dc" stroke="#d4d3ce" stroke-width="0.8"/>
<rect x="21.0" y="156.0" width="7.0" height="7.3" fill="#e3e2dc" stroke="#d4d3ce" stroke-width="0.8"/>
<rect x="29.6" y="156.0" width="8.6" height="11.2" fill="#e3e2dc" stroke="#d4d3ce" stroke-width="0.8"/>
<rect x="40.5" y="156.0" width="5.5" height="7.0" fill="#e3e2dc" stroke="#d4d3ce" stroke-width="0.8"/>
<rect x="-35.0" y="178.1" width="11.7" height="7.9" fill="#e3e2dc" stroke="#d4d3ce" stroke-width="0.8"/>
<rect x="-21.9" y="174.5" width="12.1" height="11.5" fill="#e3e2dc" stroke="#d4d3ce" stroke-width="0.8"/>
<rect x="-8.4" y="173.4" width="14.3" height="12.6" fill="#e3e2dc" stroke="#d4d3ce" stroke-width="0.8"/>
<rect x="6.2" y="175.4" width="9.6" height="10.6" fill="#e3e2dc" stroke="#d4d3ce" stroke-width="0.8"/>
<rect x="15.9" y="173.6" width="14.8" height="12.4" fill="#e3e2dc" stroke="#d4d3ce" stroke-width="0.8"/>
<rect x="32.1" y="177.6" width="11.2" height="8.4" fill="#e3e2dc" stroke="#d4d3ce" stroke-width="0.8"/>
<rect x="57.1" y="156.0" width="9.4" height="7.1" fill="#e3e2dc" stroke="#d4d3ce" stroke-width="0.8"/>
<rect x="66.7" y="156.0" width="14.6" height="6.8" fill="#e3e2dc" stroke="#d4d3ce" stroke-width="0.8"/>
<rect x="83.7" y="156.0" width="6.4" height="7.2" fill="#e3e2dc" stroke="#d4d3ce" stroke-width="0.8"/>
<rect x="90.5" y="156.0" width="10.3" height="11.9" fill="#e3e2dc" stroke="#d4d3ce" stroke-width="0.8"/>
<rect x="101.4" y="156.0" width="11.6" height="9.3" fill="#e3e2dc" stroke="#d4d3ce" stroke-width="0.8"/>
<rect x="55.0" y="178.7" width="14.7" height="7.3" fill="#e3e2dc" stroke="#d4d3ce" stroke-width="0.8"/>
<rect x="71.9" y="173.6" width="13.9" height="12.4" fill="#e3e2dc" stroke="#d4d3ce" stroke-width="0.8"/>
<rect x="88.7" y="177.6" width="11.0" height="8.4" fill="#e3e2dc" stroke="#d4d3ce" stroke-width="0.8"/>
<rect x="101.9" y="178.7" width="11.1" height="7.3" fill="#e3e2dc" stroke="#d4d3ce" stroke-width="0.8"/>
<rect x="121.4" y="156.0" width="13.1" height="8.7" fill="#e3e2dc" stroke="#d4d3ce" stroke-width="0.8"/>
<rect x="135.3" y="156.0" width="9.7" height="12.9" fill="#e3e2dc" stroke="#d4d3ce" stroke-width="0.8"/>
<rect x="147.6" y="156.0" width="8.2" height="7.6" fill="#e3e2dc" stroke="#d4d3ce" stroke-width="0.8"/>
<rect x="156.8" y="156.0" width="6.9" height="9.2" fill="#e3e2dc" stroke="#d4d3ce" stroke-width="0.8"/>
<rect x="166.3" y="156.0" width="7.7" height="6.6" fill="#e3e2dc" stroke="#d4d3ce" stroke-width="0.8"/>
<rect x="124.6" y="177.4" width="14.5" height="8.6" fill="#e3e2dc" stroke="#d4d3ce" stroke-width="0.8"/>
<rect x="141.6" y="177.1" width="7.7" height="8.9" fill="#e3e2dc" stroke="#d4d3ce" stroke-width="0.8"/>
<rect x="150.3" y="178.8" width="8.8" height="7.2" fill="#e3e2dc" stroke="#d4d3ce" stroke-width="0.8"/>
<rect x="199.4" y="156.0" width="12.5" height="11.8" fill="#e3e2dc" stroke="#d4d3ce" stroke-width="0.8"/>
<rect x="213.9" y="156.0" width="8.8" height="12.0" fill="#e3e2dc" stroke="#d4d3ce" stroke-width="0.8"/>
<rect x="224.3" y="156.0" width="8.4" height="11.8" fill="#e3e2dc" stroke="#d4d3ce" stroke-width="0.8"/>
<rect x="235.2" y="156.0" width="5.8" height="12.2" fill="#e3e2dc" stroke="#d4d3ce" stroke-width="0.8"/>
<rect x="185.0" y="175.3" width="11.8" height="10.7" fill="#e3e2dc" stroke="#d4d3ce" stroke-width="0.8"/>
<rect x="199.4" y="176.5" width="10.5" height="9.5" fill="#e3e2dc" stroke="#d4d3ce" stroke-width="0.8"/>
<rect x="212.2" y="173.8" width="12.8" height="12.2" fill="#e3e2dc" stroke="#d4d3ce" stroke-width="0.8"/>
<rect x="226.0" y="178.8" width="7.5" height="7.2" fill="#e3e2dc" stroke="#d4d3ce" stroke-width="0.8"/>
<rect x="233.6" y="178.0" width="7.4" height="8.0" fill="#e3e2dc" stroke="#d4d3ce" stroke-width="0.8"/>
<rect x="252.0" y="156.0" width="7.0" height="9.5" fill="#e3e2dc" stroke="#d4d3ce" stroke-width="0.8"/>
<rect x="261.4" y="156.0" width="14.5" height="8.5" fill="#e3e2dc" stroke="#d4d3ce" stroke-width="0.8"/>
<rect x="278.6" y="156.0" width="9.7" height="12.3" fill="#e3e2dc" stroke="#d4d3ce" stroke-width="0.8"/>
<rect x="289.2" y="156.0" width="13.7" height="10.2" fill="#e3e2dc" stroke="#d4d3ce" stroke-width="0.8"/>
<rect x="304.7" y="156.0" width="13.3" height="9.9" fill="#e3e2dc" stroke="#d4d3ce" stroke-width="0.8"/>
<rect x="252.5" y="178.1" width="11.7" height="7.9" fill="#e3e2dc" stroke="#d4d3ce" stroke-width="0.8"/>
<rect x="265.3" y="175.0" width="14.6" height="11.0" fill="#e3e2dc" stroke="#d4d3ce" stroke-width="0.8"/>
<rect x="282.6" y="175.7" width="5.3" height="10.3" fill="#e3e2dc" stroke="#d4d3ce" stroke-width="0.8"/>
<rect x="290.1" y="178.9" width="9.3" height="7.1" fill="#e3e2dc" stroke="#d4d3ce" stroke-width="0.8"/>
<rect x="301.9" y="177.2" width="12.9" height="8.8" fill="#e3e2dc" stroke="#d4d3ce" stroke-width="0.8"/>
<rect x="347.1" y="156.0" width="8.0" height="8.6" fill="#e3e2dc" stroke="#d4d3ce" stroke-width="0.8"/>
<rect x="355.7" y="156.0" width="10.5" height="9.8" fill="#e3e2dc" stroke="#d4d3ce" stroke-width="0.8"/>
<rect x="366.6" y="156.0" width="14.6" height="13.0" fill="#e3e2dc" stroke="#d4d3ce" stroke-width="0.8"/>
<rect x="326.7" y="175.9" width="14.1" height="10.1" fill="#e3e2dc" stroke="#d4d3ce" stroke-width="0.8"/>
<rect x="343.4" y="173.5" width="8.6" height="12.5" fill="#e3e2dc" stroke="#d4d3ce" stroke-width="0.8"/>
<rect x="365.0" y="173.4" width="10.1" height="12.6" fill="#e3e2dc" stroke="#d4d3ce" stroke-width="0.8"/>
<rect x="375.6" y="174.3" width="10.4" height="11.7" fill="#e3e2dc" stroke="#d4d3ce" stroke-width="0.8"/>
<rect x="531.0" y="156.0" width="7.8" height="9.2" fill="#e3e2dc" stroke="#d4d3ce" stroke-width="0.8"/>
<rect x="540.2" y="156.0" width="5.9" height="6.5" fill="#e3e2dc" stroke="#d4d3ce" stroke-width="0.8"/>
<rect x="548.3" y="156.0" width="12.5" height="8.0" fill="#e3e2dc" stroke="#d4d3ce" stroke-width="0.8"/>
<rect x="569.7" y="156.0" width="10.9" height="11.2" fill="#e3e2dc" stroke="#d4d3ce" stroke-width="0.8"/>
<rect x="540.7" y="176.6" width="14.4" height="9.4" fill="#e3e2dc" stroke="#d4d3ce" stroke-width="0.8"/>
<rect x="555.4" y="175.1" width="13.0" height="10.9" fill="#e3e2dc" stroke="#d4d3ce" stroke-width="0.8"/>
<rect x="569.7" y="173.0" width="11.4" height="13.0" fill="#e3e2dc" stroke="#d4d3ce" stroke-width="0.8"/>
<rect x="595.0" y="156.0" width="7.0" height="7.5" fill="#e3e2dc" stroke="#d4d3ce" stroke-width="0.8"/>
<rect x="603.8" y="156.0" width="8.0" height="7.6" fill="#e3e2dc" stroke="#d4d3ce" stroke-width="0.8"/>
<rect x="612.1" y="156.0" width="6.9" height="8.6" fill="#e3e2dc" stroke="#d4d3ce" stroke-width="0.8"/>
<rect x="630.8" y="156.0" width="14.4" height="9.6" fill="#e3e2dc" stroke="#d4d3ce" stroke-width="0.8"/>
<rect x="594.6" y="179.0" width="6.7" height="7.0" fill="#e3e2dc" stroke="#d4d3ce" stroke-width="0.8"/>
<rect x="604.2" y="177.2" width="9.0" height="8.8" fill="#e3e2dc" stroke="#d4d3ce" stroke-width="0.8"/>
<rect x="614.3" y="177.0" width="11.9" height="9.0" fill="#e3e2dc" stroke="#d4d3ce" stroke-width="0.8"/>
<rect x="628.8" y="179.5" width="10.7" height="6.5" fill="#e3e2dc" stroke="#d4d3ce" stroke-width="0.8"/>
<rect x="655.4" y="156.0" width="11.3" height="12.5" fill="#e3e2dc" stroke="#d4d3ce" stroke-width="0.8"/>
<rect x="668.0" y="156.0" width="8.0" height="10.1" fill="#e3e2dc" stroke="#d4d3ce" stroke-width="0.8"/>
<rect x="678.2" y="156.0" width="14.5" height="7.4" fill="#e3e2dc" stroke="#d4d3ce" stroke-width="0.8"/>
<rect x="695.3" y="156.0" width="12.9" height="10.3" fill="#e3e2dc" stroke="#d4d3ce" stroke-width="0.8"/>
<rect x="709.2" y="156.0" width="6.8" height="10.1" fill="#e3e2dc" stroke="#d4d3ce" stroke-width="0.8"/>
<rect x="654.5" y="174.3" width="14.0" height="11.7" fill="#e3e2dc" stroke="#d4d3ce" stroke-width="0.8"/>
<rect x="669.4" y="176.3" width="9.8" height="9.7" fill="#e3e2dc" stroke="#d4d3ce" stroke-width="0.8"/>
<rect x="692.3" y="177.3" width="9.8" height="8.7" fill="#e3e2dc" stroke="#d4d3ce" stroke-width="0.8"/>
<rect x="703.9" y="177.8" width="12.1" height="8.2" fill="#e3e2dc" stroke="#d4d3ce" stroke-width="0.8"/>
<rect x="-34.5" y="194.0" width="14.1" height="16.5" fill="#e3e2dc" stroke="#d4d3ce" stroke-width="0.8"/>
<rect x="-19.4" y="194.0" width="13.2" height="12.5" fill="#e3e2dc" stroke="#d4d3ce" stroke-width="0.8"/>
<rect x="-6.1" y="194.0" width="6.9" height="11.4" fill="#e3e2dc" stroke="#d4d3ce" stroke-width="0.8"/>
<rect x="1.2" y="194.0" width="7.3" height="11.4" fill="#e3e2dc" stroke="#d4d3ce" stroke-width="0.8"/>
<rect x="-35.6" y="222.1" width="13.7" height="18.9" fill="#e3e2dc" stroke="#d4d3ce" stroke-width="0.8"/>
<rect x="-19.0" y="229.6" width="5.4" height="11.4" fill="#e3e2dc" stroke="#d4d3ce" stroke-width="0.8"/>
<rect x="-13.5" y="223.5" width="12.1" height="17.5" fill="#e3e2dc" stroke="#d4d3ce" stroke-width="0.8"/>
<rect x="-1.0" y="223.7" width="6.8" height="17.3" fill="#e3e2dc" stroke="#d4d3ce" stroke-width="0.8"/>
<rect x="8.8" y="219.7" width="8.6" height="21.3" fill="#e3e2dc" stroke="#d4d3ce" stroke-width="0.8"/>
<rect x="29.1" y="228.4" width="12.1" height="12.6" fill="#e3e2dc" stroke="#d4d3ce" stroke-width="0.8"/>
<rect x="55.4" y="194.0" width="12.4" height="11.4" fill="#e3e2dc" stroke="#d4d3ce" stroke-width="0.8"/>
<rect x="69.8" y="194.0" width="5.3" height="15.5" fill="#e3e2dc" stroke="#d4d3ce" stroke-width="0.8"/>
<rect x="76.9" y="194.0" width="9.5" height="20.2" fill="#e3e2dc" stroke="#d4d3ce" stroke-width="0.8"/>
<rect x="99.1" y="194.0" width="10.6" height="12.3" fill="#e3e2dc" stroke="#d4d3ce" stroke-width="0.8"/>
<rect x="56.8" y="221.6" width="5.0" height="19.4" fill="#e3e2dc" stroke="#d4d3ce" stroke-width="0.8"/>
<rect x="63.4" y="221.7" width="5.1" height="19.3" fill="#e3e2dc" stroke="#d4d3ce" stroke-width="0.8"/>
<rect x="70.4" y="222.4" width="10.7" height="18.6" fill="#e3e2dc" stroke="#d4d3ce" stroke-width="0.8"/>
<rect x="84.0" y="220.3" width="14.6" height="20.7" fill="#e3e2dc" stroke="#d4d3ce" stroke-width="0.8"/>
<rect x="124.2" y="194.0" width="13.2" height="21.4" fill="#e3e2dc" stroke="#d4d3ce" stroke-width="0.8"/>
<rect x="138.3" y="194.0" width="12.6" height="13.6" fill="#e3e2dc" stroke="#d4d3ce" stroke-width="0.8"/>
<rect x="151.4" y="194.0" width="13.6" height="16.0" fill="#e3e2dc" stroke="#d4d3ce" stroke-width="0.8"/>
<rect x="167.7" y="194.0" width="5.8" height="20.7" fill="#e3e2dc" stroke="#d4d3ce" stroke-width="0.8"/>
<rect x="124.0" y="220.5" width="10.7" height="20.5" fill="#e3e2dc" stroke="#d4d3ce" stroke-width="0.8"/>
<rect x="136.1" y="229.3" width="14.3" height="11.7" fill="#e3e2dc" stroke="#d4d3ce" stroke-width="0.8"/>
<rect x="159.8" y="227.5" width="12.3" height="13.5" fill="#e3e2dc" stroke="#d4d3ce" stroke-width="0.8"/>
<rect x="182.4" y="194.0" width="9.9" height="18.5" fill="#e3e2dc" stroke="#d4d3ce" stroke-width="0.8"/>
<rect x="204.9" y="194.0" width="15.0" height="15.3" fill="#e3e2dc" stroke="#d4d3ce" stroke-width="0.8"/>
<rect x="185.8" y="229.0" width="9.7" height="12.0" fill="#e3e2dc" stroke="#d4d3ce" stroke-width="0.8"/>
<rect x="209.4" y="228.8" width="12.4" height="12.2" fill="#e3e2dc" stroke="#d4d3ce" stroke-width="0.8"/>
<rect x="222.9" y="221.5" width="7.5" height="19.5" fill="#e3e2dc" stroke="#d4d3ce" stroke-width="0.8"/>
<rect x="250.9" y="194.0" width="9.7" height="18.5" fill="#e3e2dc" stroke="#d4d3ce" stroke-width="0.8"/>
<rect x="261.6" y="194.0" width="14.3" height="12.7" fill="#e3e2dc" stroke="#d4d3ce" stroke-width="0.8"/>
<rect x="278.4" y="194.0" width="6.2" height="12.7" fill="#e3e2dc" stroke="#d4d3ce" stroke-width="0.8"/>
<rect x="285.6" y="194.0" width="6.6" height="20.7" fill="#e3e2dc" stroke="#d4d3ce" stroke-width="0.8"/>
<rect x="294.6" y="194.0" width="7.5" height="20.6" fill="#e3e2dc" stroke="#d4d3ce" stroke-width="0.8"/>
<rect x="304.8" y="194.0" width="11.1" height="21.2" fill="#e3e2dc" stroke="#d4d3ce" stroke-width="0.8"/>
<rect x="251.1" y="225.5" width="13.5" height="15.5" fill="#e3e2dc" stroke="#d4d3ce" stroke-width="0.8"/>
<rect x="267.4" y="222.9" width="13.1" height="18.1" fill="#e3e2dc" stroke="#d4d3ce" stroke-width="0.8"/>
<rect x="293.6" y="222.9" width="6.6" height="18.1" fill="#e3e2dc" stroke="#d4d3ce" stroke-width="0.8"/>
<rect x="301.4" y="228.8" width="6.7" height="12.2" fill="#e3e2dc" stroke="#d4d3ce" stroke-width="0.8"/>
<rect x="309.6" y="226.3" width="7.7" height="14.7" fill="#e3e2dc" stroke="#d4d3ce" stroke-width="0.8"/>
<rect x="328.4" y="194.0" width="6.6" height="20.3" fill="#e3e2dc" stroke="#d4d3ce" stroke-width="0.8"/>
<rect x="337.9" y="194.0" width="14.8" height="12.3" fill="#e3e2dc" stroke="#d4d3ce" stroke-width="0.8"/>
<rect x="355.6" y="194.0" width="8.9" height="16.6" fill="#e3e2dc" stroke="#d4d3ce" stroke-width="0.8"/>
<rect x="364.5" y="194.0" width="7.0" height="12.1" fill="#e3e2dc" stroke="#d4d3ce" stroke-width="0.8"/>
<rect x="373.4" y="194.0" width="10.6" height="20.9" fill="#e3e2dc" stroke="#d4d3ce" stroke-width="0.8"/>
<rect x="343.1" y="223.7" width="8.6" height="17.3" fill="#e3e2dc" stroke="#d4d3ce" stroke-width="0.8"/>
<rect x="354.7" y="219.8" width="7.4" height="21.2" fill="#e3e2dc" stroke="#d4d3ce" stroke-width="0.8"/>
<rect x="362.1" y="228.0" width="10.5" height="13.0" fill="#e3e2dc" stroke="#d4d3ce" stroke-width="0.8"/>
<rect x="373.0" y="223.1" width="13.0" height="17.9" fill="#e3e2dc" stroke="#d4d3ce" stroke-width="0.8"/>
<rect x="534.0" y="194.0" width="11.8" height="18.4" fill="#e3e2dc" stroke="#d4d3ce" stroke-width="0.8"/>
<rect x="545.9" y="194.0" width="9.3" height="21.2" fill="#e3e2dc" stroke="#d4d3ce" stroke-width="0.8"/>
<rect x="563.7" y="194.0" width="13.2" height="10.9" fill="#e3e2dc" stroke="#d4d3ce" stroke-width="0.8"/>
<rect x="544.9" y="229.5" width="12.0" height="11.5" fill="#e3e2dc" stroke="#d4d3ce" stroke-width="0.8"/>
<rect x="559.8" y="222.2" width="6.1" height="18.8" fill="#e3e2dc" stroke="#d4d3ce" stroke-width="0.8"/>
<rect x="578.0" y="223.5" width="8.0" height="17.5" fill="#e3e2dc" stroke="#d4d3ce" stroke-width="0.8"/>
<rect x="608.2" y="194.0" width="6.4" height="12.5" fill="#e3e2dc" stroke="#d4d3ce" stroke-width="0.8"/>
<rect x="616.4" y="194.0" width="13.0" height="12.5" fill="#e3e2dc" stroke="#d4d3ce" stroke-width="0.8"/>
<rect x="631.1" y="194.0" width="10.6" height="15.2" fill="#e3e2dc" stroke="#d4d3ce" stroke-width="0.8"/>
<rect x="594.2" y="227.7" width="9.2" height="13.3" fill="#e3e2dc" stroke="#d4d3ce" stroke-width="0.8"/>
<rect x="604.2" y="227.7" width="13.2" height="13.3" fill="#e3e2dc" stroke="#d4d3ce" stroke-width="0.8"/>
<rect x="618.9" y="226.6" width="8.9" height="14.4" fill="#e3e2dc" stroke="#d4d3ce" stroke-width="0.8"/>
<rect x="628.4" y="221.3" width="11.7" height="19.7" fill="#e3e2dc" stroke="#d4d3ce" stroke-width="0.8"/>
<rect x="657.7" y="194.0" width="11.0" height="12.7" fill="#e3e2dc" stroke="#d4d3ce" stroke-width="0.8"/>
<rect x="669.0" y="194.0" width="8.3" height="11.7" fill="#e3e2dc" stroke="#d4d3ce" stroke-width="0.8"/>
<rect x="687.4" y="194.0" width="6.5" height="14.0" fill="#e3e2dc" stroke="#d4d3ce" stroke-width="0.8"/>
<rect x="696.7" y="194.0" width="12.1" height="15.4" fill="#e3e2dc" stroke="#d4d3ce" stroke-width="0.8"/>
<rect x="708.9" y="194.0" width="6.2" height="19.9" fill="#e3e2dc" stroke="#d4d3ce" stroke-width="0.8"/>
<rect x="656.5" y="224.8" width="5.6" height="16.2" fill="#e3e2dc" stroke="#d4d3ce" stroke-width="0.8"/>
<rect x="662.4" y="222.5" width="12.4" height="18.5" fill="#e3e2dc" stroke="#d4d3ce" stroke-width="0.8"/>
<rect x="675.3" y="225.6" width="11.7" height="15.4" fill="#e3e2dc" stroke="#d4d3ce" stroke-width="0.8"/>
<rect x="687.3" y="230.2" width="14.0" height="10.8" fill="#e3e2dc" stroke="#d4d3ce" stroke-width="0.8"/>
<rect x="702.5" y="229.3" width="7.0" height="11.7" fill="#e3e2dc" stroke="#d4d3ce" stroke-width="0.8"/>
<rect x="-34.7" y="249.0" width="7.7" height="18.0" fill="#e3e2dc" stroke="#d4d3ce" stroke-width="0.8"/>
<rect x="-25.8" y="249.0" width="11.9" height="15.4" fill="#e3e2dc" stroke="#d4d3ce" stroke-width="0.8"/>
<rect x="-3.0" y="249.0" width="10.0" height="16.0" fill="#e3e2dc" stroke="#d4d3ce" stroke-width="0.8"/>
<rect x="9.1" y="249.0" width="10.0" height="19.4" fill="#e3e2dc" stroke="#d4d3ce" stroke-width="0.8"/>
<rect x="21.8" y="249.0" width="13.1" height="15.8" fill="#e3e2dc" stroke="#d4d3ce" stroke-width="0.8"/>
<rect x="36.4" y="249.0" width="6.3" height="18.1" fill="#e3e2dc" stroke="#d4d3ce" stroke-width="0.8"/>
<rect x="-32.1" y="277.6" width="5.5" height="18.4" fill="#e3e2dc" stroke="#d4d3ce" stroke-width="0.8"/>
<rect x="-26.3" y="284.7" width="8.2" height="11.3" fill="#e3e2dc" stroke="#d4d3ce" stroke-width="0.8"/>
<rect x="-15.9" y="277.8" width="8.5" height="18.2" fill="#e3e2dc" stroke="#d4d3ce" stroke-width="0.8"/>
<rect x="-5.3" y="274.7" width="7.8" height="21.3" fill="#e3e2dc" stroke="#d4d3ce" stroke-width="0.8"/>
<rect x="10.3" y="275.9" width="6.6" height="20.1" fill="#e3e2dc" stroke="#d4d3ce" stroke-width="0.8"/>
<rect x="17.2" y="278.0" width="8.8" height="18.0" fill="#e3e2dc" stroke="#d4d3ce" stroke-width="0.8"/>
<rect x="57.9" y="249.0" width="11.4" height="20.9" fill="#e3e2dc" stroke="#d4d3ce" stroke-width="0.8"/>
<rect x="69.9" y="249.0" width="10.2" height="15.9" fill="#e3e2dc" stroke="#d4d3ce" stroke-width="0.8"/>
<rect x="81.2" y="249.0" width="10.1" height="17.1" fill="#e3e2dc" stroke="#d4d3ce" stroke-width="0.8"/>
<rect x="92.2" y="249.0" width="10.0" height="16.2" fill="#e3e2dc" stroke="#d4d3ce" stroke-width="0.8"/>
<rect x="104.2" y="249.0" width="6.9" height="16.5" fill="#e3e2dc" stroke="#d4d3ce" stroke-width="0.8"/>
<rect x="56.8" y="279.7" width="12.8" height="16.3" fill="#e3e2dc" stroke="#d4d3ce" stroke-width="0.8"/>
<rect x="72.4" y="281.2" width="10.1" height="14.8" fill="#e3e2dc" stroke="#d4d3ce" stroke-width="0.8"/>
<rect x="83.7" y="276.5" width="12.1" height="19.5" fill="#e3e2dc" stroke="#d4d3ce" stroke-width="0.8"/>
<rect x="98.0" y="280.4" width="7.1" height="15.6" fill="#e3e2dc" stroke="#d4d3ce" stroke-width="0.8"/>
<rect x="106.0" y="277.1" width="7.0" height="18.9" fill="#e3e2dc" stroke="#d4d3ce" stroke-width="0.8"/>
<rect x="121.9" y="249.0" width="12.8" height="17.8" fill="#e3e2dc" stroke="#d4d3ce" stroke-width="0.8"/>
<rect x="136.7" y="249.0" width="11.9" height="13.7" fill="#e3e2dc" stroke="#d4d3ce" stroke-width="0.8"/>
<rect x="149.7" y="249.0" width="5.3" height="21.1" fill="#e3e2dc" stroke="#d4d3ce" stroke-width="0.8"/>
<rect x="157.0" y="249.0" width="14.7" height="19.4" fill="#e3e2dc" stroke="#d4d3ce" stroke-width="0.8"/>
<rect x="121.4" y="277.3" width="13.0" height="18.7" fill="#e3e2dc" stroke="#d4d3ce" stroke-width="0.8"/>
<rect x="135.5" y="280.0" width="7.7" height="16.0" fill="#e3e2dc" stroke="#d4d3ce" stroke-width="0.8"/>
<rect x="145.9" y="275.9" width="13.5" height="20.1" fill="#e3e2dc" stroke="#d4d3ce" stroke-width="0.8"/>
<rect x="160.6" y="274.8" width="8.1" height="21.2" fill="#e3e2dc" stroke="#d4d3ce" stroke-width="0.8"/>
<rect x="183.1" y="249.0" width="14.2" height="19.9" fill="#e3e2dc" stroke="#d4d3ce" stroke-width="0.8"/>
<rect x="199.9" y="249.0" width="13.9" height="15.3" fill="#e3e2dc" stroke="#d4d3ce" stroke-width="0.8"/>
<rect x="226.2" y="249.0" width="9.0" height="17.1" fill="#e3e2dc" stroke="#d4d3ce" stroke-width="0.8"/>
<rect x="235.2" y="249.0" width="5.8" height="14.8" fill="#e3e2dc" stroke="#d4d3ce" stroke-width="0.8"/>
<rect x="185.0" y="277.9" width="8.3" height="18.1" fill="#e3e2dc" stroke="#d4d3ce" stroke-width="0.8"/>
<rect x="193.9" y="278.0" width="5.2" height="18.0" fill="#e3e2dc" stroke="#d4d3ce" stroke-width="0.8"/>
<rect x="207.7" y="279.1" width="10.9" height="16.9" fill="#e3e2dc" stroke="#d4d3ce" stroke-width="0.8"/>
<rect x="218.7" y="278.3" width="8.3" height="17.7" fill="#e3e2dc" stroke="#d4d3ce" stroke-width="0.8"/>
<rect x="228.5" y="283.0" width="6.2" height="13.0" fill="#e3e2dc" stroke="#d4d3ce" stroke-width="0.8"/>
<rect x="236.0" y="275.6" width="5.0" height="20.4" fill="#e3e2dc" stroke="#d4d3ce" stroke-width="0.8"/>
<rect x="250.0" y="249.0" width="13.6" height="13.4" fill="#e3e2dc" stroke="#d4d3ce" stroke-width="0.8"/>
<rect x="264.7" y="249.0" width="5.4" height="19.3" fill="#e3e2dc" stroke="#d4d3ce" stroke-width="0.8"/>
<rect x="283.8" y="249.0" width="8.8" height="13.2" fill="#e3e2dc" stroke="#d4d3ce" stroke-width="0.8"/>
<rect x="294.9" y="249.0" width="13.4" height="16.6" fill="#e3e2dc" stroke="#d4d3ce" stroke-width="0.8"/>
<rect x="310.7" y="249.0" width="6.0" height="13.5" fill="#e3e2dc" stroke="#d4d3ce" stroke-width="0.8"/>
<rect x="253.0" y="280.3" width="5.9" height="15.7" fill="#e3e2dc" stroke="#d4d3ce" stroke-width="0.8"/>
<rect x="258.9" y="284.3" width="5.9" height="11.7" fill="#e3e2dc" stroke="#d4d3ce" stroke-width="0.8"/>
<rect x="266.1" y="282.1" width="10.1" height="13.9" fill="#e3e2dc" stroke="#d4d3ce" stroke-width="0.8"/>
<rect x="277.7" y="283.4" width="14.8" height="12.6" fill="#e3e2dc" stroke="#d4d3ce" stroke-width="0.8"/>
<rect x="294.0" y="276.0" width="8.7" height="20.0" fill="#e3e2dc" stroke="#d4d3ce" stroke-width="0.8"/>
<rect x="305.4" y="281.6" width="8.6" height="14.4" fill="#e3e2dc" stroke="#d4d3ce" stroke-width="0.8"/>
<rect x="327.1" y="249.0" width="5.8" height="21.0" fill="#e3e2dc" stroke="#d4d3ce" stroke-width="0.8"/>
<rect x="333.3" y="249.0" width="11.6" height="16.5" fill="#e3e2dc" stroke="#d4d3ce" stroke-width="0.8"/>
<rect x="345.9" y="249.0" width="13.5" height="14.4" fill="#e3e2dc" stroke="#d4d3ce" stroke-width="0.8"/>
<rect x="362.2" y="249.0" width="8.6" height="15.1" fill="#e3e2dc" stroke="#d4d3ce" stroke-width="0.8"/>
<rect x="372.8" y="249.0" width="11.6" height="15.5" fill="#e3e2dc" stroke="#d4d3ce" stroke-width="0.8"/>
<rect x="329.2" y="276.3" width="9.6" height="19.7" fill="#e3e2dc" stroke="#d4d3ce" stroke-width="0.8"/>
<rect x="348.3" y="279.9" width="11.8" height="16.1" fill="#e3e2dc" stroke="#d4d3ce" stroke-width="0.8"/>
<rect x="360.6" y="278.3" width="6.7" height="17.7" fill="#e3e2dc" stroke="#d4d3ce" stroke-width="0.8"/>
<rect x="368.1" y="283.8" width="11.4" height="12.2" fill="#e3e2dc" stroke="#d4d3ce" stroke-width="0.8"/>
<rect x="380.1" y="281.9" width="5.9" height="14.1" fill="#e3e2dc" stroke="#d4d3ce" stroke-width="0.8"/>
<rect x="395.9" y="249.0" width="11.2" height="12.2" fill="#e3e2dc" stroke="#d4d3ce" stroke-width="0.8"/>
<rect x="409.1" y="249.0" width="10.5" height="17.4" fill="#e3e2dc" stroke="#d4d3ce" stroke-width="0.8"/>
<rect x="421.3" y="249.0" width="7.2" height="15.5" fill="#e3e2dc" stroke="#d4d3ce" stroke-width="0.8"/>
<rect x="430.2" y="249.0" width="12.5" height="14.7" fill="#e3e2dc" stroke="#d4d3ce" stroke-width="0.8"/>
<rect x="445.7" y="249.0" width="12.3" height="17.8" fill="#e3e2dc" stroke="#d4d3ce" stroke-width="0.8"/>
<rect x="394.1" y="274.8" width="14.3" height="21.2" fill="#e3e2dc" stroke="#d4d3ce" stroke-width="0.8"/>
<rect x="409.3" y="283.3" width="13.5" height="12.7" fill="#e3e2dc" stroke="#d4d3ce" stroke-width="0.8"/>
<rect x="424.3" y="275.7" width="5.2" height="20.3" fill="#e3e2dc" stroke="#d4d3ce" stroke-width="0.8"/>
<rect x="444.4" y="281.6" width="13.6" height="14.4" fill="#e3e2dc" stroke="#d4d3ce" stroke-width="0.8"/>
<rect x="466.3" y="249.0" width="5.7" height="17.5" fill="#e3e2dc" stroke="#d4d3ce" stroke-width="0.8"/>
<rect x="483.1" y="249.0" width="13.7" height="21.4" fill="#e3e2dc" stroke="#d4d3ce" stroke-width="0.8"/>
<rect x="499.2" y="249.0" width="7.8" height="20.7" fill="#e3e2dc" stroke="#d4d3ce" stroke-width="0.8"/>
<rect x="468.4" y="283.7" width="13.6" height="12.3" fill="#e3e2dc" stroke="#d4d3ce" stroke-width="0.8"/>
<rect x="483.5" y="280.3" width="12.9" height="15.7" fill="#e3e2dc" stroke="#d4d3ce" stroke-width="0.8"/>
<rect x="499.2" y="277.2" width="7.8" height="18.8" fill="#e3e2dc" stroke="#d4d3ce" stroke-width="0.8"/>
<rect x="507.7" y="281.0" width="12.0" height="15.0" fill="#e3e2dc" stroke="#d4d3ce" stroke-width="0.8"/>
<rect x="533.8" y="249.0" width="8.7" height="16.2" fill="#e3e2dc" stroke="#d4d3ce" stroke-width="0.8"/>
<rect x="556.2" y="249.0" width="7.1" height="14.5" fill="#e3e2dc" stroke="#d4d3ce" stroke-width="0.8"/>
<rect x="565.3" y="249.0" width="9.1" height="16.4" fill="#e3e2dc" stroke="#d4d3ce" stroke-width="0.8"/>
<rect x="577.1" y="249.0" width="8.9" height="16.2" fill="#e3e2dc" stroke="#d4d3ce" stroke-width="0.8"/>
<rect x="532.9" y="276.5" width="8.5" height="19.5" fill="#e3e2dc" stroke="#d4d3ce" stroke-width="0.8"/>
<rect x="542.3" y="280.1" width="11.4" height="15.9" fill="#e3e2dc" stroke="#d4d3ce" stroke-width="0.8"/>
<rect x="555.3" y="280.5" width="7.2" height="15.5" fill="#e3e2dc" stroke="#d4d3ce" stroke-width="0.8"/>
<rect x="564.9" y="276.3" width="7.5" height="19.7" fill="#e3e2dc" stroke="#d4d3ce" stroke-width="0.8"/>
<rect x="574.3" y="283.9" width="11.3" height="12.1" fill="#e3e2dc" stroke="#d4d3ce" stroke-width="0.8"/>
<rect x="597.5" y="249.0" width="12.9" height="18.0" fill="#e3e2dc" stroke="#d4d3ce" stroke-width="0.8"/>
<rect x="611.6" y="249.0" width="11.7" height="21.0" fill="#e3e2dc" stroke="#d4d3ce" stroke-width="0.8"/>
<rect x="623.7" y="249.0" width="9.1" height="16.2" fill="#e3e2dc" stroke="#d4d3ce" stroke-width="0.8"/>
<rect x="633.4" y="249.0" width="12.6" height="14.9" fill="#e3e2dc" stroke="#d4d3ce" stroke-width="0.8"/>
<rect x="596.3" y="280.1" width="6.9" height="15.9" fill="#e3e2dc" stroke="#d4d3ce" stroke-width="0.8"/>
<rect x="604.5" y="276.3" width="10.0" height="19.7" fill="#e3e2dc" stroke="#d4d3ce" stroke-width="0.8"/>
<rect x="617.4" y="284.8" width="7.0" height="11.2" fill="#e3e2dc" stroke="#d4d3ce" stroke-width="0.8"/>
<rect x="626.1" y="282.9" width="10.4" height="13.1" fill="#e3e2dc" stroke="#d4d3ce" stroke-width="0.8"/>
<rect x="637.4" y="282.8" width="8.6" height="13.2" fill="#e3e2dc" stroke="#d4d3ce" stroke-width="0.8"/>
<rect x="655.5" y="249.0" width="9.8" height="11.5" fill="#e3e2dc" stroke="#d4d3ce" stroke-width="0.8"/>
<rect x="667.4" y="249.0" width="6.5" height="16.7" fill="#e3e2dc" stroke="#d4d3ce" stroke-width="0.8"/>
<rect x="674.2" y="249.0" width="13.4" height="20.1" fill="#e3e2dc" stroke="#d4d3ce" stroke-width="0.8"/>
<rect x="688.3" y="249.0" width="5.8" height="13.5" fill="#e3e2dc" stroke="#d4d3ce" stroke-width="0.8"/>
<rect x="695.6" y="249.0" width="7.5" height="14.0" fill="#e3e2dc" stroke="#d4d3ce" stroke-width="0.8"/>
<rect x="704.3" y="249.0" width="11.7" height="18.5" fill="#e3e2dc" stroke="#d4d3ce" stroke-width="0.8"/>
<rect x="654.0" y="284.1" width="8.3" height="11.9" fill="#e3e2dc" stroke="#d4d3ce" stroke-width="0.8"/>
<rect x="664.7" y="283.0" width="15.0" height="13.0" fill="#e3e2dc" stroke="#d4d3ce" stroke-width="0.8"/>
<rect x="681.9" y="275.2" width="9.1" height="20.8" fill="#e3e2dc" stroke="#d4d3ce" stroke-width="0.8"/>
<rect x="692.0" y="275.1" width="5.7" height="20.9" fill="#e3e2dc" stroke="#d4d3ce" stroke-width="0.8"/>
<rect x="699.0" y="277.0" width="9.4" height="19.0" fill="#e3e2dc" stroke="#d4d3ce" stroke-width="0.8"/>
<rect x="-33.4" y="304.0" width="10.6" height="13.9" fill="#e3e2dc" stroke="#d4d3ce" stroke-width="0.8"/>
<rect x="-22.0" y="304.0" width="10.6" height="17.7" fill="#e3e2dc" stroke="#d4d3ce" stroke-width="0.8"/>
<rect x="-10.3" y="304.0" width="13.8" height="18.8" fill="#e3e2dc" stroke="#d4d3ce" stroke-width="0.8"/>
<rect x="5.3" y="304.0" width="11.3" height="17.5" fill="#e3e2dc" stroke="#d4d3ce" stroke-width="0.8"/>
<rect x="17.1" y="304.0" width="8.0" height="16.3" fill="#e3e2dc" stroke="#d4d3ce" stroke-width="0.8"/>
<rect x="25.7" y="304.0" width="11.4" height="15.7" fill="#e3e2dc" stroke="#d4d3ce" stroke-width="0.8"/>
<rect x="37.2" y="304.0" width="8.8" height="12.6" fill="#e3e2dc" stroke="#d4d3ce" stroke-width="0.8"/>
<rect x="-35.5" y="333.8" width="11.7" height="12.2" fill="#e3e2dc" stroke="#d4d3ce" stroke-width="0.8"/>
<rect x="-22.9" y="328.8" width="10.5" height="17.2" fill="#e3e2dc" stroke="#d4d3ce" stroke-width="0.8"/>
<rect x="-10.2" y="327.6" width="5.7" height="18.4" fill="#e3e2dc" stroke="#d4d3ce" stroke-width="0.8"/>
<rect x="-2.4" y="334.8" width="8.7" height="11.2" fill="#e3e2dc" stroke="#d4d3ce" stroke-width="0.8"/>
<rect x="7.8" y="335.3" width="9.1" height="10.7" fill="#e3e2dc" stroke="#d4d3ce" stroke-width="0.8"/>
<rect x="17.9" y="332.9" width="14.7" height="13.1" fill="#e3e2dc" stroke="#d4d3ce" stroke-width="0.8"/>
<rect x="33.2" y="333.4" width="12.8" height="12.6" fill="#e3e2dc" stroke="#d4d3ce" stroke-width="0.8"/>
<rect x="55.6" y="304.0" width="12.6" height="12.1" fill="#e3e2dc" stroke="#d4d3ce" stroke-width="0.8"/>
<rect x="68.3" y="304.0" width="9.5" height="17.8" fill="#e3e2dc" stroke="#d4d3ce" stroke-width="0.8"/>
<rect x="79.1" y="304.0" width="12.6" height="12.1" fill="#e3e2dc" stroke="#d4d3ce" stroke-width="0.8"/>
<rect x="103.2" y="304.0" width="9.8" height="13.5" fill="#e3e2dc" stroke="#d4d3ce" stroke-width="0.8"/>
<rect x="57.7" y="330.9" width="8.0" height="15.1" fill="#e3e2dc" stroke="#d4d3ce" stroke-width="0.8"/>
<rect x="65.9" y="335.5" width="14.2" height="10.5" fill="#e3e2dc" stroke="#d4d3ce" stroke-width="0.8"/>
<rect x="82.3" y="332.9" width="5.2" height="13.1" fill="#e3e2dc" stroke="#d4d3ce" stroke-width="0.8"/>
<rect x="88.9" y="335.1" width="5.2" height="10.9" fill="#e3e2dc" stroke="#d4d3ce" stroke-width="0.8"/>
<rect x="94.3" y="334.7" width="5.9" height="11.3" fill="#e3e2dc" stroke="#d4d3ce" stroke-width="0.8"/>
<rect x="100.6" y="332.5" width="12.4" height="13.5" fill="#e3e2dc" stroke="#d4d3ce" stroke-width="0.8"/>
<rect x="124.4" y="304.0" width="5.5" height="16.6" fill="#e3e2dc" stroke="#d4d3ce" stroke-width="0.8"/>
<rect x="142.0" y="304.0" width="5.6" height="16.1" fill="#e3e2dc" stroke="#d4d3ce" stroke-width="0.8"/>
<rect x="149.8" y="304.0" width="7.8" height="14.2" fill="#e3e2dc" stroke="#d4d3ce" stroke-width="0.8"/>
<rect x="158.9" y="304.0" width="7.8" height="15.1" fill="#e3e2dc" stroke="#d4d3ce" stroke-width="0.8"/>
<rect x="167.6" y="304.0" width="6.4" height="10.3" fill="#e3e2dc" stroke="#d4d3ce" stroke-width="0.8"/>
<rect x="121.9" y="331.7" width="6.1" height="14.3" fill="#e3e2dc" stroke="#d4d3ce" stroke-width="0.8"/>
<rect x="157.4" y="328.8" width="7.6" height="17.2" fill="#e3e2dc" stroke="#d4d3ce" stroke-width="0.8"/>
<rect x="165.6" y="330.3" width="8.4" height="15.7" fill="#e3e2dc" stroke="#d4d3ce" stroke-width="0.8"/>
<rect x="182.3" y="304.0" width="13.6" height="11.2" fill="#e3e2dc" stroke="#d4d3ce" stroke-width="0.8"/>
<rect x="197.8" y="304.0" width="6.9" height="13.9" fill="#e3e2dc" stroke="#d4d3ce" stroke-width="0.8"/>
<rect x="205.0" y="304.0" width="11.6" height="10.5" fill="#e3e2dc" stroke="#d4d3ce" stroke-width="0.8"/>
<rect x="218.6" y="304.0" width="11.9" height="9.9" fill="#e3e2dc" stroke="#d4d3ce" stroke-width="0.8"/>
<rect x="233.3" y="304.0" width="7.7" height="13.5" fill="#e3e2dc" stroke="#d4d3ce" stroke-width="0.8"/>
<rect x="185.0" y="332.7" width="11.5" height="13.3" fill="#e3e2dc" stroke="#d4d3ce" stroke-width="0.8"/>
<rect x="207.2" y="332.1" width="14.9" height="13.9" fill="#e3e2dc" stroke="#d4d3ce" stroke-width="0.8"/>
<rect x="252.5" y="304.0" width="7.7" height="17.0" fill="#e3e2dc" stroke="#d4d3ce" stroke-width="0.8"/>
<rect x="261.1" y="304.0" width="8.7" height="17.1" fill="#e3e2dc" stroke="#d4d3ce" stroke-width="0.8"/>
<rect x="272.3" y="304.0" width="11.7" height="11.1" fill="#e3e2dc" stroke="#d4d3ce" stroke-width="0.8"/>
<rect x="285.7" y="304.0" width="7.1" height="12.7" fill="#e3e2dc" stroke="#d4d3ce" stroke-width="0.8"/>
<rect x="293.3" y="304.0" width="12.2" height="11.6" fill="#e3e2dc" stroke="#d4d3ce" stroke-width="0.8"/>
<rect x="306.5" y="304.0" width="11.5" height="12.4" fill="#e3e2dc" stroke="#d4d3ce" stroke-width="0.8"/>
<rect x="249.0" y="332.9" width="9.4" height="13.1" fill="#e3e2dc" stroke="#d4d3ce" stroke-width="0.8"/>
<rect x="270.4" y="336.3" width="7.5" height="9.7" fill="#e3e2dc" stroke="#d4d3ce" stroke-width="0.8"/>
<rect x="280.1" y="331.7" width="10.8" height="14.3" fill="#e3e2dc" stroke="#d4d3ce" stroke-width="0.8"/>
<rect x="309.1" y="328.4" width="6.2" height="17.6" fill="#e3e2dc" stroke="#d4d3ce" stroke-width="0.8"/>
<rect x="329.2" y="304.0" width="12.0" height="14.7" fill="#e3e2dc" stroke="#d4d3ce" stroke-width="0.8"/>
<rect x="341.7" y="304.0" width="10.4" height="12.0" fill="#e3e2dc" stroke="#d4d3ce" stroke-width="0.8"/>
<rect x="352.6" y="304.0" width="12.1" height="14.9" fill="#e3e2dc" stroke="#d4d3ce" stroke-width="0.8"/>
<rect x="366.6" y="304.0" width="11.0" height="18.3" fill="#e3e2dc" stroke="#d4d3ce" stroke-width="0.8"/>
<rect x="379.3" y="304.0" width="6.7" height="18.3" fill="#e3e2dc" stroke="#d4d3ce" stroke-width="0.8"/>
<rect x="327.3" y="327.7" width="12.1" height="18.3" fill="#e3e2dc" stroke="#d4d3ce" stroke-width="0.8"/>
<rect x="341.4" y="329.1" width="14.4" height="16.9" fill="#e3e2dc" stroke="#d4d3ce" stroke-width="0.8"/>
<rect x="357.1" y="333.5" width="12.6" height="12.5" fill="#e3e2dc" stroke="#d4d3ce" stroke-width="0.8"/>
<rect x="371.6" y="334.1" width="13.1" height="11.9" fill="#e3e2dc" stroke="#d4d3ce" stroke-width="0.8"/>
<rect x="394.5" y="304.0" width="6.4" height="14.2" fill="#e3e2dc" stroke="#d4d3ce" stroke-width="0.8"/>
<rect x="403.7" y="304.0" width="15.0" height="13.7" fill="#e3e2dc" stroke="#d4d3ce" stroke-width="0.8"/>
<rect x="420.6" y="304.0" width="6.7" height="18.7" fill="#e3e2dc" stroke="#d4d3ce" stroke-width="0.8"/>
<rect x="427.5" y="304.0" width="9.5" height="9.7" fill="#e3e2dc" stroke="#d4d3ce" stroke-width="0.8"/>
<rect x="438.3" y="304.0" width="14.5" height="13.4" fill="#e3e2dc" stroke="#d4d3ce" stroke-width="0.8"/>
<rect x="396.3" y="333.6" width="7.4" height="12.4" fill="#e3e2dc" stroke="#d4d3ce" stroke-width="0.8"/>
<rect x="404.9" y="331.7" width="11.5" height="14.3" fill="#e3e2dc" stroke="#d4d3ce" stroke-width="0.8"/>
<rect x="418.2" y="334.6" width="15.0" height="11.4" fill="#e3e2dc" stroke="#d4d3ce" stroke-width="0.8"/>
<rect x="433.2" y="336.0" width="5.9" height="10.0" fill="#e3e2dc" stroke="#d4d3ce" stroke-width="0.8"/>
<rect x="441.6" y="327.3" width="12.0" height="18.7" fill="#e3e2dc" stroke="#d4d3ce" stroke-width="0.8"/>
<rect x="468.3" y="304.0" width="5.1" height="13.1" fill="#e3e2dc" stroke="#d4d3ce" stroke-width="0.8"/>
<rect x="475.3" y="304.0" width="5.7" height="14.7" fill="#e3e2dc" stroke="#d4d3ce" stroke-width="0.8"/>
<rect x="482.4" y="304.0" width="9.0" height="10.5" fill="#e3e2dc" stroke="#d4d3ce" stroke-width="0.8"/>
<rect x="493.9" y="304.0" width="11.0" height="10.6" fill="#e3e2dc" stroke="#d4d3ce" stroke-width="0.8"/>
<rect x="507.5" y="304.0" width="14.5" height="16.7" fill="#e3e2dc" stroke="#d4d3ce" stroke-width="0.8"/>
<rect x="468.7" y="327.8" width="7.8" height="18.2" fill="#e3e2dc" stroke="#d4d3ce" stroke-width="0.8"/>
<rect x="479.1" y="331.0" width="7.5" height="15.0" fill="#e3e2dc" stroke="#d4d3ce" stroke-width="0.8"/>
<rect x="487.5" y="330.6" width="12.6" height="15.4" fill="#e3e2dc" stroke="#d4d3ce" stroke-width="0.8"/>
<rect x="534.0" y="304.0" width="5.3" height="13.9" fill="#e3e2dc" stroke="#d4d3ce" stroke-width="0.8"/>
<rect x="541.4" y="304.0" width="14.7" height="15.4" fill="#e3e2dc" stroke="#d4d3ce" stroke-width="0.8"/>
<rect x="568.4" y="304.0" width="8.2" height="17.8" fill="#e3e2dc" stroke="#d4d3ce" stroke-width="0.8"/>
<rect x="579.0" y="304.0" width="5.3" height="15.7" fill="#e3e2dc" stroke="#d4d3ce" stroke-width="0.8"/>
<rect x="531.5" y="329.8" width="7.3" height="16.2" fill="#e3e2dc" stroke="#d4d3ce" stroke-width="0.8"/>
<rect x="551.2" y="334.2" width="14.5" height="11.8" fill="#e3e2dc" stroke="#d4d3ce" stroke-width="0.8"/>
<rect x="566.9" y="328.9" width="8.5" height="17.1" fill="#e3e2dc" stroke="#d4d3ce" stroke-width="0.8"/>
<rect x="577.0" y="327.6" width="9.0" height="18.4" fill="#e3e2dc" stroke="#d4d3ce" stroke-width="0.8"/>
<rect x="596.0" y="304.0" width="14.4" height="11.1" fill="#e3e2dc" stroke="#d4d3ce" stroke-width="0.8"/>
<rect x="611.5" y="304.0" width="10.5" height="18.3" fill="#e3e2dc" stroke="#d4d3ce" stroke-width="0.8"/>
<rect x="623.0" y="304.0" width="6.6" height="10.8" fill="#e3e2dc" stroke="#d4d3ce" stroke-width="0.8"/>
<rect x="631.7" y="304.0" width="10.8" height="10.7" fill="#e3e2dc" stroke="#d4d3ce" stroke-width="0.8"/>
<rect x="594.6" y="328.7" width="13.2" height="17.3" fill="#e3e2dc" stroke="#d4d3ce" stroke-width="0.8"/>
<rect x="610.6" y="334.3" width="13.1" height="11.7" fill="#e3e2dc" stroke="#d4d3ce" stroke-width="0.8"/>
<rect x="626.3" y="335.6" width="13.3" height="10.4" fill="#e3e2dc" stroke="#d4d3ce" stroke-width="0.8"/>
<rect x="656.5" y="304.0" width="13.3" height="18.9" fill="#e3e2dc" stroke="#d4d3ce" stroke-width="0.8"/>
<rect x="672.4" y="304.0" width="14.2" height="12.5" fill="#e3e2dc" stroke="#d4d3ce" stroke-width="0.8"/>
<rect x="688.6" y="304.0" width="13.5" height="14.9" fill="#e3e2dc" stroke="#d4d3ce" stroke-width="0.8"/>
<rect x="655.0" y="330.1" width="12.0" height="15.9" fill="#e3e2dc" stroke="#d4d3ce" stroke-width="0.8"/>
<rect x="669.3" y="333.6" width="12.7" height="12.4" fill="#e3e2dc" stroke="#d4d3ce" stroke-width="0.8"/>
<rect x="682.8" y="332.1" width="12.7" height="13.9" fill="#e3e2dc" stroke="#d4d3ce" stroke-width="0.8"/>
<rect x="702.5" y="329.3" width="5.7" height="16.7" fill="#e3e2dc" stroke="#d4d3ce" stroke-width="0.8"/>
<rect x="710.3" y="334.2" width="5.7" height="11.8" fill="#e3e2dc" stroke="#d4d3ce" stroke-width="0.8"/>
<rect x="-100" y="-332.25" width="900" height="4.5" fill="#fbfbfa"/>
<rect x="-100" y="-272.25" width="900" height="4.5" fill="#fbfbfa"/>
<rect x="-100" y="-210.25" width="900" height="4.5" fill="#fbfbfa"/>
<rect x="-100" y="-167.25" width="900" height="4.5" fill="#fbfbfa"/>
<rect x="-100" y="-130.5" width="900" height="11" fill="#fbfbfa"/>
<rect x="-100" y="-70.25" width="900" height="4.5" fill="#fbfbfa"/>
<rect x="-100" y="-22.25" width="900" height="4.5" fill="#fbfbfa"/>
<rect x="-100" y="8.75" width="900" height="4.5" fill="#fbfbfa"/>
<rect x="-100" y="54.75" width="900" height="4.5" fill="#fbfbfa"/>
<rect x="-100" y="96.75" width="900" height="4.5" fill="#fbfbfa"/>
<rect x="-100" y="187.75" width="900" height="4.5" fill="#fbfbfa"/>
<rect x="-100" y="242.75" width="900" height="4.5" fill="#fbfbfa"/>
<rect x="-100" y="297.75" width="900" height="4.5" fill="#fbfbfa"/>
<rect x="-100" y="347.75" width="900" height="4.5" fill="#fbfbfa"/>
<rect x="-42.25" y="-400" width="4.5" height="800" fill="#fbfbfa"/>
<rect x="47.75" y="-400" width="4.5" height="800" fill="#fbfbfa"/>
<rect x="114.75" y="-400" width="4.5" height="800" fill="#fbfbfa"/>
<rect x="175.75" y="-400" width="4.5" height="800" fill="#fbfbfa"/>
<rect x="242.75" y="-400" width="4.5" height="800" fill="#fbfbfa"/>
<rect x="319.75" y="-400" width="4.5" height="800" fill="#fbfbfa"/>
<rect x="385.0" y="-400" width="10" height="800" fill="#fbfbfa"/>
<rect x="459.75" y="-400" width="4.5" height="800" fill="#fbfbfa"/>
<rect x="521.0" y="-400" width="10" height="800" fill="#fbfbfa"/>
<rect x="587.75" y="-400" width="4.5" height="800" fill="#fbfbfa"/>
<rect x="647.75" y="-400" width="4.5" height="800" fill="#fbfbfa"/>
<rect x="717.75" y="-400" width="4.5" height="800" fill="#fbfbfa"/>
<rect x="395" y="-100" width="126" height="164" fill="#e4e3de" stroke="#d6d5d0" stroke-width="0.8"/>
<rect x="395" y="76" width="126" height="124" fill="#e4e3de" stroke="#d6d5d0" stroke-width="0.8"/>
<rect x="-100" y="128" width="900" height="26" fill="#cdcdcb"/>
<rect x="-100" y="131" width="900" height="20" fill="#d6d6d4"/>
<rect x="-100" y="140" width="900" height="1.5" fill="#e2e2e0"/>
</g>
<polygon points="433.0,295.0 491.0,215.0 556.0,236.0 570.0,236.0 570.0,390.0 472.0,390.0 470.0,344.0" fill="#dfecdc" stroke="none" stroke-width="0.8"/>
<polygon points="470.0,344.0 520.0,335.0 545.0,360.0 556.0,380.0 472.0,390.0" fill="#d8e6c8" stroke="none" stroke-width="0.8"/>
<circle cx="515" cy="293.5" r="41" fill="none" stroke="#b8c6b6" stroke-width="0.8"/>
<circle cx="488" cy="239" r="8" fill="none" stroke="#c8d6c6" stroke-width="1"/>
<polygon points="431.0,1.0 460.0,18.0 505.0,20.0 556.0,6.0 570.0,0.0 431.0,0.0" fill="#e2edd8" stroke="none" stroke-width="0.8"/>
<polygon points="313.0,56.0 350.0,60.0 348.0,74.0 315.0,72.0" fill="#d9e6c8" stroke="none" stroke-width="0.8"/>
<polygon points="343.0,63.0 392.0,70.0 390.0,113.0 345.0,110.0" fill="#e4ecdc" stroke="none" stroke-width="0.8"/>
<polygon points="456.7,57.9 480.3,42.2 543.2,40.6 541.6,48.5 464.5,67.3" fill="#e8e3f1" stroke="#cfc7dc" stroke-width="0.8"/>
<polygon points="516.4,90.9 543.2,64.2 570.0,62.6 570.0,120.8 544.7,119.2 533.7,108.2" fill="#e8e3f1" stroke="#cfc7dc" stroke-width="0.8"/>
<polygon points="455.1,158.5 491.3,108.2 533.7,139.7 499.1,186.8" fill="#e8e3f1" stroke="#cfc7dc" stroke-width="0.8"/>
<polygon points="522.7,188.4 544.7,153.8 570.0,155.4 570.0,210.0" fill="#e8e3f1" stroke="#cfc7dc" stroke-width="0.8"/>
<path d="M425,70 C440,45 455,33 488,29 L570,25" stroke="#fbfbfa" stroke-width="9" fill="none"/>
<text x="86.3" y="28.4" font-family="Liberation Sans" font-size="13" fill="#6b6b6b" text-anchor="middle" font-weight="400" dominant-baseline="central" transform="rotate(35 86.3 28.4)">W Clay St</text>
<text x="245.6" y="149.8" font-family="Liberation Sans" font-size="13" fill="#6b6b6b" text-anchor="middle" font-weight="400" dominant-baseline="central" transform="rotate(35 245.6 149.8)">E Clay St</text>
<text x="73.2" y="121.7" font-family="Liberation Sans" font-size="13" fill="#6b6b6b" text-anchor="middle" font-weight="400" dominant-baseline="central" transform="rotate(35 73.2 121.7)">W Marshall St</text>
<text x="89.9" y="188.7" font-family="Liberation Sans" font-size="13" fill="#6b6b6b" text-anchor="middle" font-weight="400" dominant-baseline="central" transform="rotate(35 89.9 188.7)">W Marshall St</text>
<text x="315.2" y="221.2" font-family="Liberation Sans" font-size="13" fill="#6b6b6b" text-anchor="middle" font-weight="400" dominant-baseline="central" transform="rotate(-55 315.2 221.2)">N 3rd St</text>
<text x="56.9" y="347" font-family="Liberation Sans" font-size="13" fill="#6b6b6b" text-anchor="middle" font-weight="400" dominant-baseline="central" transform="rotate(-52 56.9 347)">N 1st St</text>
<text x="122.9" y="376" font-family="Liberation Sans" font-size="13" fill="#6b6b6b" text-anchor="middle" font-weight="400" dominant-baseline="central" transform="rotate(-52 122.9 376)">N 2nd St</text>
<text x="503.8" y="86.2" font-family="Liberation Sans" font-size="13" fill="#6b6b6b" text-anchor="middle" font-weight="400" dominant-baseline="central" transform="rotate(-52 503.8 86.2)">N 4th St</text>
<text x="516" y="32" font-family="Liberation Sans" font-size="13" fill="#6b6b6b" text-anchor="middle" font-weight="400" dominant-baseline="central">N 3rd St</text>
<text x="222" y="12" font-family="Liberation Sans" font-size="13" fill="#6b6b6b" text-anchor="middle" font-weight="400" dominant-baseline="central" transform="rotate(-55 222 12)">Sa</text>
<text x="15" y="16" font-family="Liberation Sans" font-size="13" fill="#6b6b6b" text-anchor="middle" font-weight="400" dominant-baseline="central" transform="rotate(82 15 16)">ok Rd</text>
<text x="374.9" y="75.2" font-family="Liberation Sans" font-size="13.5" fill="#557548" text-anchor="middle" font-weight="700" dominant-baseline="central">Maggie L.</text>
<text x="374.9" y="89.3" font-family="Liberation Sans" font-size="13.5" fill="#557548" text-anchor="middle" font-weight="700" dominant-baseline="central">Walker National</text>
<text x="374.9" y="104.3" font-family="Liberation Sans" font-size="13.5" fill="#557548" text-anchor="middle" font-weight="700" dominant-baseline="central">Historic Site</text>
<text x="207.8" y="276" font-family="Liberation Sans" font-size="13.5" fill="#5a5a5a" text-anchor="middle" font-weight="700" dominant-baseline="central">New York</text>
<text x="207.8" y="290.5" font-family="Liberation Sans" font-size="13.5" fill="#5a5a5a" text-anchor="middle" font-weight="700" dominant-baseline="central">Fashion Mens</text>
<text x="207.8" y="305" font-family="Liberation Sans" font-size="13.5" fill="#5a5a5a" text-anchor="middle" font-weight="700" dominant-baseline="central">&amp; Boys</text>
<text x="515.6" y="285.5" font-family="Liberation Sans" font-size="12.5" fill="#606060" text-anchor="middle" font-weight="700" dominant-baseline="central">Richmond</text>
<text x="515.6" y="300" font-family="Liberation Sans" font-size="12.5" fill="#606060" text-anchor="middle" font-weight="700" dominant-baseline="central">Coliseum</text>
<text x="511" y="372" font-family="Liberation Sans" font-size="12.5" fill="#6aa84f" text-anchor="middle" font-weight="700" dominant-baseline="central">Festival Park</text>
<path d="M85,239 Q97,235 109,239 L110,255 Q97,259 84,255 Z" fill="#fff" stroke="#555" stroke-width="1.2"/>
<text x="97" y="247.5" font-family="Liberation Sans" font-size="11" fill="#222" text-anchor="middle" font-weight="400" dominant-baseline="central">250</text>
<rect x="504" y="213" width="20" height="17" fill="#fff" stroke="#555" stroke-width="1.2"/>
<text x="514" y="221.5" font-family="Liberation Sans" font-size="11" fill="#222" text-anchor="middle" font-weight="400" dominant-baseline="central">33</text>
<circle cx="282" cy="190" r="5" fill="#b5121b"/>
<rect x="21" y="20" width="41" height="82" rx="5" fill="#f5f5f5"/>
<rect x="21" y="61.5" width="41" height="1" fill="#d0d0d0"/>
<path d="M36,41 H48 M42,35 V47" stroke="#555" stroke-width="1.5"/>
<path d="M35,82 H48" stroke="#555" stroke-width="1.5"/>
</g>
<rect x="0.75" y="0.75" width="562.5" height="379.5" rx="10" ry="10" fill="none" stroke="#c9c9c9" stroke-width="1.5"/>
</svg>
<div class="a" style="left:1631px;top:755px;width:615px;height:381px;border:1.5px solid #cfcfcf;border-radius:11px;background:#fff"></div>
<svg class="a" style="left:1631px;top:755px" width="615" height="381" viewBox="0 0 615 381">
<defs><filter id="zs" x="-50%" y="-50%" width="200%" height="200%"><feDropShadow dx="0" dy="3" stdDeviation="5" flood-color="#000" flood-opacity="0.10"/></filter></defs>
<line x1="250.8" y1="55.4" x2="307.4" y2="190.1" stroke="#1f5768" stroke-width="2"/>
<line x1="396.5" y1="74.1" x2="307.4" y2="190.1" stroke="#1f5768" stroke-width="2"/>
<line x1="161.6" y1="170.3" x2="307.4" y2="190.1" stroke="#1f5768" stroke-width="2"/>
<line x1="452.4" y1="209.2" x2="307.4" y2="190.1" stroke="#1f5768" stroke-width="2"/>
<line x1="218.2" y1="305.8" x2="307.4" y2="190.1" stroke="#1f5768" stroke-width="2"/>
<line x1="363.2" y1="326.0" x2="307.4" y2="190.1" stroke="#1f5768" stroke-width="2"/>
<polygon points="279.5,128.3 267.0,114.0 278.0,109.4" fill="#1f5768"/>
<polygon points="349.5,136.1 355.7,118.2 365.2,125.5" fill="#1f5768"/>
<polygon points="241.9,180.2 223.3,183.7 224.9,171.8" fill="#1f5768"/>
<polygon points="374.5,199.2 393.1,195.6 391.5,207.5" fill="#1f5768"/>
<polygon points="266.9,243.9 260.7,261.8 251.2,254.5" fill="#1f5768"/>
<polygon points="334.0,251.5 346.4,265.8 335.3,270.4" fill="#1f5768"/>
<circle cx="250.8" cy="55.4" r="5.5" fill="#1a2636"/>
<circle cx="396.5" cy="74.1" r="5.5" fill="#1a2636"/>
<circle cx="161.6" cy="170.3" r="5.5" fill="#1a2636"/>
<circle cx="452.4" cy="209.2" r="5.5" fill="#1a2636"/>
<circle cx="218.2" cy="305.8" r="5.5" fill="#1a2636"/>
<circle cx="363.2" cy="326.0" r="5.5" fill="#1a2636"/>
<circle cx="307.4" cy="190.1" r="5.5" fill="#c0141b"/>
<text x="251.5" y="41.2" font-family="Liberation Sans" font-size="16.2" fill="#6e6e6e" text-anchor="middle">Etta</text>
<text x="396.5" y="56.4" font-family="Liberation Sans" font-size="16.2" fill="#6e6e6e" text-anchor="middle">Larry</text>
<text x="162.3" y="156.2" font-family="Liberation Sans" font-size="16.2" fill="#6e6e6e" text-anchor="middle">Joe</text>
<text x="452.4" y="195.0" font-family="Liberation Sans" font-size="16.2" fill="#6e6e6e" text-anchor="middle">Lauren</text>
<text x="218.2" y="291.7" font-family="Liberation Sans" font-size="16.2" fill="#6e6e6e" text-anchor="middle">Jane</text>
<text x="363.2" y="311.8" font-family="Liberation Sans" font-size="16.2" fill="#6e6e6e" text-anchor="middle">Beau</text>
<text x="307.6" y="173.2" font-family="Liberation Sans" font-size="16.2" fill="#6e6e6e" text-anchor="middle">New Metal Office Suppliers</text>
<text x="288.5" y="120.0" font-family="Liberation Sans" font-size="16.8" fill="#6e6e6e" text-anchor="middle" transform="rotate(67.2 288.5 120.0)">WorksFor</text>
<text x="381.6" y="191.0" font-family="Liberation Sans" font-size="16.8" fill="#6e6e6e" text-anchor="middle" transform="rotate(7.5 381.6 191.0)">WorksFor</text>
<text x="256.0" y="243.0" font-family="Liberation Sans" font-size="16.8" fill="#6e6e6e" text-anchor="middle" transform="rotate(-52.4 256.0 243.0)">WorksFor</text>
<g filter="url(#zs)"><rect x="21" y="20" width="41" height="82" rx="4" fill="#f8f8f8"/></g>
<rect x="21" y="61" width="41" height="1" fill="#d6d6d6"/>
<path d="M36,41 H48 M42,35 V47" stroke="#555" stroke-width="1.4"/>
<path d="M35,82 H48" stroke="#555" stroke-width="1.4"/>
</svg>
<div class="a" style="left:2210px;top:110px;width:150px;height:124px;background:#f6f6f6;border-radius:3px;box-shadow:0 3px 12px rgba(0,0,0,.10)"></div>
<svg class="a" style="left:2229px;top:130px;" width="24" height="22" viewBox="0 0 24 22"><g stroke="#555" stroke-width="1.6" fill="none"><path d="M16.5,19.5 H2.5 V2.5 H21.5 V11"/><path d="M19,13 V21.5 M14.5,17 H23"/></g></svg>
<div class="t" style="left:2267.5px;top:130.2px;font-size:18.7px;color:#6a6a6a">Add To</div>
<svg class="a" style="left:2230px;top:196px;" width="22" height="16" viewBox="0 0 22 16"><path d="M3.5,3 L8.5,8 L3.5,13 M11,3 L16,8 L11,13" stroke="#555" stroke-width="1.6" fill="none" stroke-linecap="round" stroke-linejoin="round"/></svg>
<div class="t" style="left:2267.5px;top:193.0px;font-size:18.7px;color:#6a6a6a">Collapse</div>
</div>
<div class="badge" style="left:354.5px;top:297.6px"><svg width="104" height="104" style="position:absolute;left:0;top:0"><polygon points="40.9,37.2 50.1,31.0 59.5,31.0 59.5,72.6 50.1,72.6 50.1,39.7 40.9,44.9" fill="#fff"/></svg></div>
<div class="badge" style="left:696.0px;top:88.0px">2</div>
<div class="badge" style="left:1464.0px;top:107.0px">3</div>
<div class="badge" style="left:2298.0px;top:179.7px">4</div>
<div class="badge" style="left:1472.0px;top:1136.0px">5</div>
</body></html>
